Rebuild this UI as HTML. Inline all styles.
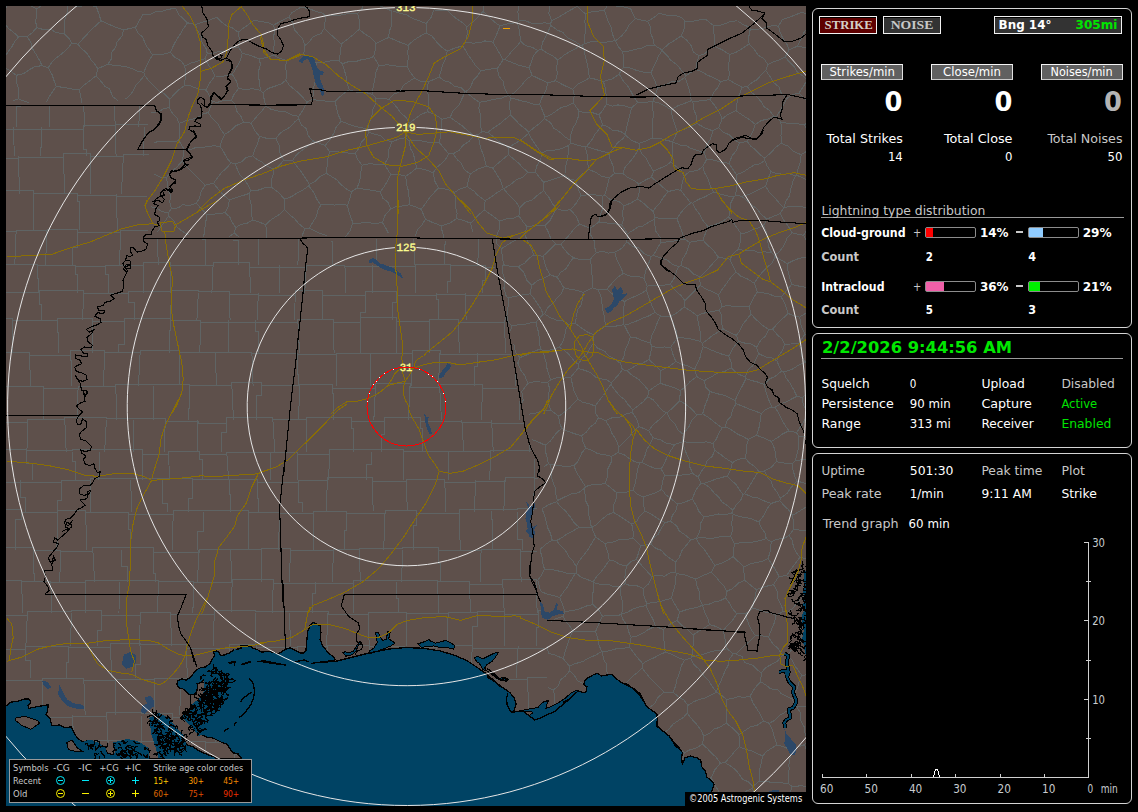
<!DOCTYPE html>
<html lang="en"><head><meta charset="utf-8"><title>Lightning Detector</title>
<style>
html,body{margin:0;padding:0;background:#000;}
body{width:1138px;height:812px;position:relative;overflow:hidden;font-family:"DejaVu Sans Condensed","DejaVu Sans","Liberation Sans",sans-serif;}
#map{position:absolute;left:6px;top:6px;width:800px;height:800px;background:#5e504b;overflow:hidden;}
#map svg{position:absolute;left:0;top:0;}
.panel{position:absolute;left:812px;width:318px;border:1px solid #d4d4d4;border-radius:6px;background:#000;}
.btn{position:absolute;box-sizing:border-box;border:1px solid #f2f2f2;box-shadow:inset 0 1px 0 #000;}
.bar{position:absolute;box-sizing:border-box;width:51px;height:11px;border:1px solid #8c8c8c;border-radius:2px;background:#000;}
.bar i{position:absolute;left:0;top:0;bottom:0;display:block;}
.hr{position:absolute;height:1px;background:#9a9a9a;}
#legend{position:absolute;left:9px;top:759px;width:243px;height:44px;box-sizing:border-box;border:1px solid #9a9a9a;background:#000;}
#copy{position:absolute;left:685px;top:792px;width:121px;height:14px;background:#000;}
#ov{position:absolute;left:0;top:0;}
.ss{font-family:"DejaVu Sans Condensed","DejaVu Sans","Liberation Sans",sans-serif;}
.sf{font-family:"Liberation Serif","DejaVu Serif",serif;}
</style></head><body>
<div id="map"><svg width="800" height="800" viewBox="6 6 800 800" shape-rendering="crispEdges">
<path d="M809.6,16.0 811.4,21.6 M811.4,21.6 817.7,25.8 821.2,30.0 826.9,33.2 M809.6,16.0 802.0,12.1 M588.2,739.7 593.7,733.6 598.6,728.9 601.5,723.6 607.7,719.4 M588.2,739.7 583.5,736.0 577.7,733.3 570.7,731.8 M607.7,719.4 605.1,715.1 601.8,708.1 599.1,703.0 595.7,698.2 M595.7,698.2 590.7,700.2 585.3,704.0 580.9,707.1 576.3,710.7 569.8,713.1 565.0,717.0 M570.7,731.8 568.5,725.5 565.0,717.0 M640.3,824.9 641.6,817.3 642.9,811.1 644.6,804.7 647.3,797.8 M609.1,821.1 611.4,815.0 610.6,807.2 612.3,798.3 613.9,791.8 M647.3,797.8 646.7,796.7 M613.9,791.8 620.9,792.1 626.1,793.4 634.8,795.5 639.5,794.5 646.7,796.7 M611.1,684.0 617.1,683.0 625.7,683.5 M611.1,684.0 605.7,687.6 600.2,693.6 595.9,696.8 M607.7,719.4 614.5,722.2 623.8,725.3 M595.9,696.8 595.7,698.2 M625.7,683.5 629.2,690.3 631.8,695.6 635.0,702.1 635.8,708.5 640.0,713.6 M623.8,725.3 628.7,721.0 634.4,717.4 640.0,713.6 M664.1,692.3 658.0,697.3 654.3,704.0 649.0,708.0 643.0,713.5 M664.1,692.3 660.8,688.6 655.1,683.2 649.9,677.9 646.5,673.5 642.1,668.2 M625.7,683.5 631.3,677.5 637.6,672.3 642.1,668.2 M640.0,713.6 643.0,713.5 M553.5,690.1 555.0,698.8 554.1,706.2 555.2,712.4 M553.5,690.1 548.0,687.5 M550.1,716.0 555.2,712.4 M595.9,696.8 591.8,692.5 587.2,689.4 582.6,683.4 577.6,680.8 573.7,674.4 569.6,670.9 M569.6,670.9 565.1,676.4 560.5,679.9 558.5,685.5 553.5,690.1 M565.0,717.0 555.2,712.4 M550.3,760.0 555.4,753.3 557.7,748.7 561.6,744.4 567.1,737.4 570.7,731.8 M772.6,329.1 778.4,322.6 783.5,317.8 788.2,313.4 M772.6,329.1 777.7,335.3 781.4,338.1 784.8,344.2 M784.8,344.2 790.9,344.0 798.5,343.7 M788.2,313.4 794.7,316.3 799.6,317.1 M799.6,317.1 801.2,325.9 804.9,334.1 M804.9,334.1 798.5,343.7 M816.8,254.4 820.4,259.1 823.1,265.9 M828.1,314.9 822.0,314.3 815.4,313.2 809.2,311.0 M809.2,311.0 809.5,304.6 810.7,297.9 811.3,293.8 812.8,286.6 M819.3,282.7 812.8,286.6 M823.1,265.9 822.3,275.5 819.3,282.7 M799.6,317.1 809.2,311.0 M818.7,336.5 812.8,334.1 804.9,334.1 M828.6,420.3 827.6,428.3 828.2,435.8 827.9,441.7 M725.2,426.9 730.2,429.1 737.0,433.8 742.2,436.2 748.4,439.5 M725.2,426.9 727.4,419.9 731.0,416.3 732.5,409.7 736.1,403.8 M736.1,403.8 743.0,406.3 748.4,408.8 755.9,411.3 761.2,413.7 M761.2,413.7 760.4,419.8 759.1,427.2 756.6,435.3 M756.6,435.3 748.4,439.5 M722.2,427.9 718.9,432.9 716.4,438.9 713.0,443.6 M722.2,427.9 725.2,426.9 M713.0,443.6 714.7,450.3 M732.3,462.6 725.6,458.2 719.6,453.7 714.7,450.3 M732.3,462.6 738.8,459.2 745.0,458.2 M745.0,458.2 747.0,450.6 746.6,445.3 748.4,439.5 M722.2,427.9 716.7,423.8 712.3,420.5 707.9,416.9 702.6,413.9 M702.6,413.9 705.1,405.2 707.6,399.1 709.9,391.5 M736.1,403.8 735.2,400.5 M735.2,400.5 728.8,397.2 722.9,394.9 716.5,393.6 709.9,391.5 M733.2,514.2 739.2,516.5 746.8,517.8 752.4,519.2 758.9,522.0 M733.2,514.2 731.7,522.9 732.4,530.2 730.6,536.6 M758.9,522.0 760.9,527.2 764.9,532.9 766.3,538.7 M766.3,538.7 760.5,540.6 753.6,541.9 748.3,542.6 741.0,542.7 734.3,543.7 M730.6,536.6 734.3,543.7 M703.9,517.1 709.8,515.9 718.5,514.0 725.6,514.9 732.5,512.7 M703.9,517.1 700.6,523.4 699.8,531.8 696.3,538.4 M732.5,512.7 733.2,514.2 M730.6,536.6 724.2,536.1 715.7,537.6 709.9,538.8 702.0,537.2 696.3,538.4 M727.3,476.1 722.2,477.3 715.8,479.1 709.0,481.7 703.3,483.7 M727.3,476.1 732.3,481.2 735.9,484.3 739.9,490.4 743.0,494.3 M703.3,483.7 709.1,486.9 714.4,493.3 718.7,496.9 721.8,501.9 727.4,505.5 732.8,510.3 M743.0,494.3 740.9,499.9 736.6,504.4 732.8,510.3 M732.3,462.6 730.5,470.0 727.3,476.1 M714.7,450.3 712.4,456.0 706.9,461.2 705.4,466.5 701.8,470.7 698.0,477.1 M698.0,477.1 701.0,483.3 M701.0,483.3 703.3,483.7 M745.0,458.2 750.0,463.4 753.3,465.5 758.7,471.0 M744.3,493.7 749.0,487.2 751.0,483.4 755.7,475.7 758.7,471.0 M744.3,493.7 743.0,494.3 M703.9,517.1 699.0,511.5 696.3,505.7 692.4,498.8 M732.5,512.7 732.8,510.3 M692.4,498.8 695.5,490.6 701.0,483.3 M744.3,493.7 752.2,497.0 757.4,497.9 763.7,500.7 771.3,503.4 M771.3,503.4 767.1,508.7 763.6,515.7 758.9,522.0 M557.4,500.6 565.0,496.7 571.4,494.0 578.6,492.8 584.3,488.5 M557.4,500.6 555.7,493.6 555.4,488.0 553.3,483.2 551.3,477.2 551.4,469.5 550.1,464.5 M573.8,465.8 564.9,466.4 559.3,465.7 550.1,464.5 M573.8,465.8 577.3,473.6 581.1,479.7 585.5,486.6 M585.5,486.6 584.3,488.5 M539.8,549.7 546.2,544.0 552.2,540.2 M541.7,508.7 544.1,513.8 546.1,521.4 547.5,527.6 550.5,533.4 552.2,540.2 M557.4,500.6 556.6,501.7 M550.1,464.5 548.4,463.5 M541.7,508.7 548.9,504.6 556.6,501.7 M548.4,463.5 543.8,467.1 M593.7,582.8 593.2,581.8 M593.7,582.8 599.8,584.2 607.3,584.1 612.8,586.2 620.9,586.9 M620.9,586.9 625.1,583.6 M625.1,583.6 625.0,576.0 626.4,566.1 M626.4,566.1 619.5,564.4 614.3,561.0 609.3,560.3 M609.3,560.3 605.1,566.3 601.3,571.6 597.5,575.2 593.2,581.8 M643.3,588.4 636.4,585.6 631.0,586.0 625.1,583.6 M643.3,588.4 644.1,597.3 647.1,603.8 M620.9,586.9 620.7,594.4 622.3,601.5 622.7,606.8 621.8,613.8 M647.1,603.8 646.1,605.8 M646.1,605.8 639.8,606.6 633.2,609.0 627.1,612.4 621.8,613.8 M593.7,582.8 593.4,590.4 592.2,597.1 593.0,604.5 M602.4,616.2 598.4,609.6 593.0,604.5 M602.4,616.2 608.6,615.2 614.5,616.0 621.0,614.7 M621.0,614.7 621.8,613.8 M646.1,605.8 649.7,613.5 652.7,618.7 655.5,626.2 M621.0,614.7 622.9,619.4 627.1,625.3 628.4,631.2 631.2,637.3 M655.5,626.2 648.4,629.5 644.0,632.5 638.0,635.7 631.2,637.3 M611.1,684.0 609.3,678.7 606.3,670.3 606.5,664.1 603.5,659.4 602.3,651.8 M602.3,651.8 607.8,651.1 616.7,648.7 622.7,648.6 629.2,646.9 M642.1,668.2 642.8,663.7 M642.8,663.7 638.1,658.4 633.9,653.1 629.2,646.9 M687.2,713.1 683.5,717.3 678.6,720.5 673.2,724.0 669.7,728.3 664.5,732.8 M687.2,713.1 688.0,705.3 M664.1,692.3 673.2,692.4 M664.5,732.8 658.0,729.2 652.9,723.9 648.5,718.6 643.0,713.5 M688.0,705.3 683.9,700.0 678.5,696.7 673.2,692.4 M655.5,626.2 663.0,629.6 M642.8,663.7 647.5,660.6 653.3,658.1 658.5,655.4 665.1,652.2 M629.2,646.9 631.2,637.3 M665.1,652.2 664.5,644.8 663.5,637.8 663.0,629.6 M673.2,692.4 675.8,685.3 677.1,678.8 679.5,673.3 681.2,665.8 684.6,660.1 M665.1,652.2 670.4,653.7 678.3,657.8 684.6,660.1 M647.1,603.8 652.7,602.4 659.7,601.8 664.9,600.1 671.5,598.3 M671.5,598.3 675.4,605.2 679.5,612.0 M679.5,612.0 677.2,620.5 M677.2,620.5 670.5,624.0 663.0,629.6 M813.8,560.2 813.7,565.6 816.1,574.1 816.2,579.6 M813.8,560.2 819.3,554.4 827.2,549.4 M799.9,557.5 794.9,564.0 790.3,570.0 786.7,575.7 M799.9,557.5 796.4,552.6 793.5,546.7 792.0,539.9 789.0,535.6 M789.0,535.6 784.0,538.3 775.9,539.5 771.2,542.0 M771.2,542.0 770.5,550.5 768.1,558.6 M768.1,558.6 772.8,565.5 775.2,569.2 779.0,576.3 M786.7,575.7 779.0,576.3 M813.8,560.2 808.2,558.9 799.9,557.5 M816.2,579.6 811.4,584.4 805.1,588.2 M805.1,588.2 798.8,583.6 792.6,579.5 786.7,575.7 M793.6,529.3 800.1,530.2 804.4,530.1 812.7,531.6 816.6,531.8 823.7,533.9 M793.6,529.3 789.0,535.6 M827.2,549.4 826.1,540.7 823.7,533.9 M805.0,595.0 805.1,588.2 M805.0,595.0 810.3,600.2 814.5,603.8 821.8,609.2 826.2,612.9 M826.2,612.9 829.0,613.1 M610.9,384.5 606.0,390.9 603.5,395.5 599.4,400.1 595.3,406.1 M610.9,384.5 611.1,382.9 M611.1,382.9 606.5,379.7 599.3,378.6 595.5,377.0 590.1,372.3 584.2,370.2 578.0,368.5 M578.0,399.3 583.0,402.5 588.5,403.4 595.3,406.1 M578.0,399.3 574.4,392.1 572.5,384.5 570.7,377.1 M570.7,377.1 578.0,368.5 M802.0,12.1 794.7,15.2 789.4,17.2 782.1,19.7 M681.6,17.4 674.9,15.5 667.2,15.3 659.1,13.4 M749.1,27.2 742.4,24.2 737.4,20.7 M188.3,234.9 181.6,230.8 177.0,227.0 173.7,220.5 168.5,216.0 M168.5,216.0 165.0,221.2 161.5,226.0 157.6,231.8 M320.8,205.0 317.8,210.3 316.3,216.9 312.4,222.8 309.3,228.0 M320.8,205.0 328.6,204.5 334.8,205.1 339.8,204.4 347.7,205.2 M309.3,228.0 313.9,230.5 320.3,233.5 327.4,235.8 M347.7,205.2 348.4,210.8 351.0,217.6 352.9,223.0 M352.9,223.0 349.8,231.3 344.9,237.6 M382.5,222.7 375.0,223.4 368.4,222.8 361.0,223.0 352.9,223.0 M382.5,222.7 386.1,228.7 388.3,233.1 M309.3,228.0 304.9,228.8 M304.9,228.8 302.2,235.5 M13.8,-5.8 9.4,-0.8 6.2,7.2 2.9,12.8 -0.9,19.2 M-0.9,19.2 4.7,22.9 8.2,28.2 13.4,32.3 18.5,36.8 M0.4,64.3 3.1,60.0 7.2,53.1 12.0,46.5 14.1,42.5 18.5,36.8 M771.9,818.0 762.5,813.8 M821.5,774.3 817.4,779.4 812.5,785.3 M812.5,785.3 815.9,790.0 819.0,797.9 821.0,803.5 823.1,808.0 M602.3,651.8 601.8,651.6 M569.6,670.9 569.4,666.1 M569.4,666.1 574.9,663.7 582.7,661.6 588.2,658.3 594.8,655.5 601.8,651.6 M602.4,616.2 598.8,623.9 595.5,631.8 M601.8,651.6 599.1,645.3 597.6,637.2 595.5,631.8 M550.9,622.0 555.5,618.8 563.0,616.5 M547.1,645.6 548.4,653.5 M563.0,616.5 566.1,621.5 570.7,627.5 572.8,631.7 M572.8,631.7 569.7,637.9 567.7,643.9 565.2,651.5 563.2,658.6 M548.4,653.5 554.6,654.8 563.2,658.6 M593.0,604.5 585.3,606.3 578.6,609.3 570.8,610.7 564.8,611.6 M564.8,611.6 563.0,616.5 M595.5,631.8 588.1,631.5 579.9,632.0 572.8,631.7 M569.4,666.1 563.2,658.6 M564.8,611.6 562.6,604.5 559.7,597.5 M576.2,573.1 581.1,577.2 587.1,579.5 593.2,581.8 M576.2,573.1 575.2,573.6 M575.2,573.6 572.2,578.3 567.7,586.6 564.5,590.6 559.7,597.5 M609.1,821.1 603.4,820.8 596.5,819.3 590.3,818.4 584.5,818.0 M584.5,818.0 583.2,811.5 582.9,805.4 582.9,796.9 582.5,791.2 M613.9,791.8 610.2,786.5 M610.2,786.5 602.5,787.0 597.4,790.0 588.4,791.2 582.5,791.2 M551.4,764.9 550.3,760.0 M551.4,764.9 556.4,770.1 561.2,774.1 565.6,777.0 M588.2,739.7 589.6,748.4 593.0,755.5 M565.6,777.0 566.5,777.1 M593.0,755.5 587.1,760.4 581.2,763.4 577.5,767.7 572.6,773.8 566.5,777.1 M625.0,734.7 629.6,740.0 636.3,744.4 642.7,750.3 647.0,755.1 M625.0,734.7 621.2,740.6 617.8,744.3 614.6,750.5 610.9,755.0 608.2,760.9 M608.2,760.9 613.0,768.5 M613.0,768.5 618.5,767.3 627.7,768.7 633.0,768.4 638.9,766.9 646.8,766.4 M646.8,766.4 647.0,755.1 M664.5,734.8 664.5,732.8 M664.5,734.8 660.8,739.8 656.2,743.7 652.6,750.6 647.0,755.1 M623.8,725.3 625.0,734.7 M593.0,755.5 601.2,757.7 608.2,760.9 M610.2,786.5 611.3,781.8 611.1,775.1 613.0,768.5 M566.5,777.1 571.0,782.8 577.6,785.8 582.5,791.2 M646.7,796.7 645.8,789.1 646.6,781.7 648.5,776.0 648.0,768.1 M648.0,768.1 646.8,766.4 M648.0,768.1 653.7,767.8 661.4,769.0 665.9,769.9 673.4,768.5 679.5,769.0 M664.5,734.8 668.8,738.2 674.5,743.2 679.1,748.1 684.3,752.7 M684.3,752.7 682.1,761.0 679.5,769.0 M818.7,336.5 821.8,343.0 824.6,350.2 M761.2,413.7 765.5,409.7 771.7,406.9 M735.2,400.5 737.7,394.3 740.1,389.8 743.3,384.1 745.8,378.7 M745.8,378.7 752.5,380.8 757.0,381.8 764.0,384.4 M771.7,406.9 768.9,400.2 765.8,391.1 764.0,384.4 M816.2,485.4 817.7,477.7 820.9,470.5 824.3,463.5 M827.9,441.7 826.2,443.2 M826.2,443.2 824.6,452.1 823.0,460.7 M824.3,463.5 823.0,460.7 M776.4,461.7 775.7,454.7 774.4,448.5 771.4,441.4 M776.4,461.7 784.7,463.2 792.2,463.7 M792.2,463.7 795.4,460.6 M795.4,460.6 796.8,454.8 798.1,449.6 798.3,441.8 798.8,436.1 M771.4,441.4 778.1,437.3 782.4,434.1 788.9,430.9 M788.9,430.9 796.5,432.6 M796.5,432.6 798.8,436.1 M758.7,471.0 764.4,471.0 M764.4,471.0 771.1,467.5 776.4,461.7 M756.6,435.3 764.4,438.3 771.4,441.4 M826.2,443.2 820.4,442.5 812.5,440.9 806.4,437.0 798.8,436.1 M823.0,460.7 817.2,461.4 809.3,459.7 802.7,459.7 795.4,460.6 M771.7,406.9 774.6,407.5 M774.6,407.5 778.3,412.3 782.3,420.5 785.6,426.1 788.9,430.9 M828.6,420.3 821.8,417.8 813.1,417.9 806.9,416.1 M806.9,416.1 804.1,421.2 800.3,427.2 796.5,432.6 M811.8,503.9 812.1,496.0 814.0,486.6 M811.8,503.9 806.1,507.0 798.7,511.7 792.6,515.4 M792.6,515.4 788.5,509.7 784.1,505.8 779.9,500.6 M796.8,481.1 803.7,482.8 807.1,484.4 814.0,486.6 M796.8,481.1 791.3,487.2 787.0,493.5 780.4,498.1 M779.9,500.6 780.4,498.1 M816.2,485.4 814.0,486.6 M793.6,529.3 793.4,521.7 792.6,515.4 M771.3,503.4 779.9,500.6 M766.3,538.7 771.2,542.0 M792.2,463.7 792.9,469.5 794.8,476.4 796.8,481.1 M764.4,471.0 767.7,477.5 771.2,481.2 773.0,487.0 777.3,492.7 780.4,498.1 M745.1,377.0 737.6,373.7 731.2,367.9 M745.1,377.0 747.8,370.1 752.9,365.5 755.5,360.1 758.6,353.6 M731.2,367.9 731.2,362.8 728.8,356.1 M728.8,356.1 733.0,348.0 738.5,341.2 M738.5,341.2 745.5,343.3 751.6,344.1 756.5,347.4 M756.5,347.4 758.6,353.6 M709.9,391.5 705.8,387.1 704.1,380.7 M704.1,380.7 712.1,376.5 717.1,373.2 724.6,371.5 731.2,367.9 M745.8,378.7 745.1,377.0 M776.7,360.7 781.5,371.1 M776.7,360.7 771.9,357.9 765.8,357.0 758.6,353.6 M764.0,384.4 769.4,378.9 774.5,376.8 781.5,371.1 M696.7,376.6 704.1,380.7 M696.7,376.6 694.6,369.5 M694.6,369.5 696.6,364.9 700.1,357.3 701.3,351.7 703.2,346.6 M703.2,346.6 708.8,348.9 715.6,351.8 722.6,354.4 728.8,356.1 M768.9,329.5 765.7,335.8 760.6,340.4 756.5,347.4 M768.9,329.5 772.6,329.1 M776.7,360.7 778.4,355.8 782.4,350.7 784.8,344.2 M661.7,489.3 665.8,494.7 673.3,500.5 677.6,504.2 M661.7,489.3 656.1,492.8 650.2,494.5 643.5,496.9 M645.0,511.0 643.1,504.0 643.5,496.9 M645.0,511.0 651.1,514.1 657.7,518.5 665.1,522.7 M677.6,504.2 675.8,510.6 672.3,515.6 670.5,521.2 M670.5,521.2 665.1,522.7 M692.4,498.8 685.2,502.1 677.6,504.2 M696.3,538.4 696.2,538.6 M696.2,538.6 690.6,539.7 M690.6,539.7 685.8,535.4 679.3,531.1 676.6,525.8 670.5,521.2 M733.0,556.7 727.2,560.6 722.0,562.9 714.8,565.5 M733.0,556.7 738.4,561.7 743.9,566.8 M744.6,580.2 744.0,572.7 743.9,566.8 M744.6,580.2 738.5,583.0 732.6,588.6 726.9,591.3 M726.9,591.3 724.0,586.1 719.3,581.1 715.6,576.6 711.4,572.2 M714.8,565.5 711.4,572.2 M734.3,543.7 733.7,551.4 733.0,556.7 M696.2,538.6 699.5,544.3 703.4,548.3 707.5,554.1 711.5,560.4 714.8,565.5 M768.1,558.6 763.2,561.0 755.4,562.7 751.1,563.6 743.9,566.8 M773.5,584.6 764.6,586.7 756.4,589.7 M773.5,584.6 779.0,576.3 M756.4,589.7 751.6,586.0 744.6,580.2 M636.4,559.3 638.8,552.1 640.8,545.6 M636.4,559.3 642.4,566.3 646.7,570.8 651.9,576.9 M651.9,576.9 657.1,575.0 664.7,576.2 670.2,572.8 675.9,573.0 M640.8,545.6 651.0,544.1 M651.0,544.1 655.8,548.4 661.3,550.3 665.4,555.1 669.2,557.7 675.4,562.2 M675.9,573.0 675.4,562.2 M633.0,537.9 640.8,545.6 M633.0,537.9 626.1,539.7 619.4,539.5 612.9,542.1 604.7,543.4 M626.4,566.1 631.1,561.5 636.4,559.3 M609.3,560.3 607.8,551.7 604.7,543.4 M643.3,588.4 648.8,583.6 651.9,576.9 M676.4,573.6 675.4,580.4 674.9,586.4 673.1,592.0 671.5,598.3 M676.4,573.6 675.9,573.0 M633.0,537.9 633.1,531.8 631.8,524.3 M631.8,524.3 637.2,521.0 639.5,516.4 645.0,511.0 M665.1,522.7 660.8,529.1 657.9,534.6 653.7,537.5 651.0,544.1 M690.6,539.7 687.3,544.2 681.8,550.6 679.4,557.3 675.4,562.2 M676.4,573.6 684.0,574.7 689.5,576.7 695.8,579.1 M695.8,579.1 703.5,575.2 711.4,572.2 M639.6,463.0 634.1,461.3 629.4,458.8 623.8,454.5 617.9,452.5 M639.6,463.0 637.4,470.4 636.5,476.2 635.4,483.3 632.9,490.1 M632.9,490.1 625.1,492.6 616.7,492.8 M611.4,456.4 617.9,452.5 M611.4,456.4 611.1,462.4 607.5,469.5 607.5,476.5 605.2,483.3 M605.2,483.3 610.1,487.2 616.7,492.8 M613.3,512.3 613.2,505.8 616.5,498.2 616.7,492.8 M613.3,512.3 618.6,515.3 626.0,520.3 631.8,524.3 M643.5,496.9 637.3,494.5 632.9,490.1 M573.8,465.8 578.2,461.1 581.9,452.8 585.7,448.1 M585.5,486.6 591.4,484.9 597.8,485.0 605.2,483.3 M585.7,448.1 592.5,450.7 597.3,453.5 605.2,454.9 611.4,456.4 M598.4,417.7 595.2,423.2 589.7,427.5 586.1,432.3 581.8,435.6 M598.4,417.7 605.6,420.6 M585.7,448.1 582.8,441.2 581.8,435.6 M617.9,452.5 618.9,447.3 M605.6,420.6 609.7,427.0 611.8,433.1 616.7,440.9 618.9,447.3 M556.7,540.5 562.0,537.6 567.2,533.7 572.6,531.3 579.1,527.1 M556.7,540.5 559.8,545.0 565.1,549.9 568.9,556.6 572.7,560.8 576.2,566.2 M576.2,566.2 578.9,561.1 584.7,554.0 588.4,548.9 592.4,542.3 595.6,536.9 M579.1,527.1 584.3,527.9 591.3,527.3 M595.6,536.9 591.7,527.5 M591.7,527.5 591.3,527.3 M556.6,501.7 560.9,507.1 565.4,510.8 570.8,517.6 574.5,523.2 579.1,527.1 M552.2,540.2 556.7,540.5 M539.8,549.7 542.3,557.5 542.6,562.5 544.5,569.2 M576.2,573.1 576.2,566.2 M544.5,569.2 550.2,569.1 556.4,570.5 563.9,572.3 567.9,573.9 575.2,573.6 M604.7,543.4 595.6,536.9 M584.3,488.5 585.3,495.8 585.8,501.1 588.7,506.8 588.5,514.4 590.3,520.9 591.3,527.3 M613.3,512.3 607.3,515.0 602.3,519.0 596.2,524.9 591.7,527.5 M684.6,660.1 690.6,658.2 M690.6,658.2 691.8,656.8 M677.2,620.5 681.6,625.2 687.9,629.6 693.0,635.0 M693.0,635.0 693.3,641.0 692.8,649.5 691.8,656.8 M690.6,658.2 693.7,664.3 698.8,668.9 701.5,672.3 705.5,677.7 708.8,681.0 712.3,686.7 716.2,691.8 M691.8,656.8 698.5,655.6 704.6,653.9 708.5,652.5 715.8,650.5 720.5,650.6 727.1,648.7 M727.1,648.7 733.1,653.8 M733.1,653.8 729.3,659.4 728.1,665.3 724.6,672.1 721.4,679.8 719.5,684.2 716.2,691.8 M688.0,705.3 693.5,701.9 699.1,699.4 704.4,698.3 709.4,695.9 716.3,692.2 M716.3,692.2 716.2,691.8 M805.0,595.0 800.0,599.9 797.6,602.4 792.6,608.4 787.6,612.3 M773.5,584.6 777.0,590.6 777.5,597.7 781.6,606.0 783.1,611.6 M787.6,612.3 783.1,611.6 M826.2,612.9 818.8,616.5 812.4,620.4 807.7,623.6 800.8,628.5 M787.6,612.3 790.7,616.8 797.0,622.9 800.8,628.5 M777.0,745.0 783.5,746.7 789.4,749.3 M777.0,745.0 774.7,737.9 772.1,729.3 769.2,723.3 M769.2,723.3 774.2,720.6 780.1,714.9 783.4,713.3 789.7,709.0 794.2,705.3 M789.4,749.3 797.2,747.2 804.6,744.6 M794.2,705.3 797.1,707.0 M797.1,707.0 800.0,712.3 800.4,719.6 804.4,727.3 805.1,733.9 808.1,739.9 M804.6,744.6 808.1,739.9 M821.5,774.3 819.0,768.2 813.6,762.5 810.7,756.8 807.1,751.7 804.6,744.6 M812.5,785.3 806.5,786.1 799.5,785.9 792.1,786.7 M792.1,786.7 789.0,783.9 M789.0,783.9 788.2,777.1 789.1,769.5 788.9,764.3 790.6,755.2 789.4,749.3 M800.8,628.5 801.4,634.5 800.6,642.6 M797.1,707.0 804.6,706.1 810.0,705.9 816.8,703.9 822.2,703.8 M501.9,266.6 503.1,274.6 505.2,280.2 503.9,288.2 506.2,296.1 M548.4,463.5 547.0,457.0 545.1,450.2 545.3,445.3 M581.8,435.6 576.0,434.2 567.6,431.3 561.7,428.1 M545.3,445.3 550.6,440.8 555.5,434.1 561.7,428.1 M578.0,399.3 574.1,402.7 569.2,408.3 564.2,412.3 558.8,416.3 M595.3,406.1 595.5,413.0 598.4,417.7 M558.8,416.3 559.4,422.7 561.7,428.1 M559.2,347.3 564.5,350.3 569.1,354.7 574.1,360.9 578.4,364.4 M559.2,347.3 551.5,349.9 542.8,350.4 M570.7,377.1 563.1,378.3 557.2,377.6 550.7,379.7 M578.4,364.4 578.0,368.5 M542.8,350.4 544.4,356.7 546.0,362.3 546.8,367.8 548.1,372.6 550.7,379.7 M513.8,343.9 515.5,352.1 519.9,357.6 M519.9,357.6 517.8,363.1 M364.6,1.5 362.4,8.2 357.7,13.3 M364.6,1.5 371.2,4.0 379.5,5.7 385.0,8.0 392.0,11.1 M357.7,13.3 359.7,22.0 359.0,29.4 M388.9,37.4 389.1,31.7 391.7,25.4 391.5,18.6 392.0,11.1 M388.9,37.4 382.1,40.5 376.0,43.5 M359.0,29.4 365.4,34.4 371.5,38.1 376.0,43.5 M681.6,17.4 684.8,21.2 M684.8,21.2 692.0,21.4 698.0,20.1 705.1,19.0 M737.4,20.7 730.4,21.5 724.5,23.9 720.0,25.5 714.0,25.8 M705.1,19.0 714.0,25.8 M782.1,19.7 778.5,26.1 M749.1,27.2 750.3,29.1 M778.5,26.1 772.4,25.6 764.6,27.8 757.2,29.5 750.3,29.1 M630.7,8.9 623.4,6.8 615.5,6.0 608.2,4.6 M611.1,382.9 617.3,376.3 622.4,369.7 M578.4,364.4 582.0,357.9 587.1,354.2 589.1,349.4 593.5,343.2 M593.5,343.2 597.7,348.3 604.7,351.2 608.5,355.8 614.0,358.6 620.4,363.5 M622.4,369.7 620.4,363.5 M382.5,222.7 385.3,214.7 390.7,208.9 M421.2,209.3 425.4,219.1 M421.2,209.3 415.0,206.6 409.4,204.8 M390.7,208.9 395.8,206.7 402.5,205.9 409.4,204.8 M415.6,235.7 417.5,229.9 422.5,224.3 425.4,219.1 M421.2,209.3 425.8,203.0 429.4,198.0 433.8,193.0 438.4,188.0 M409.4,204.8 409.2,198.3 408.5,191.3 406.2,182.9 405.9,176.2 M433.2,172.8 434.9,181.3 438.4,188.0 M433.2,172.8 425.9,169.8 416.6,168.0 M416.6,168.0 410.9,172.7 405.9,176.2 M439.7,143.0 440.3,134.9 441.3,127.6 442.0,119.3 M439.7,143.0 433.2,142.7 428.1,142.2 420.1,140.7 414.7,140.1 409.1,141.0 M409.3,123.1 415.1,118.9 420.4,114.7 427.6,111.7 M409.3,123.1 407.4,131.6 405.8,137.7 M442.0,119.3 435.3,114.6 427.6,111.7 M409.1,141.0 405.8,137.7 M450.2,117.3 455.5,121.2 462.1,125.7 468.9,131.9 473.9,135.4 M450.2,117.3 442.0,119.3 M448.8,154.0 453.1,153.8 M448.8,154.0 443.4,147.4 439.7,143.0 M453.1,153.8 459.2,150.2 462.9,145.4 469.2,141.3 473.9,135.4 M448.8,154.0 445.8,158.9 441.5,163.5 437.1,167.1 433.2,172.8 M416.6,168.0 415.3,162.3 413.4,153.7 410.3,148.1 409.1,141.0 M450.2,117.3 453.2,110.8 458.7,105.5 461.7,99.2 465.3,91.7 M465.3,91.7 461.2,87.8 454.5,86.2 449.6,82.3 444.4,80.8 439.0,77.0 M439.0,77.0 428.2,82.0 M428.2,82.0 427.4,90.6 428.8,97.5 428.7,103.6 427.6,111.7 M470.2,174.1 464.7,169.9 460.8,162.8 457.8,160.2 453.1,153.8 M470.2,174.1 477.6,169.2 486.3,166.3 M473.9,135.4 477.7,134.7 M477.7,134.7 479.0,140.1 480.8,148.6 483.3,154.7 484.9,160.8 486.3,166.3 M203.7,236.9 204.9,227.8 205.7,222.6 206.9,214.7 M235.8,227.6 232.0,221.9 229.6,216.7 225.0,212.9 M235.8,227.6 234.2,233.0 M234.2,233.0 228.6,237.3 M206.9,214.7 213.2,214.3 219.0,213.2 225.0,212.9 M168.5,216.0 168.7,212.3 M196.1,203.2 202.6,210.1 206.9,214.7 M196.1,203.2 189.3,205.5 182.6,204.7 178.2,207.9 171.4,208.6 M171.4,208.6 168.7,212.3 M168.7,212.3 162.0,211.9 157.6,208.6 151.4,206.7 M234.2,233.0 238.7,236.7 M304.9,228.8 298.8,223.6 294.2,218.4 289.9,214.9 284.5,209.4 M266.9,237.8 266.7,230.5 265.7,224.8 M284.5,209.4 280.4,213.9 275.6,216.6 269.9,220.8 265.7,224.8 M235.8,227.6 240.3,224.7 247.3,223.1 252.6,220.0 M252.6,220.0 259.1,222.0 265.7,224.8 M357.7,13.3 349.9,13.2 345.6,14.2 336.9,15.8 330.5,15.5 324.9,15.4 M323.2,13.4 324.9,15.4 M13.8,-5.8 20.0,-2.0 26.1,1.4 30.3,5.8 36.9,8.7 M18.5,36.8 27.2,36.4 M27.2,36.4 31.5,33.3 36.8,27.8 M36.9,8.7 36.8,14.7 35.6,21.2 36.8,27.8 M48.3,67.8 42.0,65.6 M48.3,67.8 52.1,74.7 54.2,81.0 56.2,86.4 M42.0,65.6 34.7,66.8 29.1,69.8 23.7,73.7 16.1,75.3 M56.2,86.4 52.0,92.6 48.5,97.9 46.3,102.1 M28.8,102.4 25.4,101.6 18.3,98.8 M16.1,75.3 16.3,82.1 18.8,89.8 18.3,98.8 M0.4,64.3 4.9,67.9 10.4,70.8 16.1,75.3 M27.2,36.4 31.0,43.1 31.9,47.9 36.0,54.2 39.9,61.0 42.0,65.6 M13.0,100.9 18.3,98.8 M108.0,64.0 111.1,59.4 111.9,52.0 115.7,47.3 117.1,41.9 122.2,35.7 123.6,30.0 M108.0,64.0 113.6,65.5 120.6,66.0 125.9,66.8 131.2,68.3 138.2,71.6 143.9,72.3 M152.5,55.0 149.7,59.6 146.3,66.3 143.9,72.3 M152.5,55.0 149.1,49.7 145.5,44.6 142.8,37.3 138.1,33.0 135.4,27.5 M135.4,27.5 129.6,28.5 123.6,30.0 M804.5,824.1 811.5,822.6 816.8,820.5 M786.9,811.9 788.6,805.4 789.6,798.9 790.0,793.2 792.1,786.7 M786.9,811.9 793.0,816.4 799.3,819.3 804.5,824.1 M823.1,808.0 820.3,813.5 816.8,820.5 M786.9,811.9 780.0,816.0 771.9,818.0 M559.7,597.5 554.3,595.7 548.2,594.5 540.7,591.4 M544.5,569.2 541.5,575.0 537.8,580.4 M537.8,580.4 540.7,591.4 M574.5,826.1 569.7,823.3 564.5,819.1 560.3,815.4 554.7,809.6 549.1,806.5 M584.5,818.0 578.8,822.3 574.5,826.1 M565.6,777.0 563.4,783.9 558.7,788.5 555.1,793.7 553.2,800.7 549.1,806.5 M802.0,397.5 796.9,396.4 M802.0,397.5 809.2,392.9 M796.9,396.4 794.0,390.3 789.8,382.9 786.2,378.2 783.6,371.8 M809.2,392.9 812.5,386.9 813.9,380.8 816.2,373.8 M783.6,371.8 791.6,369.7 799.4,364.6 805.6,362.5 M816.2,373.8 811.1,364.7 M811.1,364.7 805.6,362.5 M806.9,416.1 805.9,409.7 803.3,404.5 802.0,397.5 M774.6,407.5 780.5,403.9 786.9,401.8 792.5,398.5 796.9,396.4 M781.5,371.1 783.6,371.8 M798.5,343.7 801.3,349.6 801.9,356.6 805.6,362.5 M824.6,350.2 820.4,355.2 816.4,360.1 811.1,364.7 M702.5,605.3 702.6,605.2 M702.5,605.3 704.7,612.8 708.1,619.0 709.3,624.6 M702.6,605.2 708.9,604.3 713.8,602.0 720.0,600.8 725.7,597.9 M709.3,624.6 716.0,626.4 723.1,630.5 M723.1,630.5 728.4,624.5 732.3,620.6 736.8,613.8 M736.8,613.8 732.0,608.1 729.2,602.8 725.7,597.9 M679.5,612.0 687.6,609.3 695.4,607.8 702.5,605.3 M695.8,579.1 696.8,585.7 699.8,592.8 699.7,599.6 702.6,605.2 M693.0,635.0 698.2,631.5 703.9,628.3 709.3,624.6 M726.9,591.3 725.7,597.9 M727.1,648.7 725.6,643.3 724.8,637.7 723.1,630.5 M811.4,21.6 807.6,27.3 803.9,32.8 800.7,39.9 797.4,46.2 M826.9,33.2 825.3,39.6 824.4,47.0 824.6,53.6 M824.6,53.6 818.1,53.1 811.0,48.8 803.1,47.2 797.4,46.2 M778.5,26.1 780.0,31.7 782.7,38.1 787.4,45.0 789.0,49.7 M797.4,46.2 789.0,49.7 M824.6,53.6 827.4,58.7 M532.0,439.6 537.4,441.6 545.3,445.3 M697.0,415.1 691.8,420.3 689.0,426.6 683.1,434.3 M697.0,415.1 692.2,409.5 685.9,404.4 679.6,400.8 M683.1,434.3 677.8,429.8 674.8,423.7 670.2,419.4 666.9,412.9 M679.6,400.8 673.2,407.5 666.9,412.9 M713.0,443.6 706.2,441.8 700.7,442.5 695.6,443.0 688.2,442.6 682.8,440.8 M702.6,413.9 697.0,415.1 M682.8,440.8 683.1,434.3 M696.7,376.6 690.1,381.5 685.8,386.5 680.4,390.7 M680.4,390.7 679.6,400.8 M756.4,589.7 755.3,595.6 753.8,601.8 752.6,608.7 M783.1,611.6 776.0,615.3 M776.0,615.3 771.2,613.0 763.3,611.8 757.5,609.2 752.6,608.7 M736.8,613.8 745.4,613.8 M752.6,608.7 745.4,613.8 M733.1,653.8 735.8,654.0 M745.4,613.8 747.6,621.5 751.0,629.1 755.2,635.6 M735.8,654.0 739.4,650.7 745.0,645.1 751.2,640.1 755.2,635.6 M776.0,615.3 774.4,622.5 771.5,629.6 768.5,637.0 M755.2,635.6 762.9,636.0 768.5,637.0 M763.6,720.9 756.8,725.4 750.9,726.6 744.5,730.9 738.9,734.5 M763.6,720.9 760.0,713.9 756.0,707.4 753.1,703.2 750.2,696.0 M750.2,696.0 743.1,697.6 739.1,696.4 732.5,698.4 726.3,699.4 M726.3,699.4 726.7,708.2 726.1,714.8 726.2,723.1 M726.2,723.1 733.5,728.9 738.9,734.5 M687.2,713.1 690.9,718.0 696.2,723.8 700.8,729.8 703.8,736.1 M726.3,699.4 721.7,695.3 716.3,692.2 M726.2,723.1 719.4,727.6 714.4,728.7 710.1,733.1 703.8,736.1 M684.3,752.7 689.8,749.9 696.8,747.9 702.5,744.1 M703.8,736.1 702.5,744.1 M688.3,784.1 696.3,782.1 702.5,781.2 711.0,777.8 M688.3,784.1 686.6,789.5 683.2,794.9 682.5,801.3 M711.0,777.8 715.0,784.9 717.7,789.8 720.9,795.7 725.7,802.9 M682.5,801.3 684.0,807.4 686.7,811.8 688.8,817.3 692.5,823.8 M692.5,823.8 699.3,822.2 707.4,820.1 712.8,820.2 720.3,817.4 M720.3,817.4 722.2,809.0 725.7,802.9 M679.5,769.0 685.0,777.0 688.3,784.1 M720.4,763.2 716.1,757.2 711.1,752.8 708.1,749.3 702.5,744.1 M720.4,763.2 715.1,769.4 711.0,777.8 M647.3,797.8 655.0,799.5 661.4,799.9 668.4,799.8 675.4,801.7 682.5,801.3 M691.3,826.6 692.5,823.8 M762.5,813.8 759.4,807.0 756.2,801.6 755.9,795.0 752.2,788.3 M752.2,788.3 746.2,791.2 741.5,795.1 736.9,796.3 730.5,800.6 725.7,802.9 M512.0,325.9 508.1,321.8 M512.0,325.9 517.3,324.9 523.4,324.9 531.0,322.6 535.9,322.5 M508.1,321.8 507.0,315.8 507.2,309.8 508.6,304.3 508.2,297.7 M508.2,297.7 516.6,296.0 521.5,295.1 530.0,293.8 M530.0,293.8 533.7,298.1 536.8,302.7 540.5,308.1 543.1,314.1 M535.9,322.5 543.1,314.1 M510.1,331.3 512.0,325.9 M540.3,349.0 533.7,351.4 526.1,355.2 519.9,357.6 M540.3,349.0 539.6,342.5 539.2,337.0 538.0,330.4 535.9,322.5 M506.2,296.1 508.2,297.7 M503.6,264.8 511.8,266.7 518.2,266.7 M503.6,264.8 501.9,266.6 M531.8,285.3 526.8,280.2 523.8,272.4 518.2,266.7 M531.8,285.3 530.0,293.8 M559.2,347.3 562.8,341.5 564.6,336.2 565.9,329.3 568.6,324.3 M568.6,324.3 563.2,320.9 557.1,320.3 550.1,317.5 544.5,313.9 M544.5,313.9 543.1,314.1 M540.3,349.0 542.8,350.4 M465.3,91.7 465.8,91.7 M465.8,91.7 473.5,98.3 479.3,102.3 M477.7,134.7 481.7,131.9 M479.3,102.3 478.9,108.5 480.8,116.2 480.3,124.6 481.7,131.9 M508.6,147.6 508.4,154.7 M508.6,147.6 503.1,144.2 497.7,140.8 492.6,136.1 487.9,132.1 M486.3,166.3 492.7,167.9 M492.7,167.9 497.3,163.9 504.2,158.2 508.4,154.7 M487.9,132.1 481.7,131.9 M528.8,132.3 524.9,128.6 518.8,123.7 516.0,120.3 510.6,115.0 M528.8,132.3 528.7,133.2 M528.7,133.2 523.2,138.0 518.7,141.4 514.6,143.6 508.6,147.6 M487.9,132.1 493.9,127.8 500.0,123.6 505.6,118.9 510.6,115.0 M528.8,132.3 533.2,128.3 539.8,123.4 544.7,118.6 M539.6,104.0 542.3,110.2 545.0,117.1 M539.6,104.0 532.9,104.0 527.0,101.9 522.3,101.1 516.7,99.5 510.2,97.7 M544.7,118.6 545.0,117.1 M510.6,115.0 509.7,107.0 510.2,97.7 M509.8,-5.3 503.7,-1.5 497.7,-0.1 491.0,3.1 483.1,6.3 M714.0,25.8 713.9,32.6 714.6,39.9 715.0,46.4 M750.3,29.1 748.6,37.6 749.1,43.8 M749.1,43.8 743.9,47.5 736.4,52.1 729.7,54.6 M729.7,54.6 722.7,50.1 715.0,46.4 M630.7,8.9 635.4,18.7 M615.1,40.8 612.2,33.4 611.4,28.1 608.4,22.1 606.4,16.5 604.5,9.8 M615.1,40.8 615.4,40.9 M608.2,4.6 604.5,9.8 M615.4,40.9 621.7,35.9 626.6,29.7 629.4,24.5 635.4,18.7 M659.1,13.4 653.5,17.7 647.7,21.3 M647.7,21.3 642.3,20.4 635.4,18.7 M509.8,-5.3 513.5,1.2 518.8,5.2 M500.0,25.9 494.6,22.1 489.2,17.4 483.1,11.4 M500.0,25.9 509.8,23.2 517.5,22.8 M518.8,5.2 517.9,12.0 519.2,20.9 M483.1,6.3 483.1,11.4 M517.5,22.8 519.2,20.9 M575.0,323.3 576.5,317.5 577.4,309.9 580.8,305.5 582.4,299.1 583.2,292.5 M575.0,323.3 581.6,328.0 587.1,331.8 593.5,334.9 M593.5,334.9 599.3,330.1 605.6,326.2 M605.6,326.2 604.5,319.1 604.0,314.8 602.2,307.5 601.9,301.1 600.7,295.7 598.2,290.0 M583.2,292.5 592.7,287.8 M592.7,287.8 598.2,290.0 M568.6,324.3 575.0,323.3 M544.5,313.9 547.7,307.5 553.0,303.5 557.3,297.5 560.8,294.1 563.9,287.8 M563.9,287.8 571.0,289.4 577.7,290.5 583.2,292.5 M593.5,343.2 593.5,334.9 M623.4,324.7 624.4,325.3 M623.4,324.7 613.9,326.5 605.6,326.2 M620.4,363.5 623.7,357.1 625.3,349.3 628.6,342.5 630.4,336.9 M624.4,325.3 626.8,330.2 630.4,336.9 M768.9,329.5 762.9,325.6 756.9,320.3 751.0,314.2 M738.5,341.2 736.4,335.4 M736.4,335.4 739.5,331.4 742.6,324.6 746.8,319.4 751.0,314.2 M703.2,346.6 702.5,343.4 M702.5,343.4 708.8,338.6 712.2,335.7 718.4,331.9 723.0,328.8 M736.4,335.4 729.4,332.2 723.0,328.8 M702.5,343.4 700.5,341.4 M700.5,341.4 700.5,336.2 699.8,329.0 698.4,323.2 697.1,315.6 M723.0,328.8 721.3,322.7 721.9,315.7 719.4,310.3 M697.1,315.6 703.5,313.2 713.3,311.3 719.4,310.3 M751.0,314.2 749.3,306.7 M749.3,306.7 742.0,306.7 734.5,306.8 729.2,305.6 721.9,306.3 M721.9,306.3 719.4,310.3 M788.2,313.4 785.1,303.9 781.2,296.9 M812.8,286.6 804.8,287.1 799.4,286.2 791.7,284.4 M781.2,296.9 785.7,291.7 791.7,284.4 M749.3,306.7 753.1,298.6 757.4,291.9 M781.2,296.9 775.6,296.8 768.9,293.9 764.3,293.1 757.4,291.9 M390.7,208.9 387.8,202.0 383.0,198.4 380.2,191.7 M405.9,176.2 399.5,174.7 390.7,174.4 M390.7,174.4 388.2,180.0 384.0,187.0 380.2,191.7 M347.7,205.2 349.9,198.2 351.5,191.8 M351.5,191.8 356.9,188.0 M380.2,191.7 372.5,190.4 364.1,189.2 356.9,188.0 M407.0,66.3 409.9,71.6 414.6,78.1 M407.0,66.3 398.8,66.7 392.5,65.2 386.3,64.9 378.8,65.4 M414.6,78.1 409.5,81.1 403.3,85.4 400.2,91.6 393.3,94.4 388.9,99.2 M378.8,65.4 376.0,71.7 374.7,79.8 373.0,87.8 372.3,94.3 M388.9,99.2 381.4,98.3 376.0,98.2 M372.3,94.3 376.0,98.2 M388.9,37.4 396.3,40.7 402.3,43.1 408.2,45.4 M373.7,56.5 375.0,51.1 376.0,43.5 M373.7,56.5 378.8,65.4 M408.2,45.4 407.9,53.6 408.3,58.5 407.0,66.3 M428.2,82.0 420.4,81.3 414.6,78.1 M409.3,123.1 406.1,117.4 400.3,112.7 397.9,108.6 394.2,104.4 388.9,99.2 M755.3,124.4 752.9,131.1 750.9,135.1 747.2,141.4 M755.3,124.4 749.4,119.6 742.4,115.2 735.9,110.6 M747.2,141.4 739.4,142.9 M735.9,110.6 727.9,114.5 722.2,118.9 M722.2,118.9 718.6,127.9 M739.4,142.9 733.5,138.9 729.0,134.7 723.3,132.1 718.6,127.9 M653.2,211.4 648.2,207.6 642.3,202.1 637.6,199.2 M653.2,211.4 655.7,207.5 660.3,202.6 663.1,197.7 668.1,191.6 M668.1,191.6 662.7,187.1 656.5,181.5 651.5,177.1 M637.6,199.2 639.4,190.9 638.7,184.1 M638.7,184.1 644.5,180.5 651.5,177.1 M614.3,173.6 622.9,173.3 M614.3,173.6 609.2,177.8 M609.2,177.8 607.4,186.1 604.7,195.0 M624.2,205.7 618.7,201.3 610.4,199.7 604.7,195.0 M624.2,205.7 629.8,203.5 637.6,199.2 M622.9,173.3 627.2,177.1 634.7,180.8 638.7,184.1 M563.9,287.8 560.0,281.5 557.3,277.3 M589.9,259.6 591.5,265.4 591.7,273.6 592.9,280.2 592.7,287.8 M589.9,259.6 580.4,259.8 573.5,257.7 M573.5,257.7 569.5,263.0 566.6,268.1 560.4,272.7 557.3,277.3 M531.8,285.3 537.3,280.7 543.9,278.2 550.3,274.9 M557.3,277.3 550.3,274.9 M425.4,219.1 432.2,222.3 441.3,225.8 M441.3,225.8 442.1,231.1 443.9,237.6 M503.6,264.8 502.4,257.8 501.4,248.7 M501.4,248.7 496.1,242.8 M225.0,212.9 228.1,207.2 229.4,200.0 M252.6,220.0 251.1,212.2 251.6,205.8 250.1,200.3 249.1,193.5 M229.4,200.0 236.1,197.7 243.3,195.4 249.1,193.5 M171.4,208.6 169.7,201.6 170.7,195.8 168.5,190.9 167.2,183.8 166.8,177.0 M166.8,177.0 159.7,177.0 153.8,173.8 M284.5,209.4 284.4,199.1 M251.0,190.7 249.1,193.5 M251.0,190.7 257.2,190.5 264.9,187.8 271.2,187.0 M271.2,187.0 278.8,192.6 284.4,199.1 M320.8,205.0 316.7,199.1 314.0,192.9 308.9,185.8 M284.4,199.1 291.5,196.7 297.1,192.9 303.5,189.6 308.9,185.8 M326.1,173.2 331.8,176.7 336.7,179.7 340.4,184.1 345.9,188.6 351.5,191.8 M326.1,173.2 319.6,176.9 314.7,181.8 309.5,184.4 M308.9,185.8 309.5,184.4 M359.0,29.4 353.3,34.6 347.4,39.3 341.4,44.0 M324.9,15.4 325.2,20.6 324.3,28.2 M341.4,44.0 335.6,38.8 330.6,34.4 324.3,28.2 M271.2,187.0 271.1,179.9 272.9,175.4 273.9,169.0 M273.9,169.0 279.2,165.5 283.6,160.4 M309.5,184.4 305.1,177.7 300.9,171.2 296.8,166.4 292.6,160.3 M292.6,160.3 283.6,160.4 M97.9,68.7 108.0,64.0 M97.9,68.7 96.0,75.8 M96.0,75.8 100.9,81.2 105.0,86.4 109.9,89.3 112.3,96.2 117.8,100.5 M143.9,72.3 144.4,75.3 M144.4,75.3 140.3,80.5 136.5,84.4 132.9,91.4 129.7,95.4 125.4,99.2 M79.2,89.5 80.6,95.9 81.8,102.8 M79.2,89.5 84.1,85.1 91.3,79.7 96.0,75.8 M144.4,75.3 149.3,81.3 154.4,86.2 158.6,90.9 164.5,93.9 169.9,99.3 M151.0,112.9 158.8,111.6 164.1,108.5 169.4,107.7 M169.4,107.7 169.9,99.3 M251.0,190.7 247.5,184.4 244.5,179.3 240.1,174.9 237.1,168.8 235.0,163.8 M273.9,169.0 267.3,166.5 262.2,162.3 257.1,159.7 252.8,155.8 M252.8,155.8 245.8,157.5 241.7,161.8 235.0,163.8 M97.9,68.7 93.9,62.7 90.9,59.7 87.0,53.3 81.3,48.3 77.8,44.2 M123.6,30.0 116.9,27.7 112.2,25.8 106.8,23.3 101.1,20.8 M101.1,20.8 95.6,25.8 91.4,29.7 87.0,34.4 82.4,39.3 77.8,44.2 M36.8,27.8 44.1,29.7 51.0,29.4 56.3,32.7 64.3,33.6 M48.3,67.8 52.0,61.8 57.2,57.2 62.8,52.9 67.6,48.5 71.9,43.2 M64.3,33.6 68.9,38.4 71.9,43.2 M79.2,89.5 72.8,89.2 64.8,87.6 56.2,86.4 M71.9,43.2 77.8,44.2 M647.7,396.9 653.4,400.0 657.9,405.3 661.4,409.8 666.3,412.9 M647.7,396.9 642.9,401.9 637.0,406.7 632.8,409.7 M666.3,412.9 660.9,418.0 656.9,421.7 652.6,425.3 648.7,430.7 M632.8,409.7 632.3,412.5 M632.3,412.5 636.7,418.8 638.9,426.5 M638.9,426.5 648.7,430.7 M680.4,390.7 674.1,387.5 667.6,385.7 660.0,383.2 M666.9,412.9 666.3,412.9 M660.0,383.2 653.6,387.5 648.9,390.8 M648.9,390.8 647.7,396.9 M610.9,384.5 614.2,389.2 619.5,395.7 624.6,399.5 627.7,404.1 632.8,409.7 M622.4,369.7 627.1,370.4 M627.1,370.4 631.5,374.8 638.9,379.6 644.0,384.9 648.9,390.8 M605.6,420.6 613.0,417.3 620.0,417.1 626.4,413.6 632.3,412.5 M618.9,447.3 624.2,441.6 628.8,437.5 633.1,431.7 638.9,426.5 M639.6,463.0 642.0,462.3 M642.0,462.3 645.1,455.2 646.6,450.1 649.8,444.3 652.9,437.8 M652.9,437.8 648.7,430.7 M681.6,442.3 674.6,444.4 M681.6,442.3 684.2,447.5 687.3,456.1 689.5,460.0 690.0,467.4 692.9,473.6 M674.6,444.4 671.2,450.0 666.8,457.4 665.2,461.8 661.2,469.1 M692.9,473.6 684.8,474.7 680.0,475.3 672.2,475.7 664.8,475.1 M664.8,475.1 661.2,469.1 M682.8,440.8 681.6,442.3 M652.9,437.8 660.9,440.0 666.5,443.4 674.6,444.4 M698.0,477.1 692.9,473.6 M642.0,462.3 648.2,465.8 654.3,468.0 661.2,469.1 M661.7,489.3 662.3,482.0 664.8,475.1 M760.7,681.8 761.3,672.9 M760.7,681.8 765.1,684.5 770.7,688.8 777.5,689.7 781.0,693.3 786.0,695.9 792.5,699.3 M761.3,672.9 765.6,667.6 771.7,664.3 777.3,661.1 782.5,655.4 M792.5,699.3 794.1,694.6 797.6,688.2 799.2,680.7 801.8,675.4 M801.8,675.4 798.3,670.4 794.4,665.2 792.3,660.6 787.6,655.3 M787.6,655.3 782.5,655.4 M750.2,696.0 755.1,687.7 760.7,681.8 M735.8,654.0 742.1,656.6 744.9,662.8 752.4,665.0 756.7,669.3 761.3,672.9 M763.6,720.9 769.2,723.3 M794.2,705.3 792.5,699.3 M768.5,637.0 772.8,643.9 778.0,648.4 782.5,655.4 M824.6,675.9 817.1,675.0 808.7,674.5 801.8,675.4 M800.6,642.6 795.2,648.0 790.9,650.5 787.6,655.3 M739.5,746.8 734.0,752.3 729.7,757.5 725.0,762.5 M739.5,746.8 745.7,749.4 751.0,750.7 755.7,752.8 762.5,755.9 M725.0,762.5 730.8,766.2 735.4,769.8 738.5,773.3 742.4,779.1 748.2,781.8 752.9,786.2 M762.5,755.9 761.6,762.1 759.9,768.1 759.9,773.5 759.5,781.1 M759.5,781.1 752.9,786.2 M720.4,763.2 725.0,762.5 M738.9,734.5 739.5,741.7 739.5,746.8 M777.0,745.0 771.8,748.0 767.1,751.1 762.5,755.9 M752.2,788.3 752.9,786.2 M789.0,783.9 781.8,782.9 773.2,782.7 767.3,781.6 759.5,781.1 M550.6,410.1 544.2,410.3 535.7,413.2 529.2,414.2 M550.6,410.1 548.7,404.2 548.0,396.1 549.7,388.9 547.8,382.2 M521.1,405.8 523.2,400.0 521.8,391.3 M547.8,382.2 540.2,382.0 535.3,381.6 527.9,383.2 M527.9,383.2 521.8,391.3 M558.8,416.3 550.6,410.1 M550.7,379.7 547.8,382.2 M517.8,363.1 520.9,370.4 524.7,375.5 527.9,383.2 M497.1,68.8 503.1,59.8 M497.1,68.8 499.0,76.3 503.2,81.4 504.5,88.1 508.3,95.6 M504.5,59.5 510.6,61.9 518.0,64.9 523.9,66.5 529.2,67.9 M504.5,59.5 503.1,59.8 M509.4,96.3 508.3,95.6 M509.4,96.3 514.6,92.4 518.1,89.0 522.8,83.9 526.4,79.2 532.1,75.4 M532.1,75.4 529.2,67.9 M465.8,91.7 470.3,87.8 473.2,80.6 477.6,75.7 480.7,70.9 M479.3,102.3 485.3,101.3 493.4,99.4 500.8,98.3 508.3,95.6 M480.7,70.9 488.7,69.1 497.1,68.8 M520.5,41.2 525.2,45.4 532.7,47.6 537.8,50.5 M520.5,41.2 517.6,45.6 512.3,50.4 508.6,55.3 504.5,59.5 M537.8,50.5 533.8,55.1 531.2,62.1 529.2,67.9 M500.0,25.9 497.4,32.8 492.8,42.2 M492.8,42.2 496.0,47.2 499.6,53.6 503.1,59.8 M520.5,41.2 519.9,34.9 519.0,29.2 517.5,22.8 M510.2,97.7 509.4,96.3 M539.6,104.0 541.8,97.9 546.0,89.9 548.0,82.9 M548.0,82.9 539.6,79.0 532.1,75.4 M557.9,60.1 556.5,68.2 557.4,73.5 555.5,80.7 M557.9,60.1 552.7,55.6 548.0,53.7 541.2,49.2 M541.2,49.2 537.8,50.5 M548.0,82.9 555.5,80.7 M447.1,51.2 440.9,46.5 437.6,43.2 432.1,36.2 426.1,32.8 M447.1,51.2 454.3,48.3 462.6,45.8 M466.9,26.9 461.2,21.6 457.0,19.1 452.2,15.2 446.9,10.0 M466.9,26.9 467.2,34.0 465.6,41.9 M462.6,45.8 465.6,41.9 M426.1,23.5 426.1,32.8 M426.1,23.5 430.9,17.9 433.8,9.9 M433.8,9.9 441.1,10.9 446.9,10.0 M408.2,45.4 413.0,40.8 419.9,36.3 426.1,32.8 M439.0,77.0 440.8,71.4 443.3,63.2 445.6,58.5 447.1,51.2 M480.7,70.9 475.9,66.1 472.8,61.4 468.8,56.0 466.1,51.3 462.6,45.8 M483.1,11.4 477.8,17.4 473.4,21.4 466.9,26.9 M492.8,42.2 484.8,40.9 480.4,42.6 473.0,43.2 465.6,41.9 M392.4,10.9 400.3,13.4 406.4,14.7 413.1,18.8 420.3,21.2 426.1,23.5 M392.4,10.9 392.0,11.1 M545.0,117.1 550.4,114.9 556.8,110.6 561.3,107.4 567.1,106.0 573.3,102.9 M555.5,80.7 561.6,84.0 566.6,86.5 572.8,89.2 M572.8,89.2 574.2,94.9 573.3,102.9 M684.8,21.2 684.0,29.4 681.1,36.0 M715.0,46.4 709.3,48.6 705.1,53.6 699.0,55.8 M699.0,55.8 693.5,52.1 691.1,45.6 686.8,40.2 681.1,36.0 M709.9,99.5 713.7,92.6 717.8,87.4 720.7,81.6 M709.9,99.5 702.3,100.7 692.9,101.7 M720.7,81.6 713.7,77.8 707.8,75.3 701.4,71.5 695.7,69.4 M691.3,100.7 692.9,101.7 M691.3,100.7 690.3,94.1 687.6,84.1 684.9,77.6 M695.7,69.4 686.0,75.5 M684.9,77.6 686.0,75.5 M742.1,87.3 735.1,83.6 728.6,79.7 M742.1,87.3 739.9,93.3 738.1,97.9 736.9,103.6 735.9,110.6 M722.2,118.9 718.7,111.2 714.8,105.6 709.9,99.5 M728.6,79.7 720.7,81.6 M696.8,123.4 704.7,127.9 712.8,130.8 M696.8,123.4 696.6,115.9 693.5,109.3 692.9,101.7 M718.6,127.9 712.8,130.8 M728.6,79.7 729.4,72.2 728.2,67.7 729.2,60.9 729.7,54.6 M699.0,55.8 696.7,63.6 695.7,69.4 M696.8,123.4 691.5,126.4 683.1,129.5 677.3,131.8 M677.3,131.8 675.0,124.8 672.3,116.8 671.3,110.0 M671.3,110.0 677.7,105.8 683.4,103.9 691.3,100.7 M657.7,87.9 655.8,94.1 652.9,101.3 M657.7,87.9 664.8,84.8 671.8,81.8 679.3,81.1 684.9,77.6 M671.3,110.0 665.4,106.2 658.7,103.0 652.9,101.3 M623.1,67.5 631.3,68.1 637.2,70.7 644.9,72.4 651.0,73.0 M623.1,67.5 623.9,60.4 622.8,52.0 M622.8,52.0 629.1,51.1 634.9,49.5 642.6,47.8 647.1,45.3 654.1,45.0 M651.0,73.0 653.0,68.2 655.8,62.7 658.4,56.3 662.0,50.5 M654.1,45.0 661.9,49.9 M661.9,49.9 662.0,50.5 M615.4,40.9 618.3,46.5 622.8,52.0 M647.7,21.3 650.1,26.3 650.5,32.8 653.5,40.2 654.1,45.0 M657.7,87.9 654.5,80.0 651.0,73.0 M686.0,75.5 682.2,71.3 677.1,64.9 670.4,60.0 667.9,56.5 662.0,50.5 M681.1,36.0 675.6,39.7 668.5,44.1 661.9,49.9 M551.7,20.7 557.6,17.8 564.7,13.5 570.8,9.9 577.3,6.3 M551.7,20.7 550.4,24.2 M550.8,25.4 550.4,24.2 M550.8,25.4 557.4,30.2 562.6,32.2 567.9,37.9 574.4,41.1 580.6,45.3 M584.1,43.7 584.5,36.9 585.7,29.8 584.9,21.7 585.5,14.1 M584.1,43.7 582.2,45.3 M585.5,14.1 577.3,6.3 M582.2,45.3 580.6,45.3 M544.7,-8.0 546.8,0.1 549.1,6.3 549.0,13.6 551.7,20.7 M518.8,5.2 525.2,2.3 531.1,-0.6 538.0,-5.5 544.7,-8.0 M519.2,20.9 526.4,21.0 531.3,23.3 537.4,23.6 544.9,22.8 550.4,24.2 M541.2,49.2 542.6,42.3 545.2,37.6 548.7,30.3 550.8,25.4 M557.9,60.1 563.7,55.4 569.9,51.6 574.8,49.1 580.6,45.3 M615.1,40.8 609.2,41.4 603.4,42.8 595.6,41.5 590.8,41.9 584.1,43.7 M604.5,9.8 597.7,11.4 592.1,11.4 585.5,14.1 M589.5,77.9 584.2,80.8 577.8,84.3 572.8,89.2 M589.5,77.9 588.6,72.2 587.5,65.1 585.9,58.8 584.2,50.7 582.2,45.3 M624.6,301.6 630.6,298.1 634.3,296.7 640.6,293.7 646.3,290.4 M624.6,301.6 619.0,298.6 613.2,294.7 606.8,289.2 M606.8,289.2 611.8,283.5 616.5,278.3 623.2,273.4 M623.2,273.4 630.7,276.3 637.5,276.3 644.0,278.2 M644.0,278.2 647.2,286.1 M646.3,290.4 647.2,286.1 M623.4,324.7 623.2,316.2 623.7,308.1 624.6,301.6 M624.4,325.3 629.4,323.8 637.0,320.8 642.7,318.1 648.5,316.1 654.9,312.4 M654.9,312.4 651.9,305.5 648.7,296.9 646.3,290.4 M598.2,290.0 606.8,289.2 M630.4,336.9 635.7,337.7 644.7,341.4 650.0,342.9 M654.9,312.4 660.4,316.0 M650.0,342.9 651.9,334.9 654.9,329.2 657.1,323.2 660.4,316.0 M700.5,341.4 693.4,339.6 686.2,338.1 677.6,337.7 M684.2,307.1 690.8,310.9 697.1,315.6 M684.2,307.1 676.4,313.0 670.4,316.7 M677.6,337.7 676.4,331.5 673.3,322.9 670.4,316.7 M684.2,307.1 685.0,300.8 M647.2,286.1 654.8,285.3 662.3,285.6 670.3,284.1 M670.4,316.7 660.4,316.0 M670.3,284.1 674.7,290.0 680.8,295.3 685.0,300.8 M816.8,254.4 814.9,253.7 M791.7,284.4 789.4,276.7 787.9,271.0 787.1,263.8 M814.9,253.7 809.0,256.9 800.1,258.1 793.7,260.4 787.1,263.8 M757.4,291.9 754.4,283.3 M754.4,283.3 757.3,278.4 762.5,271.8 768.1,266.3 771.8,263.4 775.1,256.8 M787.1,263.8 782.0,260.4 775.1,256.8 M827.4,220.9 819.6,219.6 813.3,219.5 M814.9,253.7 810.7,246.7 806.9,241.8 803.5,235.4 M813.3,219.5 809.3,223.9 807.2,229.4 803.5,235.4 M775.1,256.8 774.7,255.6 M774.7,255.6 780.0,251.1 784.1,245.1 787.3,237.7 792.1,232.9 M803.5,235.4 792.1,232.9 M739.4,142.9 736.2,150.7 732.2,155.6 729.0,163.3 M712.8,130.8 710.5,139.2 706.3,145.3 704.5,153.2 M704.5,153.2 706.5,159.6 M729.0,163.3 720.8,162.3 713.0,159.9 706.5,159.6 M384.5,164.4 377.0,164.5 370.5,163.6 362.1,165.2 M384.5,164.4 388.0,157.9 388.9,149.5 391.9,141.8 M391.9,141.8 385.3,140.2 381.3,136.1 373.7,133.8 369.0,132.3 M369.0,132.3 366.7,136.4 360.9,142.9 359.4,147.7 355.3,153.0 M355.3,153.0 357.5,159.0 362.1,165.2 M390.7,174.4 384.5,164.4 M356.9,188.0 359.8,181.5 360.7,172.7 362.1,165.2 M405.8,137.7 400.0,138.7 391.9,141.8 M367.7,128.9 369.0,132.3 M367.7,128.9 369.0,123.2 371.8,116.4 372.9,109.3 375.1,105.0 376.0,98.2 M326.1,173.2 327.3,165.1 327.7,159.5 329.5,151.5 M329.5,151.5 336.1,151.5 342.9,152.7 348.0,153.0 355.3,153.0 M590.1,228.3 591.0,235.6 594.1,240.6 594.7,247.5 596.3,252.5 M590.1,228.3 598.9,222.1 M598.9,222.1 607.4,223.1 614.4,223.8 621.6,225.0 M596.3,252.5 602.1,251.3 608.5,253.1 614.9,252.2 M614.9,252.2 622.1,248.1 626.9,241.7 M621.6,225.0 627.5,233.8 M626.9,241.7 627.5,233.8 M624.2,205.7 622.2,212.9 623.6,219.8 621.6,225.0 M604.7,195.0 603.0,196.1 M603.0,196.1 602.1,202.5 602.3,209.7 600.0,216.2 598.9,222.1 M589.9,259.6 596.3,252.5 M623.2,273.4 620.6,267.0 616.6,259.5 614.9,252.2 M651.2,256.5 644.1,253.7 638.9,248.0 632.7,246.6 626.9,241.7 M651.2,256.5 649.0,262.6 645.9,270.6 644.0,278.2 M670.9,161.9 666.2,165.6 659.4,168.5 653.5,171.3 M670.9,161.9 672.3,156.3 672.2,148.2 672.7,141.9 M653.5,171.3 649.5,164.6 646.0,158.3 641.9,153.7 639.2,147.5 M672.7,141.9 672.7,141.8 M672.7,141.8 665.5,140.0 658.8,138.3 652.0,138.1 M652.0,138.1 645.0,141.4 639.3,143.4 M639.3,143.4 639.2,147.5 M684.3,175.9 682.3,182.5 680.8,190.1 M684.3,175.9 680.9,170.0 675.4,166.0 670.9,161.9 M680.8,190.1 675.6,189.8 668.1,191.6 M651.5,177.1 653.5,171.3 M684.3,175.9 689.7,171.6 697.4,170.6 702.8,166.6 M704.5,153.2 699.3,151.2 690.7,148.2 685.6,145.3 680.3,145.1 672.7,141.9 M702.8,166.6 706.5,159.6 M622.9,173.3 625.1,167.2 629.9,161.8 633.2,157.9 636.3,153.0 639.2,147.5 M677.3,131.8 672.7,141.8 M652.9,101.3 652.8,101.4 M652.8,101.4 652.6,107.6 653.3,114.2 652.8,120.0 652.8,125.6 652.0,131.8 652.0,138.1 M573.5,257.7 568.7,254.1 564.9,250.1 560.9,244.6 M590.1,228.3 579.5,223.9 M579.5,223.9 573.9,229.2 569.9,234.2 566.2,238.4 560.9,244.6 M503.2,188.7 503.6,188.7 M503.2,188.7 500.7,180.7 497.4,175.5 492.7,167.9 M508.4,154.7 514.2,159.5 519.1,163.5 522.7,167.8 528.0,172.2 M528.0,172.2 522.8,177.1 516.4,179.8 509.6,185.2 503.6,188.7 M456.6,218.7 464.2,220.7 470.4,223.1 M456.6,218.7 457.1,213.2 455.2,206.0 455.4,198.9 454.4,192.4 M470.4,223.1 474.4,219.8 478.8,214.5 484.5,210.1 M467.2,186.6 460.1,188.9 454.4,192.4 M467.2,186.6 473.8,191.0 478.1,195.5 485.1,200.7 M485.1,200.7 484.5,210.1 M441.3,225.8 449.7,223.1 456.6,218.7 M472.8,231.9 470.4,223.1 M438.4,188.0 447.2,189.4 454.4,192.4 M496.1,242.8 496.8,235.5 499.8,227.9 499.8,221.2 M499.8,221.2 496.0,218.3 490.8,214.6 484.5,210.1 M470.2,174.1 468.1,181.5 467.2,186.6 M503.2,188.7 496.5,193.1 491.0,197.2 485.1,200.7 M499.8,221.2 507.2,218.7 513.4,218.1 518.9,216.0 M518.9,216.0 519.6,207.9 M503.6,188.7 507.6,193.4 512.1,198.4 516.7,203.0 519.6,207.9 M373.7,56.5 368.3,58.7 361.2,59.8 355.4,61.7 348.7,61.6 342.2,63.8 M341.4,44.0 340.3,53.0 339.0,60.8 M342.2,63.8 339.0,60.8 M372.3,94.3 365.6,92.5 356.7,92.4 349.3,89.7 M342.2,63.8 344.4,70.2 346.3,77.4 347.0,82.9 349.3,89.7 M142.5,14.9 139.7,20.2 135.4,27.5 M142.5,14.9 149.8,14.8 155.9,11.6 163.5,11.0 168.4,9.3 175.7,8.3 M152.5,55.0 157.3,54.5 163.5,54.2 170.4,52.4 M175.7,8.3 178.5,14.3 182.3,17.9 187.5,22.8 M187.5,22.8 183.0,29.3 180.2,34.1 176.3,40.1 173.5,45.4 170.4,52.4 M184.5,85.6 178.6,89.9 174.5,93.8 169.9,99.3 M184.5,85.6 185.0,80.1 185.4,72.1 184.8,66.0 M170.4,52.4 174.2,56.9 181.2,61.0 184.8,66.0 M300.5,7.4 290.6,13.6 M323.2,13.4 314.8,11.0 308.7,8.4 300.5,7.4 M324.3,28.2 320.8,33.8 313.5,36.4 308.9,42.3 304.8,45.7 M304.8,45.7 302.7,38.7 299.1,34.9 294.3,29.6 293.5,23.7 289.0,16.9 M289.0,16.9 290.6,13.6 M289.0,16.9 281.6,20.7 273.6,25.1 M273.6,25.1 266.7,22.1 261.1,21.9 254.0,19.9 M184.5,85.6 190.4,85.9 199.2,89.2 206.2,90.1 M169.4,107.7 172.4,113.2 176.8,117.6 179.1,123.5 M206.2,90.1 209.0,94.8 212.5,101.8 M212.5,101.8 208.3,112.6 M208.3,112.6 203.3,113.7 197.4,117.9 189.7,119.8 185.9,120.7 179.1,123.5 M153.7,142.4 159.3,141.6 167.1,141.8 172.3,141.4 178.9,140.8 M178.9,140.8 179.4,132.1 179.1,123.5 M212.5,101.8 217.5,102.3 224.6,100.2 231.3,100.2 M208.3,112.6 211.4,117.6 217.5,123.3 220.7,129.6 224.6,134.5 M224.6,134.5 231.0,130.3 236.1,125.6 243.6,122.5 M243.6,122.5 240.9,116.2 236.3,110.8 235.7,105.2 231.3,100.2 M96.5,7.0 89.9,5.3 80.9,6.1 74.2,6.0 67.7,4.7 M58.8,-5.9 62.9,-0.3 67.7,4.7 M101.1,20.8 98.6,13.2 96.5,7.0 M64.3,33.6 64.5,25.1 64.9,19.3 67.2,12.7 67.7,4.7 M36.9,8.7 41.6,5.7 47.8,0.3 53.7,-2.4 58.8,-5.9 M827.4,58.7 824.2,64.0 818.2,72.5 815.0,78.2 M815.0,78.2 819.9,83.4 824.6,87.8 829.4,90.8 M755.3,124.4 761.5,120.4 768.1,119.1 773.9,116.2 M742.1,87.3 747.3,86.4 M747.3,86.4 751.6,92.5 757.0,97.0 760.8,101.2 764.1,106.8 769.3,110.1 773.9,116.2 M747.2,141.4 750.7,146.2 755.2,149.5 760.4,154.9 765.0,158.2 M765.0,158.2 771.3,152.1 776.2,147.0 781.2,143.3 M773.9,116.2 776.6,116.5 M776.6,116.5 780.9,122.3 M781.2,143.3 781.0,135.2 781.3,128.7 780.9,122.3 M652.8,101.4 644.3,102.5 637.6,102.5 M623.1,67.5 619.1,74.1 M637.6,102.5 633.5,96.3 630.2,90.1 627.1,85.0 623.3,81.0 619.1,74.1 M589.5,77.9 595.9,79.3 603.4,81.5 M619.1,74.1 612.4,78.8 603.4,81.5 M648.9,359.6 654.5,364.6 660.8,370.8 M648.9,359.6 650.4,354.1 652.0,346.3 M652.0,346.3 658.4,347.7 664.2,347.0 670.7,347.1 M660.8,370.8 669.5,366.2 675.9,361.6 M675.9,361.6 672.7,353.7 670.7,347.1 M627.1,370.4 631.5,368.2 637.7,364.4 642.7,363.1 648.9,359.6 M660.0,383.2 661.0,376.8 660.8,370.8 M650.0,342.9 652.0,346.3 M677.6,337.7 670.7,347.1 M694.6,369.5 688.5,366.1 680.9,364.0 675.9,361.6 M721.9,306.3 718.5,295.0 M685.0,300.8 689.9,295.5 695.1,290.5 700.2,285.3 M718.5,295.0 711.3,291.1 706.5,289.4 700.2,285.3 M754.4,283.3 747.2,278.8 740.8,276.3 736.0,271.8 M718.5,295.0 722.2,289.3 726.7,283.3 730.9,277.1 736.0,271.8 M813.3,219.5 809.9,212.5 805.8,207.6 M805.8,207.6 808.5,202.4 811.9,198.7 815.6,193.6 819.6,187.5 M816.6,146.1 809.1,149.7 801.2,154.7 M801.2,154.7 800.2,162.5 798.1,168.2 796.8,175.3 M819.0,186.2 814.2,182.7 808.6,181.1 802.3,177.7 796.8,175.3 M819.0,186.2 819.6,187.5 M603.0,196.1 595.8,195.0 589.0,194.6 580.9,195.7 M579.5,223.9 576.0,215.9 570.4,209.9 M570.4,209.9 575.8,203.8 580.9,195.7 M609.2,177.8 601.6,176.2 595.7,172.2 588.6,169.6 M588.6,169.6 581.7,174.7 576.1,180.4 M580.9,195.7 578.3,188.8 576.1,180.4 M555.6,243.9 550.8,238.6 548.4,232.2 544.9,225.5 M555.6,243.9 548.5,251.2 543.0,256.2 M533.6,255.0 543.0,256.2 M533.6,255.0 531.6,249.0 528.2,242.4 524.6,234.2 M544.9,225.5 536.0,225.5 527.0,226.8 M524.6,234.2 527.0,226.8 M560.9,244.6 555.6,243.9 M570.4,209.9 562.2,210.3 556.5,208.7 M556.5,208.7 552.7,215.2 549.9,220.7 544.9,225.5 M550.3,274.9 546.7,269.1 544.9,263.5 543.0,256.2 M518.2,266.7 524.5,263.3 529.0,258.3 533.6,255.0 M501.4,248.7 507.7,244.8 513.1,241.5 519.1,238.7 524.6,234.2 M518.9,216.0 523.0,221.7 527.0,226.8 M519.6,207.9 525.2,202.4 532.1,200.1 537.0,195.7 543.7,190.6 M556.5,208.7 552.0,203.1 549.2,197.9 543.7,190.6 M329.5,151.5 325.2,145.6 M367.7,128.9 360.0,127.5 354.4,126.1 346.6,123.4 341.2,121.1 M341.2,121.1 336.1,127.3 333.6,133.7 330.1,139.3 325.2,145.6 M349.3,89.7 344.1,93.4 340.0,96.6 335.2,101.3 M341.2,121.1 338.2,114.7 336.5,108.0 335.2,101.3 M292.6,160.3 296.5,154.7 302.0,150.3 308.7,145.5 312.9,140.8 M325.2,145.6 320.1,143.5 312.9,140.8 M303.8,53.7 309.2,59.6 316.8,62.9 M303.8,53.7 299.2,56.0 292.7,58.4 286.7,60.4 M316.8,62.9 314.8,68.3 316.1,75.3 314.9,82.4 313.9,86.7 314.0,93.0 312.0,99.6 M286.7,60.4 285.5,66.8 286.7,74.1 285.9,80.1 M285.9,80.1 289.4,85.3 293.5,88.8 298.3,92.6 302.2,96.6 306.9,102.3 M306.9,102.3 312.0,99.6 M304.8,45.7 303.8,53.7 M339.0,60.8 332.5,60.5 323.9,62.3 316.8,62.9 M273.6,25.1 274.9,31.4 273.2,37.5 275.0,44.0 273.3,47.9 273.8,55.1 M273.8,55.1 279.1,58.1 286.7,60.4 M335.2,101.3 328.2,101.4 320.7,100.4 312.0,99.6 M259.2,58.9 265.7,57.7 273.8,55.1 M259.2,58.9 260.5,64.6 258.7,70.5 258.8,78.3 259.7,83.2 260.3,90.3 M260.3,90.3 262.9,92.7 M262.9,92.7 268.1,88.5 273.4,86.7 281.1,84.1 285.9,80.1 M254.0,19.9 249.6,23.8 242.7,28.6 238.2,32.3 M238.2,32.3 233.0,28.2 226.1,25.5 221.1,21.7 216.6,17.2 M187.5,22.8 195.7,24.5 M216.6,17.2 209.6,20.2 201.7,22.4 195.7,24.5 M230.8,162.7 227.1,158.4 223.3,151.2 220.2,146.4 M230.8,162.7 227.3,167.4 221.6,172.4 217.4,178.0 213.6,183.3 M220.2,146.4 213.7,145.8 207.7,146.4 203.0,147.5 195.7,147.6 189.4,149.8 184.0,149.1 M205.0,185.2 213.6,183.3 M205.0,185.2 201.3,181.4 195.7,175.9 191.8,172.0 186.5,166.6 182.2,161.2 M182.2,161.2 183.4,155.6 184.0,149.1 M229.4,200.0 223.5,195.0 217.6,188.4 213.6,183.3 M235.0,163.8 230.8,162.7 M178.9,140.8 184.0,149.1 M224.6,134.5 221.4,141.4 220.2,146.4 M196.1,203.2 199.6,198.1 201.0,191.9 205.0,185.2 M166.8,177.0 172.0,171.3 176.6,167.3 182.2,161.2 M259.6,136.4 254.5,130.4 251.3,123.1 M259.6,136.4 268.0,138.7 275.9,139.0 M251.3,123.1 255.8,117.6 261.7,111.1 265.6,106.3 M265.6,106.3 271.4,109.5 279.4,111.3 285.2,111.4 292.6,115.2 298.6,116.4 M275.9,139.0 279.4,133.8 283.9,130.5 290.0,127.2 294.9,121.7 298.7,118.9 M298.6,116.4 298.7,118.9 M252.8,155.8 254.8,149.3 257.5,144.1 259.6,136.4 M243.6,122.5 251.3,123.1 M283.6,160.4 280.1,153.9 279.3,145.4 275.9,139.0 M260.3,90.3 252.5,88.7 245.5,89.5 238.5,88.5 M262.9,92.7 264.3,99.9 265.6,106.3 M238.5,88.5 233.6,95.2 231.3,100.2 M306.9,102.3 302.8,110.4 298.6,116.4 M312.9,140.8 308.2,135.8 306.5,128.8 301.4,125.0 298.7,118.9 M826.6,110.8 814.8,111.7 M814.8,111.7 809.8,119.3 804.4,125.1 M816.7,145.1 813.4,137.3 808.3,132.5 804.4,125.1 M816.6,146.1 816.7,145.1 M801.2,154.7 793.7,151.6 788.0,146.1 781.2,143.3 M780.9,122.3 790.0,123.5 797.1,123.5 804.4,125.1 M798.9,93.0 803.8,85.8 806.9,80.1 M798.9,93.0 792.4,94.8 786.7,98.6 M786.7,98.6 781.4,93.6 779.1,87.0 773.5,82.5 770.5,77.3 765.8,70.5 M806.9,80.1 802.2,75.5 797.2,71.9 793.8,66.2 789.8,62.4 785.2,57.2 M785.2,57.2 779.1,59.9 772.8,62.0 768.0,64.4 M768.0,64.4 765.8,70.5 M815.0,78.2 806.9,80.1 M814.8,111.7 810.3,106.3 807.7,101.2 803.2,97.0 798.9,93.0 M776.6,116.5 780.0,110.9 783.5,104.9 786.7,98.6 M747.3,86.4 752.7,82.0 757.2,79.6 761.1,75.0 765.8,70.5 M789.0,49.7 785.2,57.2 M749.1,43.8 753.7,48.4 758.2,55.3 763.6,58.4 768.0,64.4 M637.6,102.5 631.4,108.0 M603.4,81.5 605.4,88.2 606.4,97.7 606.3,104.3 M631.4,108.0 625.1,106.1 617.9,104.9 612.6,106.2 606.3,104.3 M771.6,252.8 768.7,246.8 767.2,239.2 766.6,232.4 763.6,225.3 M771.6,252.8 764.8,251.8 757.6,252.4 752.7,250.0 744.7,250.6 738.5,249.0 M763.6,225.3 758.5,227.7 752.4,229.8 746.8,232.7 741.0,233.5 M741.0,233.5 740.8,240.5 738.5,249.0 M774.7,255.6 771.6,252.8 M736.0,271.8 732.2,264.7 729.9,259.2 M738.5,249.0 733.4,253.5 729.9,259.2 M765.0,158.2 764.9,160.7 M729.0,163.3 732.8,169.1 736.3,174.5 M764.9,160.7 758.6,164.2 754.0,165.0 747.3,169.3 741.8,172.9 736.3,174.5 M792.1,232.9 787.9,225.7 783.3,219.7 780.2,213.7 M763.6,225.3 767.0,219.2 M780.2,213.7 772.8,216.5 767.0,219.2 M535.5,172.4 538.8,176.6 543.6,182.3 M535.5,172.4 536.5,166.3 540.8,159.3 541.5,153.3 M543.6,182.3 550.1,180.3 557.1,177.9 565.0,175.4 M565.0,175.4 565.1,168.5 567.3,160.1 568.3,153.3 568.3,145.6 M568.3,145.6 562.1,148.5 554.9,150.1 547.7,150.2 541.5,153.3 M528.0,172.2 535.5,172.4 M543.7,190.6 543.6,182.3 M528.7,133.2 531.9,139.5 536.7,146.4 541.5,153.3 M576.1,180.4 570.2,179.1 565.0,175.4 M242.2,53.3 238.6,47.2 M242.2,53.3 240.1,61.0 236.0,68.3 232.4,74.4 M238.6,47.2 231.0,47.6 226.6,51.1 219.5,51.2 213.0,53.4 207.3,53.7 M232.4,74.4 224.0,76.1 214.8,76.0 M214.8,76.0 212.7,71.0 208.3,64.8 204.9,58.7 M204.9,58.7 207.3,53.7 M259.2,58.9 250.4,55.4 242.2,53.3 M238.2,32.3 239.6,40.4 238.6,47.2 M238.5,88.5 236.5,81.4 232.4,74.4 M195.7,24.5 197.2,30.3 201.6,37.2 201.7,41.8 206.1,48.7 207.3,53.7 M206.2,90.1 209.3,83.6 214.8,76.0 M184.8,66.0 191.0,63.0 197.1,61.4 204.9,58.7 M573.3,102.9 579.0,111.0 M606.3,104.3 603.2,109.8 599.0,114.8 M579.0,111.0 584.6,112.8 591.9,112.5 599.0,114.8 M544.7,118.6 550.6,122.8 553.8,128.1 559.3,131.7 565.3,137.1 570.1,140.2 M579.0,111.0 578.3,116.7 575.8,123.5 572.9,128.0 570.8,135.0 570.1,140.2 M588.6,169.6 587.6,162.1 587.2,154.8 585.2,147.0 M568.3,145.6 570.9,143.1 M585.2,147.0 577.5,145.1 570.9,143.1 M570.9,143.1 570.1,140.2 M700.2,285.3 699.7,277.0 M729.9,259.2 718.4,257.2 M699.7,277.0 704.1,273.2 709.5,267.2 714.0,262.1 718.4,257.2 M734.0,196.5 726.1,195.8 720.7,194.1 713.5,192.1 M734.0,196.5 731.0,202.5 729.9,210.0 728.8,217.0 M728.8,217.0 722.3,221.5 715.7,224.4 708.1,226.6 M713.5,192.1 705.7,196.5 698.2,199.5 692.4,203.2 M692.4,203.2 695.4,208.5 699.3,213.9 703.3,221.0 708.1,226.6 M702.8,166.6 704.3,172.1 708.3,179.7 710.4,186.4 713.5,192.1 M736.3,174.5 736.4,180.7 736.5,187.9 735.6,195.4 M735.6,195.4 734.0,196.5 M741.0,233.5 736.2,226.7 732.7,221.6 728.8,217.0 M735.6,195.4 741.7,196.3 M767.0,219.2 760.9,214.1 757.1,209.1 752.2,205.1 747.4,201.0 741.7,196.3 M718.4,257.2 713.4,250.5 707.3,244.7 702.9,240.1 M702.9,240.1 705.2,234.1 708.1,226.6 M680.8,190.1 685.1,195.9 690.7,202.8 M690.7,202.8 692.4,203.2 M784.0,207.4 785.8,201.5 789.4,195.9 791.0,188.0 793.0,181.4 795.3,176.0 M784.0,207.4 783.6,207.6 M783.6,207.6 779.1,202.9 774.4,197.4 769.5,192.4 765.5,186.2 M795.3,176.0 790.1,173.8 782.8,174.2 776.3,173.5 770.9,171.5 M770.9,171.5 768.6,177.6 765.5,186.2 M805.8,207.6 799.6,206.3 792.5,206.3 784.0,207.4 M796.8,175.3 795.3,176.0 M780.2,213.7 783.6,207.6 M741.7,196.3 748.7,194.7 753.5,192.4 760.2,188.9 765.5,186.2 M764.9,160.7 767.0,165.7 770.9,171.5 M602.6,124.7 598.6,129.8 594.6,134.8 591.7,140.1 586.4,146.5 M602.6,124.7 607.5,126.6 613.0,130.7 620.0,131.1 625.3,134.5 M625.8,135.4 622.1,139.3 616.6,143.6 614.3,147.9 608.7,153.0 M625.8,135.4 625.3,134.5 M608.7,153.0 601.2,151.0 592.6,148.7 586.4,146.5 M599.0,114.8 602.6,124.7 M585.2,147.0 586.4,146.5 M631.4,108.0 629.5,115.8 628.3,120.8 626.3,129.1 625.3,134.5 M614.3,173.6 613.1,165.9 609.9,158.6 608.7,153.0 M639.3,143.4 631.8,140.7 625.8,135.4 M653.2,211.4 654.9,217.3 M690.7,202.8 685.6,207.3 680.8,212.7 676.9,218.7 M676.9,218.7 669.2,218.4 661.4,218.9 654.9,217.3 M627.5,233.8 633.8,229.8 638.3,226.9 642.6,226.1 648.9,222.2 654.0,219.5 M654.9,217.3 654.0,219.5 M689.7,242.3 688.3,247.5 685.7,254.3 682.6,258.8 681.1,265.6 M689.7,242.3 684.3,239.1 M684.3,239.1 675.5,240.8 668.3,241.7 660.7,242.8 M678.6,266.5 681.1,265.6 M678.6,266.5 673.0,264.8 667.0,259.8 660.1,257.7 653.4,255.5 M653.4,255.5 656.8,249.3 660.7,242.8 M699.7,277.0 693.2,273.8 688.1,268.7 681.1,265.6 M702.9,240.1 695.4,241.2 689.7,242.3 M676.9,218.7 679.9,226.2 681.7,231.2 684.3,239.1 M654.0,219.5 654.7,224.3 656.0,231.5 660.2,237.3 660.7,242.8 M670.3,284.1 673.8,279.1 676.5,271.5 678.6,266.5 M651.2,256.5 653.4,255.5 M21.1,106.6 16.8,106.6 16.8,126.7 M49.7,105.2 49.3,126.7 M83.6,105.2 84.9,126.7 M114.2,105.2 115.3,126.7 M140.0,105.2 138.7,126.7 M13.5,126.7 14.3,156.0 M41.9,126.7 41.9,147.1 40.6,147.1 40.6,156.0 M83.0,126.7 83.0,149.9 86.1,149.9 86.1,156.0 M115.1,126.7 116.1,156.0 M144.6,126.7 143.2,156.0 M-2.4,129.0 13.5,129.0 13.5,129.2 41.9,129.2 41.9,129.4 83.0,129.4 83.0,125.6 115.1,125.6 115.1,124.8 144.6,124.8 144.6,124.7 147.7,124.7 M18.9,156.0 19.1,193.6 M63.4,156.0 64.7,193.6 M90.5,156.0 90.2,193.6 M123.4,156.0 121.4,193.6 M-4.6,158.8 18.9,158.8 18.9,157.0 63.4,157.0 63.4,153.2 90.5,153.2 90.5,156.0 123.4,156.0 123.4,154.5 148.8,154.5 M33.6,193.6 33.2,229.8 M77.7,193.6 77.7,201.2 79.0,201.2 79.0,229.8 M116.0,193.6 117.5,229.8 M-3.1,190.9 33.6,190.9 33.6,193.8 77.7,193.8 77.7,195.9 116.0,195.9 116.0,196.5 147.3,196.5 M16.2,229.8 14.8,264.8 M47.0,229.8 45.5,264.8 M77.4,229.8 77.4,247.5 72.6,247.5 72.6,264.8 M120.6,229.8 119.6,264.8 M157.1,239.3 158.4,264.8 M202.1,239.3 205.2,239.3 205.2,264.8 M232.5,240.4 238.4,240.4 238.4,264.8 M258.5,239.3 258.1,264.8 M298.8,239.3 297.9,264.8 M330.6,241.4 332.4,241.4 332.4,264.8 M376.1,239.3 376.4,264.8 M413.5,239.3 414.9,264.8 M445.3,240.5 445.3,244.0 444.3,244.0 444.3,264.8 M478.6,239.3 477.8,264.8 M-3.3,231.1 16.2,231.1 16.2,230.6 47.0,230.6 47.0,229.0 77.4,229.0 77.4,232.7 120.6,232.7 120.6,230.3 147.6,230.3 M37.8,264.8 37.8,278.1 38.0,278.1 38.0,293.0 M75.3,264.8 75.3,274.3 77.0,274.3 77.0,293.0 M105.1,264.8 105.1,274.1 108.8,274.1 108.8,293.0 M143.5,264.8 143.2,293.0 M170.9,264.8 170.5,293.0 M213.1,264.8 211.9,293.0 M249.5,264.8 250.7,293.0 M279.7,264.8 279.1,293.0 M306.4,264.8 304.7,293.0 M344.9,264.8 346.0,293.0 M372.3,264.8 372.1,293.0 M415.6,264.8 415.8,293.0 M450.2,264.8 450.2,281.7 447.3,281.7 447.3,293.0 M485.7,264.8 485.7,280.6 482.7,280.6 482.7,293.0 M-0.0,264.0 37.8,264.0 37.8,265.1 75.3,265.1 75.3,266.3 105.1,266.3 105.1,265.3 143.5,265.3 143.5,262.2 170.9,262.2 170.9,265.6 213.1,265.6 213.1,262.5 249.5,262.5 249.5,267.8 279.7,267.8 279.7,267.7 306.4,267.7 306.4,265.9 344.9,265.9 344.9,266.1 372.3,266.1 372.3,266.8 415.6,266.8 415.6,264.6 450.2,264.6 450.2,265.3 485.7,265.3 485.7,267.2 495.2,267.2 M39.4,293.0 39.4,304.0 41.6,304.0 41.6,320.2 M83.2,293.0 82.9,320.2 M128.3,293.0 128.3,302.8 134.2,302.8 134.2,320.2 M171.2,293.0 170.8,320.2 M198.3,293.0 196.9,320.2 M229.1,293.0 230.1,320.2 M258.3,293.0 257.3,320.2 M295.5,293.0 294.1,320.2 M322.9,293.0 322.9,320.2 M365.6,293.0 365.6,312.1 360.9,312.1 360.9,320.2 M396.9,293.0 396.9,302.4 392.0,302.4 392.0,320.2 M436.1,293.0 436.1,299.5 438.2,299.5 438.2,320.2 M465.0,293.0 466.2,320.2 M505.0,314.2 505.1,320.2 M-1.5,292.8 39.4,292.8 39.4,290.8 83.2,290.8 83.2,293.1 128.3,293.1 128.3,291.5 171.2,291.5 171.2,290.0 198.3,290.0 198.3,291.9 229.1,291.9 229.1,294.2 258.3,294.2 258.3,295.0 295.5,295.0 295.5,290.3 322.9,290.3 322.9,295.7 365.6,295.7 365.6,291.6 396.9,291.6 396.9,295.3 436.1,295.3 436.1,294.6 465.0,294.6 465.0,295.4 501.6,295.4 M12.5,320.2 12.3,353.1 M57.4,320.2 57.4,332.6 58.7,332.6 58.7,353.1 M92.0,320.2 92.0,334.3 92.4,334.3 92.4,353.1 M124.5,320.2 124.5,344.3 118.9,344.3 118.9,353.1 M170.2,320.2 170.2,330.8 169.1,330.8 169.1,353.1 M200.7,320.2 199.8,353.1 M228.3,320.2 228.2,353.1 M255.6,320.2 255.6,331.9 258.5,331.9 258.5,353.1 M297.8,320.2 299.6,353.1 M333.2,320.2 334.1,353.1 M360.1,320.2 360.1,339.7 360.1,339.7 360.1,353.1 M396.3,320.2 396.3,353.1 M429.2,320.2 429.6,353.1 M458.3,320.2 459.4,353.1 M504.0,320.2 505.9,353.1 M-2.9,318.7 12.5,318.7 12.5,320.4 57.4,320.4 57.4,318.8 92.0,318.8 92.0,321.7 124.5,321.7 124.5,318.8 170.2,318.8 170.2,320.0 200.7,320.0 200.7,322.3 228.3,322.3 228.3,322.8 255.6,322.8 255.6,322.6 297.8,322.6 297.8,319.5 333.2,319.5 333.2,322.3 360.1,322.3 360.1,317.7 396.3,317.7 396.3,321.5 429.2,321.5 429.2,319.2 458.3,319.2 458.3,322.1 504.0,322.1 504.0,322.8 M29.3,353.1 30.7,385.9 M70.9,353.1 70.9,360.2 71.8,360.2 71.8,385.9 M104.8,353.1 103.3,385.9 M140.1,353.1 138.5,385.9 M179.9,353.1 179.0,385.9 M215.4,353.1 216.4,385.9 M251.9,353.1 253.1,385.9 M297.6,353.1 297.6,374.1 298.2,374.1 298.2,385.9 M336.6,353.1 336.1,385.9 M370.5,353.1 370.7,385.9 M412.7,353.1 411.1,385.9 M440.0,353.1 438.4,385.9 M477.9,353.1 477.9,366.8 474.7,366.8 474.7,385.9 M515.3,372.8 515.9,385.9 M-4.8,352.8 29.3,352.8 29.3,355.0 70.9,355.0 70.9,350.2 104.8,350.2 104.8,352.9 140.1,352.9 140.1,350.8 179.9,350.8 179.9,352.5 215.4,352.5 215.4,352.3 251.9,352.3 251.9,353.6 297.6,353.6 297.6,354.6 336.6,354.6 336.6,353.1 370.5,353.1 370.5,353.3 412.7,353.3 412.7,350.3 440.0,350.3 440.0,354.1 477.9,354.1 477.9,354.3 511.3,354.3 M2.9,385.9 3.9,420.4 M43.9,385.9 43.1,420.4 M78.1,385.9 77.4,420.4 M115.7,385.9 117.0,420.4 M153.1,385.9 153.8,420.4 M189.7,385.9 189.7,408.5 188.3,408.5 188.3,420.4 M231.9,385.9 233.5,420.4 M261.8,385.9 261.8,395.6 256.7,395.6 256.7,420.4 M299.6,385.9 298.6,420.4 M332.2,385.9 332.2,393.1 333.3,393.1 333.3,420.4 M375.6,385.9 373.8,420.4 M410.0,385.9 408.4,420.4 M439.6,385.9 441.5,420.4 M482.3,385.9 481.7,420.4 M519.9,401.5 519.3,420.4 M-3.7,383.9 2.9,383.9 2.9,386.4 43.9,386.4 43.9,388.2 78.1,388.2 78.1,386.7 115.7,386.7 115.7,384.4 153.1,384.4 153.1,384.9 189.7,384.9 189.7,385.9 231.9,385.9 231.9,382.9 261.8,382.9 261.8,385.0 299.6,385.0 299.6,384.8 332.2,384.8 332.2,388.0 375.6,388.0 375.6,383.2 410.0,383.2 410.0,387.1 439.6,387.1 439.6,384.3 482.3,384.3 482.3,388.6 517.3,388.6 M27.9,420.4 26.9,452.3 M64.8,420.4 66.2,452.3 M106.4,420.4 104.6,452.3 M133.7,420.4 133.3,452.3 M165.2,420.4 164.5,452.3 M198.0,420.4 197.9,452.3 M226.9,420.4 226.9,432.1 221.9,432.1 221.9,452.3 M272.9,420.4 274.8,452.3 M306.8,420.4 306.1,452.3 M351.4,420.4 351.4,428.8 353.5,428.8 353.5,452.3 M384.4,420.4 384.4,434.8 381.7,434.8 381.7,452.3 M420.1,420.4 420.1,428.4 422.3,428.4 422.3,452.3 M461.9,420.4 463.7,452.3 M491.6,420.4 493.3,452.3 M529.5,443.0 529.5,452.3 M-2.8,422.6 27.9,422.6 27.9,419.4 64.8,419.4 64.8,417.5 106.4,417.5 106.4,418.7 133.7,418.7 133.7,418.2 165.2,418.2 165.2,421.7 198.0,421.7 198.0,423.1 226.9,423.1 226.9,417.9 272.9,417.9 272.9,419.5 306.8,419.5 306.8,417.9 351.4,417.9 351.4,421.0 384.4,421.0 384.4,417.7 420.1,417.7 420.1,421.6 461.9,421.6 461.9,422.0 491.6,422.0 491.6,423.2 523.8,423.2 M26.5,452.3 26.5,463.7 32.0,463.7 32.0,480.3 M72.3,452.3 72.3,461.2 75.8,461.2 75.8,480.3 M100.0,452.3 98.6,480.3 M142.3,452.3 143.0,480.3 M168.5,452.3 169.6,480.3 M199.1,452.3 199.1,459.7 202.4,459.7 202.4,480.3 M226.8,452.3 228.6,480.3 M270.6,452.3 270.6,463.2 270.5,463.2 270.5,480.3 M297.9,452.3 297.7,480.3 M329.9,452.3 328.4,480.3 M371.3,452.3 371.3,464.1 366.6,464.1 366.6,480.3 M403.1,452.3 403.9,480.3 M448.6,452.3 448.4,480.3 M490.8,452.3 489.6,480.3 M534.0,458.5 534.5,480.3 M-4.1,449.6 26.5,449.6 26.5,450.4 72.3,450.4 72.3,449.7 100.0,449.7 100.0,449.5 142.3,449.5 142.3,454.6 168.5,454.6 168.5,451.3 199.1,451.3 199.1,454.6 226.8,454.6 226.8,452.5 270.6,452.5 270.6,452.7 297.9,452.7 297.9,454.9 329.9,454.9 329.9,449.7 371.3,449.7 371.3,449.4 403.1,449.4 403.1,451.2 448.6,451.2 448.6,451.8 490.8,451.8 490.8,450.5 530.8,450.5 M20.5,480.3 20.5,497.0 25.7,497.0 25.7,511.5 M61.0,480.3 61.0,500.9 57.8,500.9 57.8,511.5 M90.6,480.3 90.6,511.5 M130.6,480.3 131.8,511.5 M162.3,480.3 162.3,503.5 167.3,503.5 167.3,511.5 M192.0,480.3 192.0,498.7 188.8,498.7 188.8,511.5 M229.0,480.3 229.0,494.8 230.8,494.8 230.8,511.5 M257.6,480.3 257.6,498.2 258.1,498.2 258.1,511.5 M298.9,480.3 298.9,502.6 302.9,502.6 302.9,511.5 M327.4,480.3 326.1,511.5 M372.0,480.3 373.3,511.5 M406.3,480.3 407.3,511.5 M444.7,480.3 446.0,511.5 M475.8,480.3 474.2,511.5 M505.0,480.3 503.8,511.5 M534.4,480.3 533.5,511.5 M-2.0,482.6 20.5,482.6 20.5,482.7 61.0,482.7 61.0,480.4 90.6,480.4 90.6,478.4 130.6,478.4 130.6,478.9 162.3,478.9 162.3,478.1 192.0,478.1 192.0,479.9 229.0,479.9 229.0,479.9 257.6,479.9 257.6,482.7 298.9,482.7 298.9,480.6 327.4,480.6 327.4,477.5 372.0,477.5 372.0,481.5 406.3,481.5 406.3,479.0 444.7,479.0 444.7,482.1 475.8,482.1 475.8,481.3 505.0,481.3 505.0,477.8 534.4,477.8 534.4,478.7 537.7,478.7 M21.3,511.5 21.3,519.5 15.3,519.5 15.3,550.4 M57.7,511.5 56.9,550.4 M85.7,511.5 86.6,550.4 M128.9,511.5 128.9,529.1 130.4,529.1 130.4,550.4 M173.3,511.5 172.1,550.4 M203.1,511.5 203.1,531.2 197.9,531.2 197.9,550.4 M248.7,511.5 248.7,523.6 248.5,523.6 248.5,550.4 M279.5,511.5 278.6,550.4 M313.3,511.5 313.3,519.2 313.4,519.2 313.4,550.4 M346.2,511.5 346.2,530.0 344.9,530.0 344.9,550.4 M385.1,511.5 383.7,550.4 M416.1,511.5 416.1,525.4 413.8,525.4 413.8,550.4 M459.2,511.5 460.3,550.4 M491.8,511.5 492.8,550.4 M517.9,511.5 517.9,539.3 522.4,539.3 522.4,550.4 M-4.4,509.7 21.3,509.7 21.3,512.7 57.7,512.7 57.7,510.0 85.7,510.0 85.7,512.1 128.9,512.1 128.9,514.3 173.3,514.3 173.3,510.1 203.1,510.1 203.1,510.2 248.7,510.2 248.7,512.2 279.5,512.2 279.5,513.3 313.3,513.3 313.3,511.3 346.2,511.3 346.2,513.1 385.1,513.1 385.1,510.9 416.1,510.9 416.1,513.4 459.2,513.4 459.2,509.3 491.8,509.3 491.8,509.0 517.9,509.0 517.9,508.6 536.7,508.6 M33.7,550.4 33.7,573.1 34.0,573.1 34.0,582.3 M60.7,550.4 59.7,582.3 M92.9,550.4 94.6,582.3 M121.6,550.4 121.6,566.3 127.4,566.3 127.4,582.3 M153.1,550.4 153.1,573.7 155.1,573.7 155.1,582.3 M199.0,550.4 197.4,582.3 M230.6,550.4 231.8,582.3 M261.4,550.4 261.5,582.3 M290.3,550.4 289.6,582.3 M333.6,550.4 332.1,582.3 M359.8,550.4 360.1,582.3 M402.4,550.4 401.7,582.3 M438.8,550.4 438.8,563.6 440.9,563.6 440.9,582.3 M481.1,550.4 480.1,582.3 M520.5,550.4 521.1,582.3 M-3.5,547.9 33.7,547.9 33.7,550.5 60.7,550.5 60.7,551.1 92.9,551.1 92.9,547.9 121.6,547.9 121.6,547.9 153.1,547.9 153.1,552.2 199.0,552.2 199.0,549.0 230.6,549.0 230.6,549.5 261.4,549.5 261.4,548.3 290.3,548.3 290.3,550.4 333.6,550.4 333.6,549.9 359.8,549.9 359.8,548.6 402.4,548.6 402.4,547.4 438.8,547.4 438.8,550.7 481.1,550.7 481.1,549.9 520.5,549.9 520.5,551.6 536.8,551.6 M21.9,582.3 22.2,613.0 M50.9,582.3 51.3,613.0 M85.0,582.3 85.0,613.0 M119.2,582.3 119.0,613.0 M158.2,582.3 157.8,613.0 M193.7,582.3 193.7,607.0 192.0,607.0 192.0,613.0 M232.2,582.3 231.0,613.0 M273.3,582.3 272.2,613.0 M315.5,582.3 315.5,593.6 312.5,593.6 312.5,613.0 M353.7,582.3 353.6,613.0 M396.6,582.3 396.6,598.8 398.7,598.8 398.7,613.0 M437.5,582.3 438.8,613.0 M469.0,582.3 470.9,613.0 M502.7,582.3 504.3,613.0 M536.0,582.3 537.2,613.0 M-2.9,580.9 21.9,580.9 21.9,581.5 50.9,581.5 50.9,582.6 85.0,582.6 85.0,580.1 119.2,580.1 119.2,580.7 158.2,580.7 158.2,581.4 193.7,581.4 193.7,582.0 232.2,582.0 232.2,579.4 273.3,579.4 273.3,583.5 315.5,583.5 315.5,583.2 353.7,583.2 353.7,580.4 396.6,580.4 396.6,580.3 437.5,580.3 437.5,581.8 469.0,581.8 469.0,584.7 502.7,584.7 502.7,579.8 536.0,579.8 536.0,583.8 M27.4,613.0 25.9,646.1 M71.8,613.0 70.1,646.1 M101.7,613.0 101.7,630.0 97.4,630.0 97.4,646.1 M140.5,613.0 139.1,646.1 M170.7,613.0 171.4,646.1 M214.2,613.0 213.4,646.1 M255.7,613.0 255.0,646.1 M289.4,613.0 290.6,646.1 M328.0,613.0 326.5,646.1 M368.6,613.0 369.1,646.1 M406.1,613.0 406.6,646.1 M448.2,613.0 446.9,646.1 M477.3,613.0 477.3,626.2 472.5,626.2 472.5,646.1 M504.5,613.0 505.0,646.1 M538.1,613.0 538.1,627.9 536.4,627.9 536.4,646.1 M-4.8,615.0 27.4,615.0 27.4,611.3 71.8,611.3 71.8,610.7 101.7,610.7 101.7,615.6 140.5,615.6 140.5,612.4 170.7,612.4 170.7,614.8 214.2,614.8 214.2,610.1 255.7,610.1 255.7,611.4 289.4,611.4 289.4,611.3 328.0,611.3 328.0,614.7 368.6,614.7 368.6,612.9 406.1,612.9 406.1,613.3 448.2,613.3 448.2,612.0 477.3,612.0 477.3,611.5 504.5,611.5 504.5,614.6 538.1,614.6 538.1,610.1 541.4,610.1 M25.3,646.1 25.3,660.8 30.0,660.8 30.0,678.2 M68.9,646.1 68.9,662.2 66.2,662.2 66.2,678.2 M110.2,646.1 112.1,678.2 M140.4,646.1 140.4,664.9 135.7,664.9 135.7,678.2 M186.4,646.1 187.3,678.2 M229.5,646.1 229.5,654.1 230.0,654.1 230.0,678.2 M256.2,646.1 255.3,678.2 M297.8,646.1 298.2,678.2 M327.3,646.1 327.3,659.4 321.6,659.4 321.6,678.2 M369.3,646.1 371.0,678.2 M404.6,646.1 404.6,667.6 400.3,667.6 400.3,678.2 M436.2,646.1 437.3,678.2 M472.3,646.1 470.7,678.2 M518.1,646.1 516.3,678.2 M-3.8,649.1 25.3,649.1 25.3,646.9 68.9,646.9 68.9,647.8 110.2,647.8 110.2,643.4 140.4,643.4 140.4,644.0 186.4,644.0 186.4,648.9 229.5,648.9 229.5,644.3 256.2,644.3 256.2,647.4 297.8,647.4 297.8,646.8 327.3,646.8 327.3,645.8 369.3,645.8 369.3,646.1 404.6,646.1 404.6,647.8 436.2,647.8 436.2,645.2 472.3,645.2 472.3,648.4 518.1,648.4 518.1,648.3 544.1,648.3 M42.4,678.2 42.4,707.3 44.4,707.3 44.4,715.5 M83.8,678.2 85.2,715.5 M115.6,678.2 115.2,715.5 M154.8,678.2 154.8,707.8 154.9,707.8 154.9,715.5 M181.5,678.2 179.5,715.5 M212.3,678.2 214.1,715.5 M238.4,678.2 237.8,715.5 M265.2,678.2 264.0,715.5 M298.1,678.2 298.1,686.6 296.7,686.6 296.7,715.5 M324.7,678.2 324.7,707.4 326.1,707.4 326.1,715.5 M360.3,678.2 360.1,715.5 M390.9,678.2 391.5,715.5 M431.3,678.2 431.3,691.5 428.0,691.5 428.0,715.5 M459.9,678.2 459.9,688.7 462.2,688.7 462.2,715.5 M489.2,678.2 487.4,715.5 M527.4,678.2 529.1,715.5 M-0.5,680.5 42.4,680.5 42.4,678.7 83.8,678.7 83.8,680.4 115.6,680.4 115.6,679.3 154.8,679.3 154.8,678.0 181.5,678.0 181.5,678.3 212.3,678.3 212.3,677.7 238.4,677.7 238.4,676.4 265.2,676.4 265.2,679.0 298.1,679.0 298.1,676.2 324.7,676.2 324.7,675.9 360.3,675.9 360.3,677.5 390.9,677.5 390.9,677.6 431.3,677.6 431.3,678.6 459.9,678.6 459.9,680.7 489.2,680.7 489.2,679.6 527.4,679.6 527.4,677.6 546.6,677.6 M15.9,715.5 16.1,743.3 M44.5,715.5 42.6,743.3 M72.9,715.5 73.2,743.3 M106.8,715.5 108.1,743.3 M141.8,715.5 141.8,724.8 141.5,724.8 141.5,743.3 M172.3,715.5 174.2,743.3 M215.6,715.5 216.0,743.3 M256.0,715.5 254.8,743.3 M283.8,715.5 283.8,722.6 280.3,722.6 280.3,743.3 M327.5,715.5 327.5,725.2 324.1,725.2 324.1,743.3 M362.7,715.5 363.8,743.3 M408.4,715.5 406.9,743.3 M447.8,715.5 446.1,743.3 M480.4,715.5 480.4,725.1 484.5,725.1 484.5,743.3 M509.2,715.5 507.8,743.3 M546.9,730.9 546.5,743.3 M-2.1,714.1 15.9,714.1 15.9,717.0 44.5,717.0 44.5,717.1 72.9,717.1 72.9,716.5 106.8,716.5 106.8,712.8 141.8,712.8 141.8,713.5 172.3,713.5 172.3,717.2 215.6,717.2 215.6,718.3 256.0,718.3 256.0,717.8 283.8,717.8 283.8,715.2 327.5,715.2 327.5,715.4 362.7,715.4 362.7,716.1 408.4,716.1 408.4,716.1 447.8,716.1 447.8,713.1 480.4,713.1 480.4,714.5 509.2,714.5 509.2,717.8 544.3,717.8 M16.0,743.3 16.0,768.7 16.2,768.7 16.2,776.0 M55.3,743.3 56.2,776.0 M98.4,743.3 96.4,776.0 M124.8,743.3 125.5,776.0 M169.7,743.3 170.0,776.0 M205.3,743.3 206.5,776.0 M236.0,743.3 236.0,754.7 234.3,754.7 234.3,776.0 M274.9,743.3 274.9,756.2 277.6,756.2 277.6,776.0 M316.5,743.3 316.7,776.0 M349.6,743.3 350.0,776.0 M388.4,743.3 388.4,758.8 385.6,758.8 385.6,776.0 M422.1,743.3 422.6,776.0 M466.2,743.3 467.7,776.0 M494.2,743.3 494.2,758.9 497.9,758.9 497.9,776.0 M526.9,743.3 527.0,776.0 M-2.4,746.3 16.0,746.3 16.0,740.5 55.3,740.5 55.3,741.1 98.4,741.1 98.4,740.4 124.8,740.4 124.8,741.6 169.7,741.6 169.7,741.9 205.3,741.9 205.3,742.0 236.0,742.0 236.0,741.4 274.9,741.4 274.9,741.7 316.5,741.7 316.5,745.5 349.6,745.5 349.6,742.0 388.4,742.0 388.4,745.0 422.1,745.0 422.1,742.7 466.2,742.7 466.2,742.7 494.2,742.7 494.2,741.3 526.9,741.3 526.9,745.7 545.7,745.7 M28.3,776.0 28.3,790.2 32.6,790.2 32.6,806.9 M66.3,776.0 68.2,806.9 M106.6,776.0 106.6,784.9 102.2,784.9 102.2,806.9 M148.3,776.0 147.3,806.9 M175.2,776.0 173.3,806.9 M220.7,776.0 220.7,799.3 215.1,799.3 215.1,806.9 M259.6,776.0 259.6,793.5 258.2,793.5 258.2,806.9 M296.5,776.0 296.5,783.6 299.4,783.6 299.4,806.9 M330.6,776.0 331.6,806.9 M358.6,776.0 358.1,806.9 M404.1,776.0 404.1,793.7 404.0,793.7 404.0,806.9 M434.0,776.0 435.1,806.9 M473.8,776.0 475.5,806.9 M516.9,776.0 518.6,806.9 M545.3,776.0 545.3,794.4 541.3,794.4 541.3,806.9 M-4.0,777.5 28.3,777.5 28.3,776.9 66.3,776.9 66.3,774.4 106.6,774.4 106.6,778.9 148.3,778.9 148.3,773.3 175.2,773.3 175.2,777.1 220.7,777.1 220.7,777.5 259.6,777.5 259.6,775.0 296.5,775.0 296.5,778.2 330.6,778.2 330.6,775.6 358.6,775.6 358.6,776.9 404.1,776.9 404.1,777.2 434.0,777.2 434.0,776.2 473.8,776.2 473.8,778.4 516.9,778.4 516.9,773.7 545.3,773.7 545.3,773.7 M22.2,806.9 22.3,813.1 M52.3,806.9 52.6,813.1 M82.9,806.9 82.7,813.1 M114.6,806.9 114.9,813.1 M151.7,806.9 151.4,813.1 M184.7,806.9 184.6,813.1 M210.9,806.9 211.0,813.1 M238.5,806.9 238.4,813.1 M270.6,806.9 270.6,813.3 M299.2,806.9 299.3,813.1 M338.7,806.9 338.7,813.2 M368.7,806.9 369.0,813.1 M413.2,806.9 413.5,813.1 M447.0,806.9 447.0,813.5 450.7,813.5 M485.2,806.9 485.2,813.1 M516.6,806.9 516.8,813.1 M-3.9,809.7 22.2,809.7 22.2,806.5 52.3,806.5 52.3,808.6 82.9,808.6 82.9,808.0 114.6,808.0 114.6,807.7 151.7,807.7 151.7,809.1 184.7,809.1 184.7,807.8 210.9,807.8 210.9,805.3 238.5,805.3 238.5,804.2 270.6,804.2 270.6,808.9 299.2,808.9 299.2,809.8 338.7,809.8 338.7,809.6 368.7,809.6 368.7,808.6 413.2,808.6 413.2,804.4 447.0,804.4 447.0,805.1 485.2,805.1 485.2,806.4 516.6,806.4 516.6,807.2 544.2,807.2" fill="none" stroke="#5f6464" stroke-width="1" shape-rendering="crispEdges"/>
<path d="M6.2,706.0 10.5,702.2 17.6,701.3 24.6,699.0 29.0,699.0 30.8,702.2 28.1,705.7 29.0,708.3 35.1,707.1 44.8,705.3 48.3,704.8 47.5,711.0 46.0,714.5 50.1,718.9 51.8,725.9 59.8,725.0 65.0,727.7 71.2,726.8 73.8,732.1 77.3,738.2 82.6,741.7 87.9,740.8 94.9,742.6 98.4,747.0 105.4,748.8 107.2,753.1 114.2,754.9 119.5,747.9 126.5,741.7 133.6,742.6 140.6,746.1 147.6,751.4 149.4,757.5 149.4,759.0 160.8,759.0 160.8,757.4 158.7,751.2 156.8,745.6 157.7,741.4 160.8,737.9 158.0,733.0 153.0,729.4 149.5,724.5 151.6,721.0 155.1,718.9 153.7,713.3 152.3,711.2 155.1,716.1 160.8,721.7 166.4,726.6 173.4,730.8 179.1,735.8 183.3,740.7 187.5,744.9 193.1,747.0 198.7,750.5 204.4,753.3 210.0,755.4 215.6,757.4 215.6,759.0 240.9,759.0 240.9,757.4 238.1,754.0 232.5,752.6 229.7,748.4 226.9,744.2 221.2,742.1 217.0,740.0 212.8,737.9 207.2,737.2 203.0,735.1 200.1,731.5 198.0,728.7 194.5,726.6 191.0,723.1 187.5,718.9 184.0,717.5 181.9,716.1 186.1,711.9 190.3,708.3 193.1,703.4 196.6,699.9 200.1,697.1 203.0,693.6 204.4,689.4 203.7,685.1 204.4,680.2 205.8,676.7 202.2,681.6 198.7,683.7 197.3,688.0 196.6,692.2 193.1,695.0 188.9,694.7 186.1,691.5 182.6,688.7 179.1,688.0 176.9,684.4 177.6,680.9 181.9,678.8 186.1,680.2 190.3,677.4 193.1,673.9 196.6,669.7 200.8,667.6 205.8,666.9 210.0,663.4 212.8,658.4 214.9,654.9 213.5,652.1 215.6,650.7 218.4,651.4 220.5,655.6 224.7,654.9 229.7,652.8 233.9,650.0 235.7,649.4 241.0,648.5 241.0,645.9 250.6,645.9 251.5,647.7 256.8,649.4 262.1,652.1 267.3,651.2 272.6,652.1 277.9,653.8 281.4,652.1 284.9,649.4 290.2,647.7 295.4,650.3 299.8,652.9 303.4,652.9 306.0,650.3 306.9,639.8 307.8,631.0 310.4,624.8 313.0,622.2 316.5,623.9 320.1,625.7 320.9,632.7 320.1,639.8 322.7,645.9 326.2,650.3 330.6,654.7 334.1,657.3 335.0,660.0 330.6,660.8 323.6,661.7 316.5,662.6 311.3,663.5 317.6,662.4 335.1,661.5 352.7,657.1 370.3,652.7 387.9,649.2 405.4,647.5 423.0,648.3 440.6,651.0 454.7,655.4 467.0,660.6 477.5,667.7 486.3,673.8 493.3,680.0 500.0,686.1 487.0,676.9 495.8,682.2 501.1,686.6 506.4,690.1 509.9,692.7 514.3,698.0 516.0,704.1 514.3,710.3 511.6,712.1 516.9,711.7 523.1,711.2 527.5,714.7 532.7,718.2 534.5,720.0 539.8,718.2 546.8,714.7 553.8,712.1 559.1,707.7 564.4,703.3 569.6,698.9 574.9,693.6 578.4,691.0 582.8,692.7 586.3,691.8 586.9,686.6 583.7,684.8 585.4,679.5 589.8,676.9 594.2,674.3 597.8,673.4 601.3,676.0 606.5,675.1 611.8,674.3 615.3,677.8 620.6,682.2 627.6,685.7 634.7,689.2 639.9,693.6 643.4,700.6 647.0,706.8 653.1,711.2 656.6,713.8 657.5,719.1 656.6,724.4 659.3,727.9 664.5,732.3 668.9,735.8 672.4,741.1 675.1,745.4 680.0,749.8 620.0,682.3 627.0,684.1 633.2,688.5 638.5,693.7 642.8,699.9 646.4,706.0 651.6,710.4 656.9,713.9 657.8,720.1 656.9,726.2 662.2,730.6 669.2,735.9 673.6,742.1 678.9,747.3 682.4,752.6 681.5,757.9 682.4,764.0 685.0,757.9 690.3,756.1 697.3,757.9 700.8,760.5 701.7,766.7 705.2,771.1 707.0,777.2 711.4,780.7 714.0,784.2 712.3,789.5 711.4,793.0 713.1,807.1 713.0,806.0 6.0,806.0 6.0,706.0Z" fill="#004364" stroke="none"/>
<path d="M806.0,569.7 803.7,575.0 804.6,583.7 802.9,592.5 805.1,597.7 802.9,604.7 804.1,610.0 801.6,617.0 802.3,624.0 803.7,631.0 802.3,638.0 803.7,645.0 804.8,652.0 806.0,655.5Z" fill="#004364" stroke="none"/>
<path d="M343.1,652.7 345.7,656.2 352.7,654.5 356.2,651.0 358.0,645.7 361.5,643.1 359.8,641.3 356.6,645.7 353.6,651.0 349.2,652.7 344.8,651.8Z M369.4,651.0 373.8,648.3 377.3,642.2 375.6,632.5 378.2,632.5 380.8,637.8 382.6,640.4 386.1,639.5 387.9,631.6 390.0,632.5 388.8,638.7 394.9,643.1 391.4,645.7 382.6,649.2 375.6,651.8 370.3,653.6Z M417.8,643.9 423.0,642.2 429.2,639.5 430.9,641.3 435.3,643.1 445.9,640.4 451.1,643.1 454.7,645.7 453.8,649.2 447.6,647.5 440.6,647.5 433.6,646.0 426.5,646.6 421.3,647.5Z M474.0,658.0 477.5,656.2 482.8,658.9 488.0,656.2 494.0,653.2 498.5,652.3 495.8,656.7 492.3,661.1 487.0,664.6 484.5,668.1 488.0,672.0 497.0,678.0 504.0,681.0 506.0,679.0 502.0,677.0 499.0,680.0 493.0,675.0 487.0,671.0 482.8,669.4 479.3,663.3 477.5,662.4Z M515.1,711.7 523.1,710.3 531.0,708.5 538.0,707.7 540.6,704.1 544.1,701.5 548.5,700.6 546.8,704.1 545.9,708.5 550.3,706.8 557.3,703.3 564.4,698.9 571.4,692.7 577.5,690.1 578.4,691.0 574.9,693.6 569.6,698.9 564.4,703.3 559.1,707.7 553.8,712.1 546.8,714.7 539.8,718.2 534.5,720.0 532.7,718.2 527.5,714.7 523.1,711.2Z" fill="#004364" stroke="#000" stroke-width="1"/>
<path d="M6.2,706.0 10.5,702.2 17.6,701.3 24.6,699.0 29.0,699.0 30.8,702.2 28.1,705.7 29.0,708.3 35.1,707.1 44.8,705.3 48.3,704.8 47.5,711.0 46.0,714.5 50.1,718.9 51.8,725.9 59.8,725.0 65.0,727.7 71.2,726.8 73.8,732.1 77.3,738.2 82.6,741.7 87.9,740.8 94.9,742.6 98.4,747.0 105.4,748.8 107.2,753.1 114.2,754.9 119.5,747.9 126.5,741.7 133.6,742.6 140.6,746.1 147.6,751.4 149.4,757.5 149.4,759.0 160.8,759.0 160.8,757.4 158.7,751.2 156.8,745.6 157.7,741.4 160.8,737.9 158.0,733.0 153.0,729.4 149.5,724.5 151.6,721.0 155.1,718.9 153.7,713.3 152.3,711.2 155.1,716.1 160.8,721.7 166.4,726.6 173.4,730.8 179.1,735.8 183.3,740.7 187.5,744.9 193.1,747.0 198.7,750.5 204.4,753.3 210.0,755.4 215.6,757.4 215.6,759.0 240.9,759.0 240.9,757.4 238.1,754.0 232.5,752.6 229.7,748.4 226.9,744.2 221.2,742.1 217.0,740.0 212.8,737.9 207.2,737.2 203.0,735.1 200.1,731.5 198.0,728.7 194.5,726.6 191.0,723.1 187.5,718.9 184.0,717.5 181.9,716.1 186.1,711.9 190.3,708.3 193.1,703.4 196.6,699.9 200.1,697.1 203.0,693.6 204.4,689.4 203.7,685.1 204.4,680.2 205.8,676.7 202.2,681.6 198.7,683.7 197.3,688.0 196.6,692.2 193.1,695.0 188.9,694.7 186.1,691.5 182.6,688.7 179.1,688.0 176.9,684.4 177.6,680.9 181.9,678.8 186.1,680.2 190.3,677.4 193.1,673.9 196.6,669.7 200.8,667.6 205.8,666.9 210.0,663.4 212.8,658.4 214.9,654.9 213.5,652.1 215.6,650.7 218.4,651.4 220.5,655.6 224.7,654.9 229.7,652.8 233.9,650.0 M235.7,649.4 241.0,648.5 241.0,645.9 250.6,645.9 251.5,647.7 256.8,649.4 262.1,652.1 267.3,651.2 272.6,652.1 277.9,653.8 281.4,652.1 284.9,649.4 290.2,647.7 295.4,650.3 299.8,652.9 303.4,652.9 306.0,650.3 306.9,639.8 307.8,631.0 310.4,624.8 313.0,622.2 316.5,623.9 320.1,625.7 320.9,632.7 320.1,639.8 322.7,645.9 326.2,650.3 330.6,654.7 334.1,657.3 335.0,660.0 330.6,660.8 323.6,661.7 316.5,662.6 311.3,663.5 M317.6,662.4 335.1,661.5 352.7,657.1 370.3,652.7 387.9,649.2 405.4,647.5 423.0,648.3 440.6,651.0 454.7,655.4 467.0,660.6 477.5,667.7 486.3,673.8 493.3,680.0 500.0,686.1 M487.0,676.9 495.8,682.2 501.1,686.6 506.4,690.1 509.9,692.7 514.3,698.0 516.0,704.1 514.3,710.3 511.6,712.1 516.9,711.7 523.1,711.2 527.5,714.7 532.7,718.2 534.5,720.0 539.8,718.2 546.8,714.7 553.8,712.1 559.1,707.7 564.4,703.3 569.6,698.9 574.9,693.6 578.4,691.0 582.8,692.7 586.3,691.8 586.9,686.6 583.7,684.8 585.4,679.5 589.8,676.9 594.2,674.3 597.8,673.4 601.3,676.0 606.5,675.1 611.8,674.3 615.3,677.8 620.6,682.2 627.6,685.7 634.7,689.2 639.9,693.6 643.4,700.6 647.0,706.8 653.1,711.2 656.6,713.8 657.5,719.1 656.6,724.4 659.3,727.9 664.5,732.3 668.9,735.8 672.4,741.1 675.1,745.4 680.0,749.8 M620.0,682.3 627.0,684.1 633.2,688.5 638.5,693.7 642.8,699.9 646.4,706.0 651.6,710.4 656.9,713.9 657.8,720.1 656.9,726.2 662.2,730.6 669.2,735.9 673.6,742.1 678.9,747.3 682.4,752.6 681.5,757.9 682.4,764.0 685.0,757.9 690.3,756.1 697.3,757.9 700.8,760.5 701.7,766.7 705.2,771.1 707.0,777.2 711.4,780.7 714.0,784.2 712.3,789.5 711.4,793.0 713.1,807.1" fill="none" stroke="#000" stroke-width="1.3" stroke-linejoin="round"/>
<path d="M15.8,718.0 24.6,716.2 37.8,720.6 39.5,723.3 30.8,729.4 21.1,725.0 15.8,720.6Z M66.8,742.6 72.1,740.0 77.3,747.9 82.6,751.4 77.3,751.7 68.5,749.6Z M197.0,683.7 204.1,681.9 207.6,689.0 204.9,696.9 200.5,701.3 195.3,706.5 190.0,710.1 190.0,695.1 196.2,694.2 197.9,687.2Z M523.1,711.2 531.0,711.2 532.7,712.9 529.2,715.6Z" fill="#5e504b" stroke="#000" stroke-width="1"/>
<path d="M249.3,678.1 252.9,683.0 254.7,690.8 253.6,697.8 250.8,704.8 246.5,710.5 242.3,715.4 238.8,717.5 M236.7,721.7 233.9,725.2 M228.3,728.0 224.0,731.5 M240.9,702.0 242.3,698.5 245.8,696.4 249.3,693.6 251.5,692.2 M229.0,663.4 235.3,662.0 233.9,665.5 M240.9,664.8 246.5,663.4 250.8,662.0 M257.1,661.2 264.8,662.0 271.8,663.4 280.0,664.1 M257.7,661.7 263.8,660.8 272.6,662.6 281.4,664.4 285.8,665.2 M295.4,661.7 304.2,660.0 308.6,661.7 M227.8,662.6 235.7,661.7 M241.8,664.4 249.8,661.7 M508.1,693.6 506.4,698.0 507.2,705.0 510.8,712.1 M562.6,702.4 569.6,698.9 M487.0,668.1 497.6,677.8 506.4,681.3 508.1,679.5 504.6,677.8 501.1,680.4 494.1,673.4" fill="none" stroke="#000" stroke-width="1.4"/>
<path d="M204.4,675.3 212.8,678.1 221.2,672.5 228.3,673.9 228.3,686.6 224.0,696.4 218.4,706.2 210.0,711.9 204.4,717.5 201.5,725.9 203.0,734.4 198.7,735.8 193.1,728.7 187.5,723.1 181.9,717.5 187.5,711.9 193.1,703.4 200.1,697.8 204.4,690.8 204.4,683.7Z M149.5,723.1 155.1,718.9 162.2,725.9 170.6,730.1 179.1,735.8 183.3,741.4 179.1,745.6 173.4,748.4 166.4,751.2 160.8,755.4 158.0,748.4 156.6,741.4 160.8,737.2 158.0,731.5 150.9,728.7Z M120.0,742.8 128.4,740.0 134.1,742.8 141.1,747.0 148.1,751.2 148.1,757.4 120.0,757.4Z M112.5,742.6 119.5,740.8 126.5,739.1 133.6,740.0 140.6,742.6 148.5,747.9 149.4,757.5 112.5,757.5 115.1,751.4Z M84.4,740.8 91.4,740.0 98.4,742.6 105.4,747.9 107.2,754.9 98.4,757.5 87.9,754.9 82.6,747.9Z M149.4,718.0 158.2,712.7 168.7,718.0 175.7,726.8 182.8,733.8 186.3,744.4 182.8,754.9 172.2,757.5 158.2,757.5 154.7,744.4 151.1,733.8Z M204.1,671.4 214.6,669.6 227.8,674.9 227.8,689.0 223.4,703.0 216.4,713.6 205.8,718.8 200.5,713.6 205.8,703.0 209.3,692.5 205.8,681.9Z" fill="#004364" stroke="none"/>
<path d="M206.7,695.6 207.5,694.0 206.6,693.2 204.2,692.2 M208.6,697.6 209.9,697.6 211.9,697.2 M208.4,707.9 208.0,705.7 206.8,703.9 M191.4,715.5 189.0,717.1 188.2,718.3 189.4,720.6 190.9,720.3 M204.8,694.2 204.8,696.1 203.8,696.9 M196.4,716.5 195.6,717.3 195.5,719.7 197.9,720.3 199.9,719.5 201.7,719.8 M198.0,732.0 197.1,733.2 197.2,735.6 M200.3,730.5 198.3,730.9 196.9,728.6 197.9,727.4 M204.4,709.8 206.2,710.8 207.2,712.0 M216.2,701.4 216.9,699.8 217.6,698.1 215.9,695.7 215.0,694.8 214.4,693.8 M208.2,706.4 208.0,705.0 206.9,703.1 M204.2,692.2 203.9,694.2 202.6,695.7 203.3,698.5 204.7,700.4 M195.7,713.2 198.0,714.8 199.4,715.1 201.3,715.7 203.0,717.2 M200.5,723.3 201.2,724.1 202.4,723.1 202.6,720.7 204.5,720.6 205.1,723.5 M185.8,714.3 186.9,713.5 188.5,714.0 189.4,716.7 M200.2,697.9 200.5,696.7 198.2,695.0 198.2,693.7 M212.4,694.7 211.5,697.1 210.4,697.7 209.2,697.3 M227.6,684.8 227.6,683.2 226.0,681.8 M198.3,701.5 198.3,698.7 197.1,698.2 194.6,697.1 194.0,695.0 194.7,693.9 M188.4,711.7 190.4,712.1 192.8,713.0 M217.7,704.6 215.5,704.2 213.5,703.7 M214.0,701.1 212.5,700.8 209.9,699.9 210.2,697.1 211.6,696.8 213.3,696.1 M213.0,699.6 211.3,701.8 212.3,704.0 212.2,705.3 209.3,706.0 M200.3,703.3 201.1,701.6 201.9,700.1 201.1,698.7 M207.6,700.4 209.1,700.6 209.0,701.9 207.6,702.1 207.0,701.1 M194.5,729.8 193.0,732.0 190.3,733.2 188.8,734.6 M205.7,703.8 207.7,705.2 208.7,705.7 208.2,707.9 207.1,708.3 M221.6,676.7 219.3,674.7 216.8,673.5 216.1,672.7 215.9,669.8 217.4,669.6 M211.0,706.1 211.4,707.4 212.1,708.1 213.2,708.2 214.7,709.6 216.6,709.1 M225.2,679.2 226.9,678.0 229.3,679.7 230.8,679.6 231.7,678.6 234.0,679.4 M199.5,704.5 200.5,705.0 201.8,704.1 200.9,702.7 M222.8,686.3 224.2,687.6 225.2,688.6 225.9,689.3 227.1,689.4 M192.7,709.5 190.8,708.0 191.4,706.3 190.7,703.4 M188.8,718.3 189.7,716.0 190.4,714.3 M214.4,704.5 216.3,705.5 215.9,707.8 M214.0,687.0 216.4,688.8 218.2,689.2 218.6,688.3 M206.5,688.0 204.4,689.2 202.6,690.3 201.4,690.3 200.3,689.3 199.1,690.1 M215.7,685.5 215.6,683.7 215.2,681.4 216.6,679.7 217.7,679.2 217.8,677.7 M216.3,691.8 214.5,691.0 214.9,689.9 M214.8,690.6 214.3,688.5 213.5,687.7 M199.8,730.5 201.1,730.3 204.0,730.0 M214.5,687.1 215.2,686.0 217.3,687.1 219.8,687.5 221.5,687.3 221.9,685.7 M200.3,732.0 199.1,732.9 198.2,734.4 M198.6,699.6 199.2,700.5 199.2,702.8 M217.2,697.8 218.3,697.7 219.8,698.9 220.0,701.2 M224.9,680.6 223.9,681.7 221.6,682.0 220.2,682.5 218.2,683.6 M187.4,713.2 189.0,714.3 191.5,714.6 193.5,714.3 194.3,713.2 195.5,712.0 M199.0,723.7 198.1,725.3 197.6,727.3 M226.8,680.5 226.0,683.1 226.2,685.4 226.6,687.0 M203.6,700.9 202.0,699.6 201.1,696.9 202.0,694.8 M217.3,701.4 217.0,702.6 216.4,703.6 M210.9,705.9 211.1,707.5 209.8,707.9 M194.0,722.5 193.9,724.1 195.4,726.3 197.4,726.7 198.4,727.1 M201.0,713.6 203.2,714.4 204.7,714.5 207.0,716.2 M213.5,685.0 211.8,682.7 209.3,681.9 M217.1,691.2 219.9,691.3 222.8,691.3 223.1,689.1 224.2,689.1 224.2,686.9 M201.1,717.4 199.0,719.2 196.0,719.1 195.8,717.5 193.2,716.3 192.8,715.3 M212.7,696.5 212.0,697.5 212.8,698.3 215.2,699.8 217.0,701.5 M199.5,721.1 201.5,722.5 203.4,721.8 204.8,721.0 206.7,721.4 207.9,722.4 M210.9,698.1 212.5,700.4 215.0,700.9 215.2,702.6 217.3,704.5 218.0,705.9 M215.1,692.5 213.4,693.9 210.7,693.1 M186.8,717.8 184.7,715.9 184.9,714.7 185.0,713.7 186.6,713.6 187.7,714.3 M192.8,727.0 191.1,727.4 190.6,729.1 M212.0,703.0 212.7,700.3 214.2,700.6 214.7,699.6 M201.2,711.7 201.8,710.3 201.4,708.8 M224.0,684.4 223.2,686.3 224.3,688.6 224.2,691.6 226.0,692.2 M224.3,675.0 226.3,675.9 226.5,677.3 M190.1,710.6 188.2,709.7 187.2,708.6 M197.0,715.4 198.1,715.2 200.0,714.8 202.3,713.6 203.6,713.6 M206.6,713.8 205.7,715.1 205.6,718.0 206.8,719.8 208.4,720.7 M215.6,685.4 218.2,684.8 220.6,683.5 221.7,682.7 M199.1,704.4 200.4,704.2 200.4,702.4 202.3,700.7 203.9,701.1 M220.7,675.2 219.6,672.6 217.6,670.6 216.7,668.1 214.1,667.9 M200.4,705.3 201.2,708.1 200.3,709.1 M205.2,683.8 207.1,683.6 209.6,684.4 210.2,687.0 210.7,687.9 212.2,688.9 M219.1,704.4 218.9,703.3 220.4,701.1 M205.6,675.9 203.4,674.7 202.7,675.6 200.8,677.0 201.2,678.2 200.0,679.2 M192.1,725.2 189.5,726.3 188.4,728.6 189.7,730.2 188.8,731.3 M194.1,704.5 195.0,706.1 195.1,707.6 M218.6,689.2 219.5,687.8 221.6,688.1 M211.1,697.4 210.9,695.7 209.3,695.2 208.6,696.4 206.2,698.1 M195.6,705.1 193.4,706.2 193.0,707.8 191.9,709.2 191.7,710.3 M204.5,711.2 205.0,709.6 203.5,708.7 M192.3,709.4 189.6,709.1 189.0,709.9 186.6,709.9 M188.6,714.6 187.5,714.5 186.1,712.1 185.7,710.0 186.0,708.0 M204.7,682.9 206.5,683.1 207.4,682.4 M210.1,704.6 209.4,703.7 208.6,700.8 209.5,699.0 M206.8,696.2 207.2,698.5 210.0,699.6 212.1,698.7 212.0,695.9 214.8,695.2 M220.9,685.3 222.7,685.4 224.4,685.9 224.7,688.8 222.0,689.1 M206.7,702.4 206.3,700.5 207.3,698.6 M224.1,681.6 225.2,682.3 224.1,684.4 M206.6,714.5 206.0,713.2 205.0,713.4 203.5,711.2 203.2,708.5 203.6,707.0 M217.0,685.5 217.6,687.1 216.6,687.6 213.9,686.8 213.1,684.7 212.3,683.3 M208.5,690.7 207.3,692.9 208.7,693.9 210.6,692.4 M205.8,709.1 204.7,710.1 205.4,712.8 204.2,714.5 M201.4,713.4 201.4,716.2 201.4,717.9 200.0,718.4 198.2,719.3 M211.8,694.5 210.0,694.4 208.4,694.0 206.0,693.6 M197.4,713.2 195.1,712.0 195.1,709.7 196.9,707.4 M226.2,688.9 226.7,686.6 225.8,685.7 M194.9,728.5 192.7,729.9 190.7,729.7 M211.2,701.8 212.3,700.9 214.5,701.9 216.3,703.4 215.7,705.6 213.8,707.7 M211.6,709.4 211.0,711.2 211.7,713.4 213.5,713.4 M211.1,688.3 212.2,690.8 213.1,692.9 211.1,694.8 210.9,695.8 208.1,696.5 M192.0,717.8 193.1,717.5 195.2,717.5 196.8,718.8 M206.1,698.5 206.5,699.8 207.3,702.5 206.3,704.5 M211.4,688.5 212.7,689.8 214.7,691.2 M192.3,719.4 193.3,722.1 193.9,723.3 193.1,724.0 M218.9,684.7 219.3,683.5 221.3,681.8 223.1,682.2 M192.6,717.0 192.9,715.1 195.3,714.1 196.8,712.3 197.0,710.4 197.6,709.3 M223.5,682.2 225.8,683.4 225.3,685.9 227.4,687.5 227.9,688.4 230.5,687.0 M212.3,688.3 212.0,689.7 211.9,692.2 213.3,693.4 M206.7,711.1 207.1,708.3 209.4,707.0 M191.0,716.3 190.1,715.5 188.5,716.3 186.8,715.3 185.4,714.0 186.5,711.8 M214.2,704.0 214.3,705.8 213.2,706.0 211.0,705.5 210.4,707.6 208.1,709.4 M205.6,703.2 205.6,701.3 204.5,700.9 M212.4,694.1 211.6,692.6 210.5,692.3 209.0,693.0 M204.8,693.6 205.1,695.9 203.9,697.1 203.6,698.6 202.6,700.7 M218.2,675.0 218.2,673.9 217.6,673.1 214.8,673.4 212.5,672.8 211.5,670.2 M210.2,711.5 207.9,711.8 205.5,712.4 M199.0,724.5 200.3,724.3 200.2,723.3 200.5,721.1 202.4,720.8 M217.8,699.1 217.3,698.2 215.6,696.8 217.1,694.3 217.9,692.6 216.2,691.1 M213.6,680.2 214.1,679.1 214.7,677.6 M208.3,701.0 207.1,698.8 207.3,697.5 M217.1,691.0 214.3,690.4 211.8,691.9 210.8,691.8 210.4,694.0 209.4,694.5 M196.3,718.6 196.6,720.3 194.3,721.0 193.0,721.5 192.4,720.5 193.5,719.7 M219.1,702.7 221.6,702.7 223.2,703.1 224.3,700.4 226.7,699.1 227.8,697.2 M209.8,692.0 208.2,693.8 205.8,695.2 204.4,694.5 M201.5,709.6 201.1,708.4 203.6,706.7 M217.9,704.1 217.4,702.8 218.5,700.2 217.5,698.2 217.7,696.3 216.6,695.3 M192.7,709.2 194.3,707.7 194.1,706.4 191.9,705.4 189.8,705.5 M200.5,705.2 199.2,706.7 197.6,706.2 M194.9,710.9 193.4,713.2 192.3,715.0 192.8,717.5 M201.6,732.4 201.0,731.5 199.6,731.6 199.4,732.7 M224.1,676.6 225.0,674.3 223.7,673.3 222.6,673.6 221.7,671.7 219.1,671.4 M215.3,683.4 214.9,681.3 212.1,681.7 210.8,683.4 208.3,683.7 M191.1,719.8 190.9,718.6 189.8,717.5 188.0,718.3 187.8,719.7 189.8,721.0 M182.4,717.9 185.1,718.2 185.9,716.1 M199.2,719.9 200.9,719.8 201.0,718.7 M216.0,683.9 214.9,684.5 213.8,685.6 215.2,687.2 M195.6,723.4 197.0,725.8 199.9,725.3 M212.9,685.9 212.3,688.3 210.5,688.0 209.3,688.9 209.1,690.7 M188.6,713.0 186.8,713.6 184.4,712.0 182.7,712.1 182.6,713.9 M217.2,683.6 217.8,684.9 220.2,684.2 222.2,682.9 M197.4,725.8 196.4,724.3 196.7,723.0 197.8,722.0 200.2,720.3 199.1,718.2 M198.4,731.5 198.8,729.1 201.3,728.0 M196.8,717.5 196.6,718.7 195.1,719.9 M216.1,689.0 217.5,687.1 215.9,684.9 215.9,683.8 214.1,683.0 212.7,682.4 M221.8,681.8 219.7,683.3 218.4,682.1 216.1,680.7 214.6,679.7 215.7,677.4 M197.4,700.1 199.1,702.1 200.9,701.1 202.6,703.4 204.4,703.6 M211.2,695.6 209.9,696.1 208.5,695.8 M201.4,697.6 203.8,698.7 203.6,701.4 205.8,701.8 207.8,700.4 208.3,698.4 M193.5,705.4 192.8,706.8 191.7,707.6 M205.7,689.5 203.8,690.3 201.9,688.2 201.2,686.8 M214.1,686.5 212.7,688.1 211.0,689.0 210.3,690.3 211.1,692.1 M199.6,709.6 201.2,707.1 201.2,705.4 199.3,703.4 198.2,703.5 M210.0,694.5 210.8,693.0 212.8,692.5 213.3,694.8 211.7,695.6 210.4,695.4 M191.3,711.1 189.3,712.6 187.3,712.2 M224.3,680.5 225.3,678.7 224.0,677.4 M227.9,682.0 230.1,682.5 232.0,682.3 234.3,681.6 235.4,680.2 M207.6,696.8 207.5,698.4 207.0,701.0 207.1,702.7 209.1,704.4 212.0,704.9 M210.1,687.8 207.2,687.4 206.9,688.9 205.3,689.0 203.7,689.0 201.9,688.2 M201.8,701.9 202.8,702.0 203.3,700.6 203.3,698.6 204.6,696.0 M201.4,697.9 203.1,696.0 202.1,694.6 201.1,694.0 199.8,694.0 M212.3,691.2 210.6,692.3 209.3,691.6 209.5,689.8 207.5,689.2 206.3,691.0 M182.0,717.5 180.8,717.5 180.8,718.5 182.9,719.9 184.9,721.8 M209.8,681.7 209.6,682.8 207.6,682.7 M203.6,699.7 205.3,698.4 204.9,697.0 M225.8,676.5 227.2,676.0 229.2,674.4 228.6,673.5 227.2,673.3 225.8,675.0 M185.0,715.3 183.8,714.0 183.7,713.0 184.7,712.5 M197.4,727.6 195.7,726.8 196.2,724.8 M199.8,702.0 201.7,703.5 202.9,703.7 203.7,704.6 206.4,704.8 207.3,703.2 M215.4,696.3 216.6,694.8 215.8,692.2 216.6,689.4 M206.7,698.1 206.3,696.9 205.7,694.9 203.6,693.5 M199.7,714.1 198.7,716.3 196.4,717.5 196.2,718.9 195.0,719.0 M217.1,684.7 216.0,684.1 215.4,682.6 M200.6,730.0 201.9,730.0 204.3,728.9 207.0,729.3 M163.0,752.0 165.3,750.4 167.7,750.7 168.0,749.6 166.9,748.7 M159.8,732.8 162.0,734.6 163.0,735.7 164.3,737.2 162.9,739.1 M179.1,740.3 179.3,739.2 178.5,736.8 176.4,734.9 M163.6,746.1 164.5,745.3 165.9,746.5 164.7,748.6 M170.7,735.4 172.7,735.7 172.8,736.9 172.1,737.7 M173.2,748.3 171.0,748.3 169.5,748.1 169.0,749.8 M160.0,723.9 158.7,723.2 157.0,722.3 157.6,720.7 156.7,718.1 154.6,717.8 M160.8,748.7 159.9,747.7 161.9,745.9 162.6,744.7 M164.5,739.7 166.4,740.4 165.7,742.3 M166.0,747.5 163.8,747.0 161.5,745.3 160.8,744.0 159.6,743.6 M177.5,746.0 176.1,747.0 176.0,748.3 173.4,748.7 M169.9,741.8 171.7,741.4 172.0,742.6 173.9,742.3 M163.9,729.2 164.6,728.4 162.4,726.5 160.1,727.3 159.3,728.0 157.0,727.4 M168.7,736.0 166.6,736.0 165.4,735.4 163.2,735.1 162.3,737.6 160.8,738.4 M171.7,739.5 169.8,740.8 169.2,742.3 168.1,742.3 166.8,744.2 M171.8,732.5 170.3,732.4 168.8,732.6 167.2,735.1 168.2,737.4 170.7,738.2 M172.1,744.8 174.0,745.9 175.5,744.7 176.6,744.2 177.5,743.5 179.2,741.3 M168.1,745.0 169.4,742.4 170.3,740.7 M172.7,738.8 175.2,738.8 176.2,736.4 175.0,735.7 M159.6,744.8 156.9,745.0 154.1,744.6 M175.3,743.8 174.6,741.9 174.1,740.2 M166.0,748.7 164.1,750.5 165.3,753.1 165.1,754.6 166.6,755.9 M177.8,740.1 178.7,740.9 180.0,740.7 M166.0,736.6 166.9,734.5 168.5,733.1 M172.9,735.3 174.0,737.0 175.2,737.5 M177.2,745.5 176.9,747.2 179.0,747.5 180.0,747.1 182.6,745.6 182.1,744.4 M158.4,739.7 158.6,738.6 159.5,736.3 162.0,736.3 M170.9,742.1 169.4,742.0 168.8,740.9 166.0,741.9 164.9,743.2 M179.0,745.1 176.5,746.4 174.7,745.6 175.0,742.9 176.3,743.1 M172.2,733.7 170.5,732.3 168.3,733.3 167.6,735.3 165.3,737.2 M152.0,725.8 152.8,724.3 153.8,721.6 155.9,720.2 M160.3,725.3 162.5,725.7 163.3,725.1 M153.9,720.7 154.3,721.6 156.4,722.5 157.1,721.1 155.6,720.3 M165.9,741.2 164.3,740.4 163.1,742.2 162.9,744.2 M180.7,739.5 183.0,738.7 184.0,739.6 M167.4,749.6 166.5,751.5 165.1,753.1 163.1,753.9 161.5,755.8 M158.2,744.9 159.4,743.1 161.4,742.4 162.8,741.0 162.9,739.5 M181.1,741.7 181.9,742.8 180.7,744.1 181.2,745.3 M155.0,720.0 155.0,717.2 152.7,715.5 153.3,713.9 M180.4,743.5 179.0,744.8 176.6,743.1 175.9,741.9 M158.0,728.5 157.0,729.8 156.3,731.2 154.3,731.0 M154.1,729.9 156.6,731.2 158.5,729.9 M169.7,735.5 169.8,733.0 167.3,732.6 165.4,732.6 M172.6,748.3 174.2,748.0 175.9,747.6 M174.9,735.9 173.7,738.5 171.3,739.7 170.8,738.8 168.2,738.2 167.5,737.4 M160.2,751.0 158.9,752.6 160.0,753.5 161.6,755.1 163.4,757.5 164.7,759.9 M164.8,729.2 162.4,727.9 161.7,726.3 160.2,725.2 161.1,723.7 161.4,721.9 M170.1,732.7 169.6,733.7 168.8,734.4 167.0,734.5 M168.4,743.9 166.5,745.0 164.6,746.2 163.3,747.3 161.8,748.2 M158.5,743.0 160.1,741.7 160.1,739.5 M127.4,755.8 125.5,756.0 124.8,757.1 122.9,756.3 121.0,755.4 M124.8,754.3 123.7,755.6 121.9,754.9 M131.5,752.2 130.7,754.7 130.0,756.5 131.4,757.5 129.9,759.4 M132.6,748.3 131.4,748.0 129.2,747.4 127.6,746.1 M127.3,750.3 125.8,750.1 124.3,751.2 122.6,752.2 123.0,753.5 M142.0,756.0 140.5,754.1 138.8,753.6 136.9,751.8 135.2,751.3 132.7,749.8 M125.4,756.9 124.0,757.0 123.4,756.0 122.4,754.6 120.0,752.9 M138.1,753.8 136.9,755.9 136.1,758.8 136.8,759.6 137.9,760.2 138.2,761.2 M126.5,743.5 124.2,742.4 123.9,741.2 122.8,740.8 122.7,739.6 M122.5,753.1 122.3,751.7 120.6,749.6 M135.5,753.0 137.6,754.5 137.3,755.8 137.9,757.7 M120.2,757.2 121.8,757.9 122.8,759.2 125.1,760.7 125.7,762.2 M127.0,746.6 126.3,747.7 127.2,749.8 125.3,751.1 124.0,751.0 M132.8,752.3 131.9,752.9 130.2,750.8 129.0,751.6 128.0,752.6 M125.9,756.9 126.8,755.3 127.9,755.5 130.2,755.3 130.4,752.6 128.3,752.0 M125.1,756.1 122.9,755.2 121.9,753.9 119.3,753.9 M124.1,756.0 124.6,757.3 125.7,757.2 M126.3,754.5 126.7,753.3 124.6,752.2 123.1,754.4 123.2,755.9 123.0,757.5 M133.2,741.9 134.5,741.4 135.7,743.4 138.6,743.9 139.8,743.4 M123.2,751.2 122.1,749.0 120.6,747.2 118.1,748.1 M117.0,756.1 118.3,755.0 120.3,755.3 M130.4,755.0 128.5,755.7 126.3,754.4 M145.9,749.8 144.2,749.4 144.4,747.1 M114.3,745.2 113.2,746.5 114.6,748.8 113.5,751.0 M129.3,752.9 130.3,754.5 132.1,753.6 131.6,751.3 M117.3,749.8 114.9,750.2 113.1,751.6 113.5,752.6 113.2,755.2 M123.7,743.9 125.4,742.9 126.5,742.3 127.6,741.6 M132.2,748.4 132.2,750.5 129.3,750.5 127.8,749.0 M121.3,740.8 123.4,742.4 125.0,744.1 M120.9,752.9 119.4,753.9 118.2,754.2 117.0,754.1 115.7,753.4 M121.5,753.4 121.0,752.4 120.0,751.7 M120.4,753.3 122.6,754.8 125.1,756.1 126.4,753.5 126.8,751.8 M115.7,743.6 114.1,743.0 113.2,744.0 113.4,745.7 M148.5,757.5 146.6,756.8 145.5,757.0 144.3,756.8 144.1,755.8 142.9,754.4 M136.5,757.0 135.3,754.8 132.7,755.1 131.9,752.4 133.2,750.0 135.4,749.9 M128.5,754.3 130.4,753.1 132.7,753.0 133.0,750.5 135.2,749.3 M134.2,749.4 135.3,747.1 137.6,746.7 M147.2,754.3 147.0,756.7 145.0,757.8 M145.8,747.0 145.5,747.9 147.6,749.5 149.7,750.3 151.3,750.7 M120.4,745.6 120.3,744.4 118.5,742.8 M128.8,751.3 127.6,749.4 125.3,747.7 M126.9,745.2 129.6,745.4 132.2,746.5 134.2,746.7 M147.8,748.4 149.2,751.0 149.9,751.7 149.6,752.8 M88.7,749.9 88.6,746.9 90.3,745.1 91.5,744.7 92.8,745.4 M92.8,749.0 91.3,748.3 89.9,746.5 88.1,745.5 86.8,743.0 M94.9,746.4 96.2,748.8 98.0,748.5 M90.3,749.0 91.7,748.1 91.3,745.3 92.5,744.7 94.6,744.4 94.5,742.6 M101.0,751.2 101.9,753.1 103.9,755.3 104.6,757.8 M99.2,746.7 100.7,747.2 102.3,745.8 104.8,746.7 106.0,746.5 M95.3,755.4 95.2,758.2 94.3,761.0 92.7,761.6 M99.7,744.8 99.5,743.1 99.2,741.9 97.6,741.0 94.8,740.6 93.6,741.4 M105.0,747.9 106.6,747.7 107.4,745.3 107.9,743.2 M99.1,753.2 97.7,754.4 95.2,753.6 94.0,755.1 95.7,756.4 M99.8,745.3 98.3,745.5 98.1,747.6 96.3,749.1 94.8,751.2 M85.3,745.4 85.7,743.6 88.2,743.8 M91.0,746.9 93.4,746.7 94.3,744.4 94.6,741.6 93.9,740.4 M99.4,756.2 99.4,758.5 99.0,760.3 M170.6,725.0 169.4,723.0 170.0,721.0 172.8,721.0 M176.8,749.5 174.5,750.1 172.4,749.2 171.3,749.6 168.7,749.5 M159.5,722.3 160.7,724.0 160.0,725.0 M157.4,733.2 156.8,732.3 155.3,730.9 155.5,729.8 156.6,729.4 157.4,727.3 M161.9,727.6 159.8,726.0 156.8,726.3 154.4,725.9 M157.6,720.5 157.8,719.4 159.1,717.3 160.4,716.1 162.0,714.6 M157.7,751.6 157.9,753.3 156.8,753.4 155.6,753.7 153.3,754.5 M175.5,733.1 176.4,734.1 176.2,735.3 175.1,735.4 M178.1,748.1 176.0,746.8 176.1,745.2 177.0,744.6 179.2,745.1 M164.8,750.2 163.7,748.2 163.3,746.6 162.4,745.7 162.5,743.4 M175.7,747.4 175.3,750.1 175.2,751.3 175.8,752.7 M180.8,736.4 182.0,737.3 183.7,735.1 186.6,734.5 187.0,736.3 186.2,737.9 M179.3,750.4 181.6,749.5 182.6,749.2 M156.9,738.4 158.0,736.5 158.9,734.2 159.9,734.3 161.1,733.1 M181.8,755.1 179.9,754.1 178.8,751.6 176.5,751.4 175.6,748.5 176.3,746.7 M181.9,739.9 182.4,740.9 185.3,741.5 186.8,740.5 189.3,741.2 191.2,742.8 M158.3,754.4 156.1,755.3 155.3,754.0 M185.3,744.5 185.3,746.2 185.3,749.1 186.3,751.7 M170.1,740.2 172.0,738.8 173.8,738.3 M174.1,737.8 172.3,739.7 171.5,740.6 170.2,741.2 M165.2,717.7 166.3,718.2 168.8,717.0 169.3,718.1 170.8,718.7 M160.3,734.9 160.1,733.9 158.8,733.9 157.0,732.7 155.5,731.5 M164.4,740.1 166.1,738.0 167.2,737.8 M174.5,750.8 174.2,753.7 174.4,756.1 M158.7,726.2 158.4,727.5 160.5,729.4 161.2,731.3 161.0,733.8 M169.2,728.0 169.3,726.3 171.3,724.8 173.5,726.2 174.4,727.0 M172.5,729.2 171.2,730.7 169.2,731.5 168.3,729.9 170.0,728.2 170.9,729.0 M157.2,725.6 159.1,725.8 160.3,723.2 M171.9,740.3 171.5,741.7 172.0,742.6 171.8,744.0 173.6,746.4 M173.1,739.2 173.2,737.6 172.1,737.4 M154.6,717.8 154.1,715.9 155.4,715.2 156.9,713.3 155.9,710.5 M181.8,751.3 181.1,750.6 181.5,749.2 184.1,748.8 185.5,749.4 M149.7,721.2 152.0,721.9 153.4,721.5 153.1,719.6 M158.8,716.7 158.1,717.5 156.9,717.2 M162.9,736.2 162.3,737.4 159.6,738.2 160.1,740.4 M182.1,746.9 183.8,746.0 184.7,746.7 185.6,749.3 M158.1,714.0 158.2,716.1 158.4,717.9 M167.3,754.1 168.2,753.2 167.3,751.8 165.5,749.5 164.9,748.5 162.5,748.1 M170.2,751.7 170.4,748.8 170.7,747.4 168.5,745.7 167.4,745.9 165.8,748.3 M166.4,745.5 167.2,746.4 169.7,746.9 170.6,744.7 171.0,743.2 171.7,741.1 M179.3,753.2 178.6,751.9 177.4,750.0 M179.0,755.1 180.0,753.0 180.9,752.5 182.9,751.1 184.8,749.2 M159.9,756.4 162.0,756.0 162.7,757.7 162.5,758.7 161.0,758.6 M167.0,735.7 168.4,736.0 168.4,737.4 168.7,739.0 167.6,740.1 165.7,738.4 M150.6,720.7 148.2,721.5 147.1,724.0 M171.8,734.0 170.8,735.1 172.2,737.7 173.5,737.6 175.6,737.7 176.0,738.7 M158.0,720.2 157.9,718.7 158.0,717.3 156.0,715.9 157.1,713.8 155.8,712.5 M154.5,716.0 152.2,715.5 151.0,715.2 149.1,716.5 146.6,717.2 M156.5,716.1 156.3,713.8 155.1,712.8 153.2,712.3 152.4,711.4 152.5,709.2 M166.8,742.8 167.0,741.2 169.4,739.5 M182.2,733.6 181.2,733.1 181.9,731.1 181.9,729.9 M177.0,729.3 177.6,726.9 176.5,726.0 175.0,726.4 175.2,727.7 176.1,729.3 M184.2,738.6 184.0,741.2 182.5,743.0 180.7,743.0 179.9,745.1 180.5,747.1 M156.9,723.9 154.2,723.4 153.2,722.6 151.8,724.0 M174.0,747.1 175.5,748.1 176.2,748.9 M178.9,750.2 179.6,749.0 179.0,746.6 180.0,746.4 M161.8,736.1 159.2,737.0 157.3,739.2 157.4,740.8 158.5,740.9 158.4,742.1 M167.9,719.0 167.6,716.4 167.1,714.9 M152.0,733.9 154.1,732.6 156.5,733.6 157.5,733.1 M173.9,738.0 173.0,739.2 171.1,738.8 170.0,737.1 M168.6,727.6 169.3,728.9 171.4,729.8 172.6,731.7 M160.9,742.4 162.7,742.9 165.1,742.2 167.4,742.9 M222.5,689.1 221.8,691.3 222.8,691.8 223.9,692.6 222.8,695.1 M213.1,679.4 213.6,681.3 214.4,682.0 215.1,684.2 215.7,685.2 M222.4,694.9 221.6,693.3 221.9,691.2 224.1,690.1 224.6,689.1 225.7,688.8 M225.7,676.2 224.1,674.4 222.3,675.8 220.2,674.7 M209.8,695.2 209.8,697.7 212.6,698.0 M218.8,695.7 216.8,695.3 216.4,694.1 213.9,693.6 212.2,693.6 M227.0,675.4 227.1,678.3 226.6,679.8 226.1,682.2 225.1,682.9 225.2,685.8 M203.5,709.7 205.1,710.8 205.0,713.2 202.8,713.2 M209.1,705.5 210.1,705.0 209.4,703.7 207.3,702.3 M207.5,671.6 208.8,670.6 211.2,672.2 213.4,672.1 214.9,671.5 M219.0,706.8 221.0,705.9 220.2,703.2 219.0,702.9 M208.9,694.5 207.6,694.5 206.0,694.3 205.3,692.7 207.0,690.6 208.2,691.0 M219.0,701.7 218.7,703.7 218.6,706.2 216.4,707.2 215.7,708.1 217.1,710.5 M210.6,699.9 209.6,701.5 208.8,704.0 M226.5,684.9 224.9,684.5 224.3,682.1 222.5,679.9 221.3,677.1 222.2,676.4 M212.7,670.2 213.3,668.6 213.1,665.7 213.7,664.6 M216.6,690.9 218.0,690.7 219.3,689.1 220.5,689.1 221.9,690.8 223.4,689.9 M213.9,706.6 215.5,707.3 215.8,710.1 216.8,710.5 M214.3,714.0 216.1,711.7 217.1,710.9 219.6,710.2 M212.1,699.3 213.1,700.3 213.5,701.3 212.3,703.6 211.0,703.3 M221.9,696.1 223.0,696.9 222.3,699.8 221.4,700.5 M213.1,698.9 212.1,699.3 211.1,697.7 210.0,698.1 208.1,696.7 206.5,697.7 M209.7,707.4 211.8,709.1 213.7,709.4 215.8,708.6 M212.7,676.6 211.5,675.9 209.9,675.0 M226.3,692.8 226.8,694.2 228.0,695.4 229.0,694.8 M220.5,686.1 220.9,684.2 222.9,683.6 222.3,681.1 221.8,679.1 222.7,677.0 M219.2,700.5 220.2,698.5 221.7,697.7 223.0,699.3 224.1,700.1 226.4,698.4 M209.3,693.2 208.3,693.2 205.8,692.7 203.1,693.7 203.1,695.2 M217.2,697.4 217.6,695.7 217.1,693.0 M215.2,683.2 216.5,685.2 217.7,684.5 216.8,682.1 215.3,682.0 215.0,683.5 M220.5,705.1 223.1,704.0 222.7,701.1 222.3,699.8 M211.1,674.2 213.7,672.8 213.2,671.8 212.2,671.8 M219.8,700.6 221.0,699.9 222.6,697.5 222.1,696.3 M223.9,685.6 223.5,688.6 221.1,688.2 220.2,689.2 220.9,690.8 220.6,691.8 M215.0,703.1 217.6,704.1 218.3,702.4 216.2,701.4 215.0,699.8 213.9,700.0 M222.0,695.0 221.0,697.1 219.7,699.7 217.2,701.0 215.8,700.0 215.4,698.6 M210.9,702.2 208.3,701.1 207.1,699.9 205.7,699.4 206.0,696.8 208.3,695.4 M209.2,706.9 211.5,708.3 212.9,709.1 212.5,710.2 210.0,710.0 M204.6,707.1 203.2,705.8 203.9,704.8 205.0,704.7 205.9,703.8 M224.3,691.4 222.4,691.2 221.4,691.6 220.2,690.5 219.0,691.4 M221.8,679.8 220.4,677.9 220.1,676.3 220.5,674.8 222.3,673.2 223.1,673.9 M208.6,699.3 209.2,696.6 210.7,696.4 212.6,696.1 M224.4,673.6 222.1,673.3 220.9,671.4 221.6,670.0 M205.0,714.2 207.3,715.8 210.0,715.0 213.0,715.2 M221.6,700.7 220.2,701.9 219.0,703.1 220.1,704.5 220.4,706.4 220.5,707.8 M225.0,692.7 224.8,690.8 226.4,690.5 227.3,689.7 227.9,688.6 M208.2,685.9 207.2,686.0 206.6,687.1 207.0,689.3 M219.2,687.5 221.9,687.0 223.5,687.6 224.7,688.6 M226.9,681.6 228.2,681.1 227.8,679.1 M218.6,706.7 217.2,709.2 215.1,708.0 M805.5,591.1 803.9,590.3 803.1,588.5 M791.2,616.2 791.9,613.4 790.5,611.0 789.7,609.5 M805.4,600.0 805.4,597.6 804.7,595.0 M804.1,610.5 802.5,608.0 804.3,606.8 M799.8,576.5 798.2,574.2 796.9,574.0 796.1,575.0 M798.6,638.1 799.3,639.8 799.5,640.8 M792.3,640.3 790.5,641.4 789.1,642.8 M805.9,565.7 806.5,567.8 807.6,568.1 808.4,566.6 M795.6,590.7 794.7,591.6 794.3,593.2 791.9,593.3 790.6,593.7 790.8,594.9 M803.3,623.4 804.3,623.7 805.1,621.8 M801.5,579.4 799.6,579.5 798.5,579.0 798.7,578.0 M792.0,599.3 792.3,600.9 793.2,602.1 M799.9,592.8 801.1,594.2 802.3,593.9 805.2,593.5 805.6,594.6 806.3,596.5 M796.9,638.8 797.8,639.5 799.9,640.5 800.6,639.3 802.7,640.4 803.2,642.9 M805.1,586.8 807.0,588.7 808.8,588.1 809.1,586.9 809.7,585.1 M792.2,648.3 792.4,647.1 791.8,644.8 790.7,645.1 788.7,647.0 M805.9,591.6 807.3,593.5 805.8,595.0 806.2,597.0 806.5,598.6 807.8,600.2 M798.6,582.4 798.2,584.2 797.4,585.3 796.2,586.3 M801.9,628.7 800.2,626.4 799.3,624.9 797.6,624.3 796.1,622.1 794.7,620.1 M794.4,590.5 793.0,590.7 791.6,592.8 789.6,593.9 787.2,594.1 M805.3,611.5 806.0,610.2 805.9,609.0 807.9,607.4 809.2,606.3 M800.8,647.2 800.7,645.9 798.7,645.0 797.9,643.4 795.6,644.2 795.2,645.1 M795.6,575.7 794.3,574.9 791.8,573.2 M795.1,578.9 793.6,578.0 792.8,578.7 791.4,578.6 789.3,578.0 M800.8,642.7 800.3,644.8 800.7,645.8 802.5,647.2 803.6,648.9 805.0,648.6 M793.6,601.1 795.1,603.7 797.7,604.3 799.5,603.0 M802.3,639.0 802.3,640.0 801.3,641.7 800.3,642.6 798.5,643.3 797.9,642.2 M805.2,655.2 808.0,654.9 810.0,653.1 811.2,653.0 811.7,654.3 813.3,653.6 M796.2,649.5 795.1,648.7 793.5,647.6 790.8,647.0 788.7,648.8 M794.4,593.3 793.3,593.2 793.1,591.5 790.9,590.9 789.3,590.4 M793.9,642.3 796.2,643.9 797.2,643.6 797.5,645.0 797.8,646.7 798.9,647.5 M800.7,576.8 800.0,575.5 802.1,574.3 M800.2,608.8 799.0,608.9 798.4,610.1 796.4,610.3 M800.6,635.1 798.7,634.5 797.4,632.4 795.9,632.7 795.0,633.8 M805.5,636.8 808.0,637.2 809.1,636.7 810.6,638.0 M797.9,576.8 799.2,574.9 801.0,573.5 M797.2,575.2 795.6,573.1 795.0,572.3 M804.0,603.3 805.6,601.1 804.7,598.5 803.9,597.8 802.7,597.6 801.9,599.6 M793.3,587.8 795.6,589.7 797.9,590.9 M793.1,650.2 792.5,649.1 794.1,647.8 796.7,646.8 796.9,644.5 M796.4,636.6 795.7,635.3 793.1,634.2 791.9,633.7 M802.2,605.4 804.2,607.0 804.5,609.7 805.3,610.9 807.4,612.1 808.4,613.6 M797.4,575.8 798.2,577.0 796.5,578.5 796.4,580.7 794.9,581.0 794.0,581.9 M793.1,618.1 793.4,617.2 794.9,616.8 796.3,618.3 797.3,620.4 M793.3,644.0 795.0,643.4 797.9,644.1 798.7,643.2 799.7,641.5 798.9,640.3 M803.6,598.3 803.4,601.0 805.2,602.2 807.3,601.2 M796.7,570.5 799.4,569.7 800.6,569.9 803.3,569.8 M805.8,621.7 804.9,620.1 804.3,619.2 804.1,616.8 M790.8,614.0 788.6,613.9 788.3,612.5 M803.0,586.3 804.7,587.2 807.3,587.5 M801.0,572.0 803.5,572.4 805.5,572.4 M794.3,591.2 794.3,593.0 793.4,595.4 791.2,596.4 789.2,596.7 788.0,595.7 M802.9,648.2 804.6,646.9 806.2,645.5 806.3,643.4 M803.6,568.7 802.8,568.0 801.8,566.0 803.0,564.4 802.1,563.1 802.5,560.6 M799.8,624.3 801.2,625.8 802.3,625.8 802.4,624.7 800.9,624.3 799.9,622.1 M793.4,636.0 795.6,635.6 797.9,637.3 799.5,636.2 M796.8,603.7 798.1,604.1 800.5,604.7 802.5,604.3 M798.0,641.3 795.2,641.9 794.8,643.6 793.8,645.0 792.8,645.8 793.1,647.4 M803.1,572.8 803.4,571.0 805.0,570.9 M798.6,629.4 800.6,629.5 801.7,631.9 M794.5,637.8 795.8,637.1 795.4,636.0 M795.5,585.2 795.1,588.2 794.4,590.4 M798.3,581.7 799.7,581.0 800.7,580.8 802.3,580.2 804.5,579.8 M797.2,570.1 796.3,570.9 794.8,572.3 793.0,572.3 790.4,573.2 M804.1,656.3 805.4,658.7 804.8,659.8 804.1,660.8 803.0,660.8 M804.7,599.4 807.1,600.6 809.0,599.4 M797.5,601.4 798.5,599.8 798.9,597.5 800.8,596.1 802.0,594.4 802.9,593.3 M805.1,653.9 804.0,653.6 803.2,652.7 802.5,651.5 800.4,650.1 800.9,648.3 M794.0,618.9 795.2,620.8 796.5,620.8 798.0,621.0 M792.0,642.6 792.2,644.1 792.7,645.0 793.8,646.4 795.9,644.7 M805.3,583.0 804.7,584.8 804.6,587.1 M803.2,634.6 801.2,632.8 799.3,633.6 798.5,635.2 799.8,637.3 800.5,639.7 M799.3,618.7 800.9,618.2 801.7,619.8 803.3,619.5 805.9,620.8 M799.6,624.8 801.3,623.7 803.9,622.8 805.2,623.1 806.6,621.1 808.9,620.1 M800.0,579.1 799.5,580.1 796.9,580.1 796.7,582.0 797.7,582.3 797.7,584.8 M797.1,569.3 795.5,570.8 795.6,572.4 795.8,574.2 M799.6,609.6 800.4,611.1 801.5,610.6 800.9,608.8 802.5,607.0 804.6,608.7 M798.5,616.9 800.2,617.7 799.4,619.6 798.9,620.6 800.5,622.2 801.9,623.5 M801.2,606.2 798.5,605.6 797.4,604.5 798.7,602.2 800.1,602.6 M798.4,597.5 798.9,599.5 797.0,600.4 M804.5,615.5 807.1,614.7 809.2,615.1 M793.5,647.9 793.3,648.9 794.5,651.4 797.0,650.7 796.5,648.4 M802.4,583.9 800.0,583.8 800.0,581.3 800.4,580.1 M802.5,639.8 803.9,641.0 806.4,641.5 807.8,639.9 810.7,640.0 810.8,638.4 M796.9,651.1 798.5,652.5 797.9,653.4 M793.9,576.0 794.5,576.9 793.0,579.1 791.8,581.3 790.7,583.7 M790.2,646.4 791.2,646.5 791.9,649.0 794.5,649.0 795.9,650.7 M803.0,655.8 801.4,655.3 799.9,653.6 800.7,651.6 M797.8,574.0 797.4,571.7 797.9,570.5 800.4,569.9 M793.1,635.3 792.0,635.7 790.9,636.6 791.1,639.5 M795.2,573.1 794.1,571.7 793.3,570.9 M802.2,629.7 803.1,628.9 803.9,627.5 803.4,625.1 801.9,624.4 M793.1,644.1 790.9,643.6 790.3,644.7 791.8,645.9 793.6,646.7 795.0,646.9 M800.6,622.7 800.8,620.7 799.9,618.2 801.4,617.2 M801.3,649.8 800.4,649.0 797.8,648.6 795.4,650.0 793.3,649.2 M799.0,620.8 799.1,623.5 800.0,626.4 802.6,625.7 803.9,626.9 M802.9,581.6 805.4,581.6 807.2,583.1 809.1,581.7 810.0,583.0 811.8,583.0 M799.9,627.0 799.0,627.8 800.0,629.6 800.5,631.4 798.8,631.9 797.4,633.2 M798.6,613.2 796.6,615.4 795.6,615.5 793.5,615.7 791.1,614.7 M797.0,589.7 797.9,589.2 797.1,587.0 797.6,585.3 800.2,585.4 801.2,584.8 M798.0,624.0 799.6,624.1 800.2,625.8 M801.1,596.7 801.7,595.5 803.6,595.3 805.0,596.3 805.0,598.5 M799.8,598.8 798.1,599.2 797.3,600.4 795.2,600.4 M794.9,620.6 794.2,623.3 792.0,624.2" fill="none" stroke="#000" stroke-width="1.2" stroke-linejoin="round"/>
<path d="M310.1,60.0 314.5,60.0 316.3,65.3 318.9,70.5 323.3,71.4 322.4,74.1 319.8,75.8 320.7,81.1 323.3,86.4 324.2,94.3 322.4,96.0 319.8,89.0 317.2,82.8 314.5,77.6 314.2,70.5 311.9,65.3Z M299.3,59.8 303.7,56.2 308.1,55.4 313.4,57.1 315.1,62.4 316.9,67.7 321.3,71.2 323.9,72.1 323.0,74.7 319.5,75.6 320.4,80.8 323.0,87.9 323.9,94.9 322.1,96.3 319.5,89.6 316.0,84.4 313.9,77.3 312.5,70.3 310.4,64.1 308.1,58.9 304.6,59.8 301.9,63.3 299.3,61.5Z M368.4,260.6 372.8,258.0 376.3,259.8 379.8,263.3 385.1,265.0 390.0,266.8 395.6,269.4 400.9,273.8 403.5,278.2 400.9,277.3 395.6,273.8 390.0,271.2 383.3,269.4 378.0,265.9 372.8,262.4 369.3,262.9Z M438.5,377.6 439.7,374.5 442.2,370.8 445.3,367.7 447.1,363.4 449.6,364.0 451.4,365.9 449.6,368.9 447.1,371.4 444.7,374.5 444.1,376.9 441.0,377.9Z M424.1,413.3 425.6,415.1 426.8,417.6 428.7,417.0 428.0,420.0 428.7,425.0 431.1,428.7 431.7,433.6 429.9,434.2 428.0,431.1 426.2,426.2 425.0,420.0Z M526.3,502.2 528.1,503.1 529.8,507.5 532.5,505.7 534.2,501.3 535.1,506.6 532.5,512.7 529.8,519.8 530.7,524.1 533.4,526.8 536.9,525.0 534.2,529.4 535.1,533.8 533.4,538.2 529.8,537.3 528.1,532.9 525.4,531.2 527.6,528.5 527.2,524.1 525.4,518.9 526.3,512.7 528.1,508.3Z M540.2,602.2 542.8,603.9 544.6,611.8 549.9,612.7 554.3,609.2 556.0,603.1 557.8,603.9 556.9,610.1 563.1,611.0 563.6,613.6 557.8,614.5 552.5,616.2 548.1,619.8 542.0,618.0 541.1,611.8Z M612.0,289.5 614.8,285.8 617.5,290.4 620.3,286.8 623.1,290.4 622.1,294.1 627.7,293.2 624.0,297.8 619.4,301.5 617.5,305.2 613.8,308.0 611.1,311.7 607.4,313.5 604.6,308.9 608.3,307.1 612.0,303.4 613.8,298.8 612.9,294.1Z M784.3,728.0 787.0,735.0 791.4,739.4 795.7,743.8 796.6,750.0 794.9,755.2 790.5,754.4 787.0,748.2 784.3,743.8 785.2,736.8Z M769.4,791.3 774.7,789.5 779.1,790.4 779.1,793.0 769.4,793.0Z M123.9,654.7 130.5,652.0 135.8,654.7 136.6,661.3 133.1,666.5 126.5,668.7 121.8,663.9Z M144.5,697.6 150.3,695.5 154.2,700.8 154.2,706.1 148.9,710.0 144.5,714.0 141.0,711.4 142.4,706.1 147.1,703.4Z M42.2,681.0 47.5,681.8 51.4,687.6 47.5,688.9 43.5,685.0Z M59.3,685.0 63.3,692.9 67.2,699.5 73.8,703.4 83.0,704.8 84.4,708.7 76.4,708.7 67.2,706.1 62.0,700.8 58.0,694.2Z" fill="#2c4868" stroke="none"/>
<path d="M779.1,671.8 784.3,670.9 788.7,671.8 787.0,677.0 789.6,682.3 794.0,686.7 793.1,692.8 795.7,699.0 795.7,703.4 793.1,707.8 788.7,709.5 789.6,713.9 790.5,717.5 786.1,720.1 784.3,722.7 785.2,728.0 M784.5,653.7 788.0,655.5 787.1,662.5 788.0,669.5 785.4,674.7" fill="none" stroke="#000" stroke-width="4" stroke-linejoin="round"/>
<path d="M779.1,671.8 784.3,670.9 788.7,671.8 787.0,677.0 789.6,682.3 794.0,686.7 793.1,692.8 795.7,699.0 795.7,703.4 793.1,707.8 788.7,709.5 789.6,713.9 790.5,717.5 786.1,720.1 784.3,722.7 785.2,728.0 M784.5,653.7 788.0,655.5 787.1,662.5 788.0,669.5 785.4,674.7" fill="none" stroke="#004364" stroke-width="2" stroke-linejoin="round"/>
<path d="M181.9,5.8 189.8,15.8 196.4,29.0 200.4,42.2 200.9,60.6 200.4,79.1 197.7,94.9 192.4,105.4 188.5,116.0 184.5,131.8 176.6,145.0 171.4,160.8 163.4,176.6 155.5,189.8 147.6,200.4 145.0,205.6 147.6,214.1 M241.2,6.6 232.0,14.5 228.8,23.7 228.0,39.5 226.7,52.7 222.8,62.0 210.9,68.5 200.9,71.2 M241.2,6.6 247.8,15.8 253.1,25.0 261.0,34.3 263.6,44.8 263.6,52.7 271.5,59.3 287.3,60.6 300.0,55.4 M195.1,214.1 208.3,200.4 224.1,188.5 242.5,180.6 259.7,174.5 M260.0,36.9 264.0,50.1 270.5,59.3 286.4,60.6 299.5,54.0 312.7,56.7 325.9,64.6 339.1,76.4 352.3,85.7 365.4,93.6 378.6,105.4 391.8,116.0 405.0,131.8 M472.2,5.8 472.2,21.1 468.3,36.9 460.4,48.8 444.5,56.7 434.0,63.3 428.7,76.4 422.1,90.9 415.5,102.8 410.3,113.4 407.6,123.9 405.0,131.8 M379.9,109.4 394.4,100.2 412.9,101.5 428.7,106.8 435.3,116.0 437.2,129.2 434.0,142.4 428.7,155.5 418.2,162.1 402.4,166.1 386.5,164.8 373.4,156.9 366.8,145.0 365.4,131.8 370.7,118.6 379.9,109.4 M260.0,174.8 281.1,166.1 302.2,160.8 325.9,156.9 347.0,150.3 365.4,146.3 383.9,141.0 397.1,137.1 405.0,131.8 M405.0,131.8 418.2,134.4 434.0,133.1 449.8,131.8 470.9,135.8 484.1,138.4 497.3,137.1 513.1,137.1 523.6,142.4 536.8,151.6 550.0,159.5 560.0,158.2 M405.0,131.8 405.0,147.6 401.0,163.4 397.1,179.3 397.1,197.7 398.4,214.1 M405.0,131.8 415.5,147.6 428.7,159.5 439.3,171.4 445.9,184.5 455.1,195.1 464.3,205.6 470.9,214.1 M588.0,5.8 587.2,21.1 593.8,36.9 603.0,46.1 604.4,60.6 600.4,76.4 604.4,94.9 596.4,104.1 589.9,110.7 596.4,123.9 607.0,134.4 612.3,147.6 621.5,147.6 M520.0,139.7 535.8,150.3 551.6,158.2 567.5,158.2 583.3,160.8 596.4,159.5 612.3,151.6 622.8,147.6 636.0,150.3 649.2,147.6 659.7,142.4 M659.7,142.4 672.9,134.4 688.7,126.5 704.5,117.3 720.4,109.4 736.2,98.9 752.0,90.9 767.8,83.0 783.6,77.8 796.8,73.8 806.0,71.2 M659.7,142.4 667.6,150.3 672.9,158.2 674.2,168.7 683.4,172.7 686.1,181.9 691.4,188.5 701.9,189.8 715.1,188.5 730.9,185.9 746.7,181.9 762.5,179.3 778.3,175.3 794.2,172.7 806.0,175.3 M715.1,188.5 720.4,197.7 728.3,208.3 732.2,214.1 M596.4,159.5 585.9,171.4 575.4,181.9 564.8,195.1 554.3,208.3 550.3,214.1 M6.6,256.7 34.3,255.4 52.7,254.0 71.2,247.5 89.6,242.2 105.4,235.6 121.3,229.0 137.1,225.0 152.9,223.7 160.8,226.4 M160.8,222.4 172.7,221.6 175.3,226.4 174.0,231.1 162.1,231.6 160.8,226.4 160.8,222.4 M160.8,226.4 152.9,223.7 148.9,215.8 145.5,207.9 146.3,200.0 M175.3,225.0 184.5,219.8 197.7,211.9 210.9,204.0 218.8,200.0 M164.8,231.6 166.1,244.8 168.7,260.6 172.7,279.1 171.4,294.9 171.4,310.7 174.0,326.5 177.9,345.0 181.9,363.4 183.2,379.3 181.9,392.4 176.6,405.6 171.4,414.1 M398.4,200.0 397.6,215.8 397.1,234.3 395.0,252.7 395.8,268.5 397.1,287.0 397.1,305.4 399.7,323.9 402.4,342.4 402.4,356.1 M560.0,205.3 544.7,218.5 528.9,230.3 513.1,235.6 502.5,242.2 495.9,255.4 492.0,268.5 484.1,284.4 473.5,302.8 463.0,318.6 452.4,331.8 439.3,342.4 426.1,352.9 424.0,356.1 M460.4,200.0 470.9,210.5 478.8,223.7 486.7,233.0 502.5,238.2 513.1,235.6 M455.1,364.0 460.4,364.8 478.8,362.1 497.3,359.5 513.1,355.5 528.9,352.9 544.7,351.6 560.0,350.3 M356.0,401.4 347.0,401.7 336.4,408.3 331.2,414.1 M520.0,238.2 530.5,244.8 537.1,255.4 539.8,268.5 543.7,281.7 546.4,292.3 554.3,305.4 559.5,316.0 568.8,326.5 575.4,337.1 582.0,347.6 583.3,351.6 M520.0,238.2 530.5,229.0 543.7,218.5 554.3,207.9 559.5,200.0 M584.6,293.6 578.0,302.8 574.0,313.4 571.4,323.9 570.1,329.2 M583.3,351.6 588.5,342.4 596.4,331.8 609.6,322.6 625.4,316.0 641.3,306.8 657.1,297.5 672.9,288.3 688.7,281.7 704.5,276.4 717.7,269.9 728.3,256.7 738.8,254.0 749.3,247.5 762.5,239.5 778.3,233.0 794.2,227.7 806.0,222.4 M721.7,200.0 730.9,210.5 738.8,217.1 749.3,221.1 755.9,231.6 759.9,242.2 763.8,258.0 767.8,271.2 770.4,281.7 M738.8,254.0 741.4,263.3 752.0,271.2 762.5,279.1 770.4,281.7 781.0,289.6 791.5,298.9 802.1,305.4 806.0,308.1 M583.3,351.6 599.1,352.9 609.6,358.2 625.4,362.1 643.9,364.8 665.0,367.4 686.1,370.0 704.5,371.4 725.6,372.7 746.7,372.7 757.3,370.0 767.8,363.4 781.0,355.5 794.2,347.6 806.0,339.7 M583.3,351.6 572.7,348.9 559.5,350.3 543.7,352.9 530.5,352.9 520.0,355.5 M574.0,342.4 579.3,335.8 587.2,334.4 592.5,337.1 593.8,347.6 592.5,355.5 587.2,360.8 579.3,359.5 575.4,354.2 574.0,342.4 M583.3,351.6 576.7,360.8 568.8,368.7 559.5,381.9 551.6,395.1 546.4,408.3 543.7,414.1 M583.3,351.6 589.9,363.4 596.4,374.0 603.0,387.2 608.3,400.4 614.9,410.9 617.5,414.1 M6.6,461.2 26.4,462.7 47.5,465.4 65.9,469.1 84.4,475.1 97.5,476.4 113.4,473.8 131.8,473.3 143.7,476.4 151.6,480.4 168.7,479.1 184.5,477.8 200.4,475.9 216.2,476.4 237.3,475.1 258.3,473.8 M177.9,400.0 171.4,413.2 164.8,426.4 160.8,439.5 159.5,452.7 155.5,465.9 151.6,479.1 M151.6,480.4 145.0,492.3 137.1,508.1 133.1,523.9 130.5,542.4 130.5,563.4 129.2,584.5 126.5,600.4 126.0,614.1 M258.3,473.8 251.8,487.0 246.5,502.8 237.3,516.0 234.6,526.5 226.7,537.1 218.8,547.6 214.9,560.8 214.9,574.0 210.9,587.2 206.9,600.4 201.7,614.1 M258.4,473.8 260.0,472.5 275.8,467.2 289.0,459.3 302.2,446.1 315.4,433.0 328.5,419.8 339.1,409.2 347.0,404.0 M428.7,455.9 435.3,464.6 439.3,471.2 M439.3,471.2 435.3,484.4 426.1,502.8 415.5,518.6 403.7,537.1 391.8,552.9 378.6,568.7 362.8,581.9 344.4,592.4 325.9,600.4 312.7,605.6 307.5,614.1 M439.3,471.2 449.8,473.3 463.0,471.2 478.8,464.6 494.6,456.7 510.4,447.5 523.6,431.6 534.2,418.5 544.7,407.9 548.7,400.0 M608.3,400.0 614.9,409.2 625.4,418.5 633.4,426.4 636.0,431.6 633.4,436.9 M633.4,436.9 630.7,452.7 629.4,471.2 629.4,489.6 630.7,505.4 634.7,521.3 641.3,534.4 646.5,547.6 649.2,560.8 653.1,576.6 657.1,592.4 661.0,605.6 663.7,614.1 M636.0,429.0 643.9,439.5 654.4,448.8 667.6,455.4 683.4,460.6 704.5,465.9 725.6,468.5 744.1,471.2 759.9,472.5 773.1,479.1 786.3,483.0 798.1,485.7 806.0,493.6 M625.4,418.5 630.7,426.4 632.0,434.3 633.4,436.9 M547.7,400.0 543.7,409.2 533.2,418.5 525.3,429.0 520.0,435.6 M806.0,537.1 802.1,547.6 801.5,558.2 798.1,571.4 791.5,584.5 786.3,595.1 784.9,605.6 786.3,614.1 M6.6,661.3 21.1,657.3 36.9,649.4 52.7,645.5 68.5,643.3 87.0,643.3 105.4,640.7 126.5,639.7 147.6,640.2 158.2,642.8 168.7,649.4 179.3,654.7 192.4,656.0 208.3,652.0 224.1,648.1 239.9,646.8 253.1,645.5 263.6,643.3 M87.0,643.3 92.3,654.7 97.5,663.9 108.1,670.5 121.3,673.1 131.8,674.4 142.4,679.7 152.9,682.4 159.5,685.0 166.1,681.0 172.7,674.4 179.3,666.5 184.5,657.3 187.2,645.5 191.1,632.3 196.4,619.1 201.7,608.5 206.9,598.0 M126.5,598.0 126.5,613.8 127.1,629.6 129.2,640.2 130.5,650.7 134.4,661.3 131.8,671.8 M6.6,617.8 11.9,624.4 13.2,637.5 10.5,650.7 9.2,661.3 M260.0,642.8 275.8,641.0 291.6,637.5 304.8,629.6 307.5,613.8 310.1,607.2 M304.8,629.6 312.7,624.4 328.5,624.4 344.4,628.3 357.5,633.6 368.1,637.5 378.6,637.5 389.2,632.3 397.1,624.4 407.6,620.4 423.4,617.8 444.5,616.5 460.4,620.4 478.8,615.1 497.3,616.5 515.7,615.9 521.0,617.0 M520.0,617.8 535.8,624.4 551.6,632.3 567.5,637.5 585.9,640.2 607.0,640.2 625.4,642.8 643.9,645.5 662.4,649.4 678.2,652.0 691.4,654.7 704.5,660.0 720.4,661.3 738.8,660.0 757.3,658.1 770.4,656.0 783.6,654.7 M658.4,598.0 662.4,608.5 670.3,621.7 680.8,634.9 691.4,646.8 701.9,657.3 709.8,667.9 716.4,682.4 721.7,698.2 728.3,711.4 736.2,721.9 742.8,735.1 746.7,750.9 749.3,766.7 753.3,782.5 754.6,791.8 M784.9,598.0 786.3,613.8 787.6,629.6 787.6,642.8 783.6,646.8 779.7,654.7 781.0,663.9 786.3,666.5 792.8,665.2 796.8,674.4 802.1,685.0 806.0,695.5 M401.6,356.0 402.2,362.2 403.4,368.3 402.8,373.2 405.3,381.2 403.4,386.8 403.4,394.2 405.3,400.3 408.3,405.3 409.0,410.2 411.4,416.3 415.1,422.5 419.4,429.9 421.3,436.0 423.7,442.2 426.2,449.6 428.7,456.0 M356.0,401.6 363.4,399.7 368.3,398.5 374.5,395.4 380.6,391.7 388.0,385.6 396.6,383.1 405.3,381.2 M388.0,385.6 391.7,379.4 394.2,374.5 397.9,370.8 402.2,367.7 403.4,368.3 M405.3,381.2 409.0,375.7 411.4,371.4 413.9,367.1 415.1,362.2 418.8,358.5 423.1,356.0 M410.2,368.3 415.1,367.7 420.0,365.9 425.0,364.6 432.4,362.8 441.0,362.2 449.6,362.8 456.0,363.6" fill="none" stroke="#8a6e04" stroke-width="1" stroke-linejoin="round"/>
<path d="M5.3,105.4 154.7,105.4 156.4,110.7 160.8,114.2 160.3,121.3 157.3,125.7 152.9,130.1 147.6,133.6 144.1,138.8 141.5,142.0 M130.0,105.3 154.6,105.3 156.4,111.0 161.3,113.6 161.3,120.6 159.0,125.0 154.6,129.4 149.3,132.1 144.9,137.3 140.5,144.4 137.9,149.3 187.1,149.3 M209.7,104.6 265.0,105.1 311.6,104.9 312.5,98.4 310.7,92.3 309.8,88.8 325.7,90.5 326.5,91.7 358.2,91.7 400.0,91.0 M390.0,91.4 419.9,90.5 460.3,93.1 504.2,94.6 548.2,94.9 590.0,96.3 M580.0,96.6 636.6,97.0 721.5,96.6 788.2,94.6 806.0,98.6 M636.6,95.0 648.7,88.9 660.8,85.9 676.0,82.9 678.0,76.8 683.1,73.2 692.2,71.1 697.2,68.7 697.2,62.7 701.3,59.6 707.3,55.6 707.7,49.5 717.4,44.5 729.6,38.4 741.7,33.3 751.8,25.3 759.9,18.2 764.9,13.1 757.9,11.1 751.8,10.1 748.8,6.5 M764.9,13.1 761.9,18.2 765.9,22.2 767.0,28.3 774.0,33.3 779.1,37.4 784.1,41.4 792.2,41.4 800.3,38.4 806.0,34.4 M787.2,94.6 783.1,101.1 782.1,109.1 780.1,115.2 782.1,119.2 774.0,117.2 769.0,121.3 763.9,127.3 759.9,135.4 755.8,139.5 747.8,138.4 741.7,137.4 735.6,139.5 730.6,141.1 M763.3,130.0 761.5,134.6 756.9,138.9 751.3,138.3 745.8,135.5 734.7,138.3 729.2,142.9 725.5,149.4 719.0,153.1 716.3,149.4 716.3,144.8 712.6,143.8 708.0,146.6 703.3,150.3 701.5,154.9 696.0,154.0 693.2,157.7 691.3,164.1 687.7,168.8 682.1,167.8 677.5,169.7 670.1,174.3 662.7,178.9 655.4,183.5 648.9,188.1 640.6,186.3 629.5,188.1 620.3,192.7 613.8,198.3 610.1,202.9 609.2,209.3 606.5,214.0 600.0,216.4 M611.6,200.0 610.7,207.0 608.0,212.3 604.5,215.8 597.5,216.7 595.7,214.1 591.4,216.7 589.6,226.4 588.4,239.0 M143.2,238.1 200.0,238.1 M190.0,238.1 299.8,238.1 335.9,237.4 390.0,237.6 420.2,238.0 M420.0,238.1 471.0,238.7 525.4,239.2 620.0,239.2 M600.0,239.8 679.3,238.5 M679.3,238.3 692.3,233.3 703.3,230.6 710.7,226.9 719.9,224.1 729.2,221.3 731.9,219.5 732.9,222.3 740.2,220.4 747.6,220.1 760.5,220.4 784.5,222.3 805.8,223.7 M679.3,238.9 677.5,242.6 672.0,247.2 667.4,251.8 662.7,257.3 660.9,262.9 663.7,267.5 669.2,272.1 M660.9,260.0 660.9,264.6 668.3,270.1 675.7,275.7 683.0,283.1 688.6,284.9 695.0,284.0 696.9,290.4 701.5,296.9 705.2,303.4 706.1,310.7 710.7,316.3 715.3,322.7 718.1,329.2 725.5,334.7 732.9,339.3 738.4,344.0 743.0,349.5 745.8,356.9 750.4,362.4 756.9,365.2 760.5,369.8 765.2,373.5 767.6,377.2 765.2,382.7 767.9,387.3 772.5,390.1 773.5,394.7 778.1,397.5 779.0,402.1 M771.6,390.0 774.4,395.5 779.0,398.3 779.9,402.9 786.4,407.5 792.8,410.3 797.5,414.0 798.4,419.5 801.1,426.0 803.9,431.5 804.8,438.9 805.8,443.5 M299.8,238.1 302.5,243.1 306.9,246.6 307.4,251.0 305.1,270.3 302.5,298.4 299.8,323.0 297.6,342.0 M299.0,330.0 295.4,365.1 291.1,400.3 287.5,435.4 284.0,472.0 M284.9,460.0 282.3,481.1 279.6,509.2 280.5,530.3 281.4,565.4 282.8,602.0 M282.8,580.0 284.0,606.4 284.9,632.7 285.8,649.4 M492.4,239.5 497.3,270.3 502.6,298.4 507.9,326.5 510.5,342.0 M508.4,330.0 513.1,356.4 518.4,388.0 522.8,414.4 525.4,430.2 527.2,435.4 529.0,442.5 531.6,449.5 535.1,455.7 538.1,460.9 539.5,467.1 539.2,472.0 M537.4,460.0 539.5,467.0 537.4,475.8 543.0,479.3 545.7,482.8 540.4,486.4 535.1,490.8 533.4,498.7 533.4,503.9 532.5,512.7 530.7,521.5 532.5,530.3 533.4,538.2 534.2,546.1 531.6,554.9 530.7,565.4 529.8,576.0 532.5,583.0 536.0,590.1 537.4,594.4 539.5,600.6 M420.0,594.4 537.4,594.4 M344.3,594.4 422.0,594.4 M344.3,594.4 342.9,600.2 341.1,605.5 344.7,610.8 348.2,616.0 353.4,619.5 358.7,623.1 359.6,629.2 356.1,634.5 356.1,639.8 358.7,644.1 363.1,645.0 361.4,649.4 357.0,651.2 355.2,654.7 M531.4,560.0 529.7,567.0 529.7,575.8 534.1,582.8 536.7,590.8 538.5,597.8 541.1,602.2 M547.2,620.3 590.3,622.4 634.2,625.0 678.2,627.7 720.0,630.7 M720.0,630.7 745.0,632.5 744.2,631.9 745.1,638.0 746.9,645.0 747.7,650.2 757.4,651.1 758.2,643.2 760.0,634.5 759.1,624.0 757.4,617.0 760.0,611.7 767.0,610.0 770.5,612.6 781.0,615.2 786.2,617.0 795.0,618.7 M690.0,628.7 707.5,630.1 725.0,631.0 744.2,631.9 M44.8,594.3 186.3,594.3 183.7,600.8 181.0,607.9 177.5,615.8 178.4,625.4 181.0,634.2 186.3,641.3 190.7,648.3 192.4,655.3 194.2,662.0 M190.0,647.7 192.6,653.8 195.3,662.6 197.0,667.0 M5.3,415.5 78.2,415.5 M201.8,6.2 202.6,12.3 207.0,19.3 208.4,26.4 205.3,29.9 201.8,32.5 202.1,36.9 206.2,39.5 207.9,45.7 212.3,51.8 213.2,56.2 217.6,59.8 221.1,58.0 222.0,55.4 218.5,54.5 216.7,57.1 220.2,60.6 226.4,58.0 231.6,61.5 232.5,68.5 229.0,73.8 227.2,78.2 230.8,80.8 229.0,83.5 226.4,86.1 228.1,90.5 224.6,95.8 221.1,99.3 216.7,95.8 214.1,92.3 211.4,98.4 209.7,104.6 207.0,107.2 203.5,105.4 200.9,102.8 M226.4,58.0 229.9,51.0 235.1,43.9 240.4,40.1 246.6,39.5 252.7,43.1 259.8,46.6 266.8,49.2 272.1,52.7 277.3,54.1 281.7,51.0 283.5,45.7 280.8,39.5 277.3,35.1 277.3,29.0 280.8,23.7 287.9,22.0 295.8,19.3 303.7,17.6 309.0,16.7 309.8,11.4 307.2,7.9 305.1,6.2 M225.8,60.0 231.1,61.8 231.9,67.9 228.4,74.1 227.5,79.3 231.1,81.1 228.4,84.6 225.8,86.4 227.5,90.8 224.9,95.1 221.4,98.7 217.0,95.1 213.5,92.5 210.8,96.9 210.0,103.1 207.3,107.5 204.7,106.6 204.7,102.2 203.8,98.7 200.3,97.3 197.7,99.5 197.7,103.1 200.3,105.3 202.1,111.0 201.2,118.0 196.8,118.0 195.0,121.5 200.3,124.1 200.3,126.8 195.0,125.9 189.8,126.8 188.9,129.4 193.3,132.1 196.4,136.4 192.4,140.0 189.8,143.5 188.0,147.9 187.1,151.4 190.6,154.0 191.5,157.5 187.1,158.4 183.6,160.2 184.5,163.7 188.0,164.6 184.5,167.2 180.1,169.8 175.7,171.6 171.3,170.7 169.5,174.2 171.3,178.6 175.7,179.5 175.7,183.0 171.3,184.8 169.5,189.2 172.2,191.8 169.5,190.9 166.0,188.3 162.5,190.9 164.3,195.3 159.9,196.2 156.4,198.8 152.8,202.0 M193.3,130.0 196.8,137.0 191.6,140.5 188.0,145.8 186.3,150.2 189.8,152.8 192.4,157.2 188.9,159.9 184.5,160.8 185.4,164.3 181.9,167.8 177.5,170.4 172.2,171.3 169.6,173.9 171.4,178.3 175.7,180.1 174.0,182.7 169.6,186.2 172.2,189.8 171.4,192.4 167.0,189.8 162.6,190.6 159.9,194.1 164.3,199.4 162.6,202.9 158.2,200.3 154.7,201.2 153.8,203.8 158.2,205.6 155.5,209.1 154.7,214.4 159.1,217.0 159.9,220.5 157.3,222.3 159.1,225.8 154.7,226.7 152.0,231.1 151.1,234.6 145.9,234.6 143.2,237.2 144.1,241.6 147.6,244.2 145.9,249.5 141.5,251.3 137.1,252.1 133.6,247.8 130.9,247.8 130.1,251.3 132.7,254.8 130.1,256.5 126.5,255.7 125.7,260.1 130.1,260.9 130.9,265.3 126.5,266.2 123.0,268.8 126.5,272.0 M125.7,260.0 123.0,263.5 124.8,267.9 130.1,268.8 130.9,265.3 126.5,264.4 123.9,267.0 127.4,270.5 125.7,274.9 123.0,280.2 123.9,286.4 122.1,291.6 116.0,293.4 110.7,295.1 114.2,298.7 109.8,301.3 105.4,302.2 102.8,305.7 97.5,306.6 98.4,310.1 104.6,311.0 103.7,313.6 97.5,312.7 94.9,316.2 100.2,318.9 101.1,322.4 96.7,325.0 91.4,326.8 86.1,329.4 89.6,332.1 94.0,329.4 91.4,333.8 87.0,337.3 87.9,341.7 92.3,345.2 91.4,347.9 84.4,347.0 80.8,349.6 83.5,353.1 87.9,354.0 87.0,356.7 80.0,355.8 75.6,354.9 75.2,358.4 80.0,360.2 81.7,363.7 77.3,365.4 74.7,367.2 76.4,371.6 80.8,372.5 86.1,375.1 87.0,379.5 82.6,381.3 77.3,379.5 75.6,376.0 80.0,383.0 81.7,390.1 86.1,390.9 87.9,393.6 85.2,395.3 83.5,391.8 85.2,402.0 M85.2,390.0 87.9,392.6 85.2,395.3 84.4,401.4 80.0,403.2 76.4,405.8 79.1,409.3 82.6,412.0 79.1,415.5 76.4,419.9 77.3,424.3 80.8,424.3 82.6,419.0 86.1,421.6 86.1,427.8 81.7,431.3 79.1,434.8 80.8,439.2 86.1,441.0 91.4,446.2 90.5,450.6 84.4,451.5 80.8,449.8 81.7,453.3 86.1,455.9 83.5,459.4 85.2,463.8 89.6,465.6 94.0,463.8 94.9,468.2 97.5,472.6 100.2,471.7 99.3,476.1 94.9,478.8 92.3,483.1 89.6,485.8 83.5,485.8 79.1,489.3 79.1,493.7 84.4,495.4 89.6,493.7 90.5,490.2 87.0,491.9 87.9,497.2 84.4,499.8 80.0,499.8 82.6,502.5 85.2,505.1 81.7,507.8 77.3,509.5 73.8,514.8 70.3,518.3 65.9,519.2 64.1,523.6 67.7,525.3 71.2,524.4 72.1,527.1 68.5,528.8 63.3,530.6 62.4,532.0 M72.9,520.0 70.3,523.5 66.8,522.6 65.0,527.0 69.4,528.8 66.8,532.3 61.5,536.7 58.0,540.2 54.5,537.6 53.6,542.0 58.9,543.7 56.2,548.1 51.8,553.4 48.3,557.8 50.1,562.2 55.4,560.4 53.6,556.0 51.8,564.8 52.7,570.1 43.9,571.0 45.7,576.2 43.9,581.5 47.5,585.9 49.2,590.3 44.8,594.3" fill="none" stroke="#000" stroke-width="1.1" stroke-linejoin="round"/>
<path d="M416.40,247.51 A159.3,159.3 0 1 1 394.90,247.62" fill="none" stroke="#e6e6e6" stroke-width="1" shape-rendering="geometricPrecision"/>
<path d="M416.40,127.48 A279.2,279.2 0 1 1 394.90,127.54" fill="none" stroke="#e6e6e6" stroke-width="1" shape-rendering="geometricPrecision"/>
<path d="M416.40,7.62 A399.0,399.0 0 1 1 394.90,7.67" fill="none" stroke="#e6e6e6" stroke-width="1" shape-rendering="geometricPrecision"/>
<circle cx="406.5" cy="406.5" r="518.9" fill="none" stroke="#e6e6e6" stroke-width="1" shape-rendering="geometricPrecision"/>
<text x="396" y="10.9" font-family='Liberation Mono, DejaVu Sans Mono, monospace' font-size="11" fill="#ffff90" stroke="#ffff90" stroke-width="0.35" textLength="19.6" lengthAdjust="spacingAndGlyphs" text-rendering="geometricPrecision">313</text><text x="396" y="131" font-family='Liberation Mono, DejaVu Sans Mono, monospace' font-size="11" fill="#ffff90" stroke="#ffff90" stroke-width="0.35" textLength="19.6" lengthAdjust="spacingAndGlyphs" text-rendering="geometricPrecision">219</text><text x="396.4" y="251.1" font-family='Liberation Mono, DejaVu Sans Mono, monospace' font-size="11" fill="#ffff90" stroke="#ffff90" stroke-width="0.35" textLength="19.5" lengthAdjust="spacingAndGlyphs" text-rendering="geometricPrecision">125</text><text x="399.8" y="371.2" font-family='Liberation Mono, DejaVu Sans Mono, monospace' font-size="11" fill="#ffff90" stroke="#ffff90" stroke-width="0.35" textLength="12.6" lengthAdjust="spacingAndGlyphs" text-rendering="geometricPrecision">31</text>
<circle cx="406.5" cy="406.5" r="39.5" fill="none" stroke="#ff0000" stroke-width="1"/>
<path d="M445,401.5h1 M443,393.5h1 M437,381.5h1 M432,376.5h1 M428,374.5h1 M419,369.5h1 M393,369.5h1 M384,373.5h1 M379,377.5h1 M376,381.5h1 M373,384.5h1 M369,393.5h1 M367,401.5h1" stroke="#ffffff" stroke-width="1"/>
<path d="M502.5 28.5 H509.5" stroke="#f0a000" stroke-width="1" shape-rendering="crispEdges"/>
</svg></div>
<div id="legend"></div><div id="copy"></div>
<div class="panel" style="top:8px;height:318px"></div>
<div class="panel" style="top:333px;height:113px"></div>
<div class="panel" style="top:453px;height:349px"></div>
<div class="btn" style="left:819px;top:16px;width:58px;height:18px;background:#5e0000"></div>
<div class="btn" style="left:883px;top:16px;width:58px;height:18px;background:#333"></div>
<div class="btn" style="left:994px;top:16px;width:128px;height:18px;background:#333"></div>
<div class="btn" style="left:821px;top:64px;width:82px;height:16px;background:#606060;border-color:#f4f4f4 #e0e0e0 #c8c8c8 #f4f4f4;box-shadow:none"></div>
<div class="btn" style="left:931px;top:64px;width:82px;height:16px;background:#606060;border-color:#f4f4f4 #e0e0e0 #c8c8c8 #f4f4f4;box-shadow:none"></div>
<div class="btn" style="left:1041px;top:64px;width:82px;height:16px;background:#606060;border-color:#f4f4f4 #e0e0e0 #c8c8c8 #f4f4f4;box-shadow:none"></div>
<div class="hr" style="left:821px;top:217px;width:303px"></div>
<div class="bar" style="left:925px;top:227px"><i style="width:7px;background:#ff0000"></i></div>
<div class="bar" style="left:1028px;top:227px"><i style="width:14px;background:#90ccff"></i></div>
<div class="bar" style="left:925px;top:281px"><i style="width:18px;background:#f060a8"></i></div>
<div class="bar" style="left:1028px;top:281px"><i style="width:11px;background:#00f000"></i></div>
<div class="hr" style="left:1016px;top:231px;width:7px;height:2px;background:#c8c8c8"></div>
<div class="hr" style="left:1016px;top:285px;width:7px;height:2px;background:#c8c8c8"></div>
<div class="hr" style="left:821px;top:358px;width:302px"></div>
<svg id="ov" width="1138" height="812" viewBox="0 0 1138 812" shape-rendering="crispEdges">
<g shape-rendering="crispEdges">
<path d="M822.5 774 V777.5 H1088.5 V542.5 H1084" fill="none" stroke="#d0d0d0" stroke-width="1"/>
<path d="M866.5 774 V777.5" stroke="#d0d0d0" stroke-width="1"/>
<path d="M911.5 774 V777.5" stroke="#d0d0d0" stroke-width="1"/>
<path d="M955.5 774 V777.5" stroke="#d0d0d0" stroke-width="1"/>
<path d="M1000.5 774 V777.5" stroke="#d0d0d0" stroke-width="1"/>
<path d="M1044.5 774 V777.5" stroke="#d0d0d0" stroke-width="1"/>
<path d="M1084 542.5 H1088.5" stroke="#d0d0d0" stroke-width="1"/>
<path d="M1086 581.5 H1091" stroke="#d0d0d0" stroke-width="1"/>
<path d="M1084 620.5 H1088.5" stroke="#d0d0d0" stroke-width="1"/>
<path d="M1086 660.5 H1091" stroke="#d0d0d0" stroke-width="1"/>
<path d="M1084 699.5 H1088.5" stroke="#d0d0d0" stroke-width="1"/>
<path d="M1086 738.5 H1091" stroke="#d0d0d0" stroke-width="1"/>
<path d="M933.5 777 L935.5 769.5 H937.5 L939.5 777" fill="none" stroke="#fff" stroke-width="1"/>
</g>
<g shape-rendering="geometricPrecision">
<circle cx="60.5" cy="780.5" r="4" fill="none" stroke="#00e8f8" stroke-width="1"/><path d="M58 780.5 H63" stroke="#00e8f8" stroke-width="1"/>
<path d="M82 780.5 H89" stroke="#00e8f8" stroke-width="1"/>
<circle cx="110.5" cy="780.5" r="4" fill="none" stroke="#00e8f8" stroke-width="1"/><path d="M108 780.5 H113 M110.5 778.0 V783.0" stroke="#00e8f8" stroke-width="1"/>
<path d="M132 780.5 H139 M135.5 777.0 V784.0" stroke="#00e8f8" stroke-width="1"/>
<circle cx="60.5" cy="793.5" r="4" fill="none" stroke="#f8f000" stroke-width="1"/><path d="M58 793.5 H63" stroke="#f8f000" stroke-width="1"/>
<path d="M82 793.5 H89" stroke="#f8f000" stroke-width="1"/>
<circle cx="110.5" cy="793.5" r="4" fill="none" stroke="#f8f000" stroke-width="1"/><path d="M108 793.5 H113 M110.5 791.0 V796.0" stroke="#f8f000" stroke-width="1"/>
<path d="M132 793.5 H139 M135.5 790.0 V797.0" stroke="#f8f000" stroke-width="1"/>
</g>
<g>
<text class="sf" x="824.6" y="29.4" font-size="13" font-weight="700" fill="#d4d0c8" textLength="48.2" lengthAdjust="spacingAndGlyphs">STRIKE</text>
<text class="sf" x="890.7" y="29.4" font-size="13" font-weight="700" fill="#c8c8c8" textLength="42.7" lengthAdjust="spacingAndGlyphs">NOISE</text>
<text class="ss" x="998.6" y="29.4" font-size="13" font-weight="700" fill="#ffffff" textLength="52.8" lengthAdjust="spacingAndGlyphs">Bng 14°</text>
<text class="ss" x="1075.6" y="29.4" font-size="13" font-weight="700" fill="#00e400" textLength="41.8" lengthAdjust="spacingAndGlyphs">305mi</text>
<text class="ss" x="829.4" y="76.0" font-size="12" font-weight="400" fill="#ffffff" textLength="65.5" lengthAdjust="spacingAndGlyphs">Strikes/min</text>
<text class="ss" x="943.1" y="76.0" font-size="12" font-weight="400" fill="#ffffff" textLength="57.8" lengthAdjust="spacingAndGlyphs">Close/min</text>
<text class="ss" x="1050.6" y="76.0" font-size="12" font-weight="400" fill="#ffffff" textLength="62.0" lengthAdjust="spacingAndGlyphs">Noises/min</text>
<text class="ss" x="884.4" y="111.3" font-size="27" font-weight="700" fill="#ffffff" textLength="17.9" lengthAdjust="spacingAndGlyphs">0</text>
<text class="ss" x="994.5" y="111.3" font-size="27" font-weight="700" fill="#ffffff" textLength="17.9" lengthAdjust="spacingAndGlyphs">0</text>
<text class="ss" x="1104.0" y="111.3" font-size="27" font-weight="700" fill="#b4b4b4" textLength="17.9" lengthAdjust="spacingAndGlyphs">0</text>
<text class="ss" x="826.6" y="143.1" font-size="13" font-weight="400" fill="#ffffff" textLength="76.2" lengthAdjust="spacingAndGlyphs">Total Strikes</text>
<text class="ss" x="944.0" y="143.1" font-size="13" font-weight="400" fill="#ffffff" textLength="68.5" lengthAdjust="spacingAndGlyphs">Total Close</text>
<text class="ss" x="1047.5" y="143.1" font-size="13" font-weight="400" fill="#c8c8c8" textLength="75.0" lengthAdjust="spacingAndGlyphs">Total Noises</text>
<text class="ss" x="902.8" y="161.0" font-size="13" font-weight="400" fill="#ffffff" text-anchor="end">14</text>
<text class="ss" x="1012.5" y="161.0" font-size="13" font-weight="400" fill="#ffffff" text-anchor="end">0</text>
<text class="ss" x="1122.5" y="161.0" font-size="13" font-weight="400" fill="#ffffff" text-anchor="end">50</text>
<text class="ss" x="821.4" y="214.8" font-size="13" font-weight="400" fill="#c8c8c8" textLength="164.0" lengthAdjust="spacingAndGlyphs">Lightning type distribution</text>
<text class="ss" x="821.2" y="237.1" font-size="13" font-weight="700" fill="#ffffff" textLength="84.4" lengthAdjust="spacingAndGlyphs">Cloud-ground</text>
<text class="ss" x="913.0" y="237.1" font-size="13" font-weight="400" fill="#c8c8c8" textLength="8.3" lengthAdjust="spacingAndGlyphs">+</text>
<text class="ss" x="980.0" y="237.1" font-size="13" font-weight="700" fill="#ffffff" textLength="28.6" lengthAdjust="spacingAndGlyphs">14%</text>
<text class="ss" x="1082.7" y="237.1" font-size="13" font-weight="700" fill="#ffffff" textLength="29.0" lengthAdjust="spacingAndGlyphs">29%</text>
<text class="ss" x="821.2" y="260.6" font-size="13" font-weight="700" fill="#c8c8c8" textLength="37.8" lengthAdjust="spacingAndGlyphs">Count</text>
<text class="ss" x="925.8" y="260.6" font-size="13" font-weight="700" fill="#ffffff" textLength="7.2" lengthAdjust="spacingAndGlyphs">2</text>
<text class="ss" x="1028.2" y="260.6" font-size="13" font-weight="700" fill="#ffffff" textLength="7.8" lengthAdjust="spacingAndGlyphs">4</text>
<text class="ss" x="821.2" y="290.9" font-size="13" font-weight="700" fill="#ffffff" textLength="63.3" lengthAdjust="spacingAndGlyphs">Intracloud</text>
<text class="ss" x="913.0" y="290.9" font-size="13" font-weight="400" fill="#c8c8c8" textLength="8.3" lengthAdjust="spacingAndGlyphs">+</text>
<text class="ss" x="980.0" y="290.9" font-size="13" font-weight="700" fill="#ffffff" textLength="28.6" lengthAdjust="spacingAndGlyphs">36%</text>
<text class="ss" x="1082.7" y="290.9" font-size="13" font-weight="700" fill="#ffffff" textLength="29.0" lengthAdjust="spacingAndGlyphs">21%</text>
<text class="ss" x="821.2" y="314.3" font-size="13" font-weight="700" fill="#c8c8c8" textLength="37.8" lengthAdjust="spacingAndGlyphs">Count</text>
<text class="ss" x="925.8" y="314.3" font-size="13" font-weight="700" fill="#ffffff" textLength="7.2" lengthAdjust="spacingAndGlyphs">5</text>
<text class="ss" x="1028.2" y="314.3" font-size="13" font-weight="700" fill="#ffffff" textLength="7.8" lengthAdjust="spacingAndGlyphs">3</text>
<text class="ss" x="822.0" y="352.6" font-size="16" font-weight="700" fill="#00e800" textLength="190.0" lengthAdjust="spacingAndGlyphs">2/2/2026 9:44:56 AM</text>
<text class="ss" x="821.5" y="387.8" font-size="13" font-weight="400" fill="#fff" textLength="48.3" lengthAdjust="spacingAndGlyphs">Squelch</text>
<text class="ss" x="909.8" y="387.8" font-size="13" font-weight="400" fill="#fff" textLength="6.6" lengthAdjust="spacingAndGlyphs">0</text>
<text class="ss" x="981.4" y="387.8" font-size="13" font-weight="400" fill="#fff" textLength="43.4" lengthAdjust="spacingAndGlyphs">Upload</text>
<text class="ss" x="1061.4" y="387.8" font-size="13" font-weight="400" fill="#c8c8c8" textLength="53.4" lengthAdjust="spacingAndGlyphs">Disabled</text>
<text class="ss" x="821.5" y="407.6" font-size="13" font-weight="400" fill="#fff" textLength="72.2" lengthAdjust="spacingAndGlyphs">Persistence</text>
<text class="ss" x="909.8" y="407.6" font-size="13" font-weight="400" fill="#fff" textLength="40.9" lengthAdjust="spacingAndGlyphs">90 min</text>
<text class="ss" x="981.4" y="407.6" font-size="13" font-weight="400" fill="#fff" textLength="50.5" lengthAdjust="spacingAndGlyphs">Capture</text>
<text class="ss" x="1061.4" y="407.6" font-size="13" font-weight="400" fill="#00e400" textLength="35.8" lengthAdjust="spacingAndGlyphs">Active</text>
<text class="ss" x="821.5" y="427.8" font-size="13" font-weight="400" fill="#fff" textLength="39.3" lengthAdjust="spacingAndGlyphs">Range</text>
<text class="ss" x="909.8" y="427.8" font-size="13" font-weight="400" fill="#fff" textLength="40.9" lengthAdjust="spacingAndGlyphs">313 mi</text>
<text class="ss" x="981.4" y="427.8" font-size="13" font-weight="400" fill="#fff" textLength="52.3" lengthAdjust="spacingAndGlyphs">Receiver</text>
<text class="ss" x="1061.4" y="427.8" font-size="13" font-weight="400" fill="#00e400" textLength="50.0" lengthAdjust="spacingAndGlyphs">Enabled</text>
<text class="ss" x="821.5" y="474.9" font-size="13" font-weight="400" fill="#c8c8c8" textLength="43.3" lengthAdjust="spacingAndGlyphs">Uptime</text>
<text class="ss" x="909.8" y="474.9" font-size="13" font-weight="400" fill="#fff" textLength="43.6" lengthAdjust="spacingAndGlyphs">501:30</text>
<text class="ss" x="981.4" y="474.9" font-size="13" font-weight="400" fill="#c8c8c8" textLength="61.0" lengthAdjust="spacingAndGlyphs">Peak time</text>
<text class="ss" x="1061.4" y="474.9" font-size="13" font-weight="400" fill="#c8c8c8" textLength="23.6" lengthAdjust="spacingAndGlyphs">Plot</text>
<text class="ss" x="821.5" y="497.7" font-size="13" font-weight="400" fill="#c8c8c8" textLength="60.2" lengthAdjust="spacingAndGlyphs">Peak rate</text>
<text class="ss" x="909.8" y="497.7" font-size="13" font-weight="400" fill="#fff" textLength="33.9" lengthAdjust="spacingAndGlyphs">1/min</text>
<text class="ss" x="981.4" y="497.7" font-size="13" font-weight="400" fill="#fff" textLength="50.4" lengthAdjust="spacingAndGlyphs">9:11 AM</text>
<text class="ss" x="1061.4" y="497.7" font-size="13" font-weight="400" fill="#fff" textLength="35.4" lengthAdjust="spacingAndGlyphs">Strike</text>
<text class="ss" x="822.7" y="527.6" font-size="13" font-weight="400" fill="#c8c8c8" textLength="75.9" lengthAdjust="spacingAndGlyphs">Trend graph</text>
<text class="ss" x="908.6" y="527.6" font-size="13" font-weight="400" fill="#fff" textLength="41.1" lengthAdjust="spacingAndGlyphs">60 min</text>
<text class="ss" x="1092.2" y="546.6" font-size="12" font-weight="400" fill="#c8ccd0" textLength="12.8" lengthAdjust="spacingAndGlyphs">30</text>
<text class="ss" x="1092.2" y="625.0" font-size="12" font-weight="400" fill="#c8ccd0" textLength="12.8" lengthAdjust="spacingAndGlyphs">20</text>
<text class="ss" x="1092.2" y="703.7" font-size="12" font-weight="400" fill="#c8ccd0" textLength="12.8" lengthAdjust="spacingAndGlyphs">10</text>
<text class="ss" x="820.1" y="792.8" font-size="12" font-weight="400" fill="#c8ccd0" textLength="13.3" lengthAdjust="spacingAndGlyphs">60</text>
<text class="ss" x="864.5" y="792.8" font-size="12" font-weight="400" fill="#c8ccd0" textLength="13.3" lengthAdjust="spacingAndGlyphs">50</text>
<text class="ss" x="908.9" y="792.8" font-size="12" font-weight="400" fill="#c8ccd0" textLength="13.3" lengthAdjust="spacingAndGlyphs">40</text>
<text class="ss" x="953.2" y="792.8" font-size="12" font-weight="400" fill="#c8ccd0" textLength="13.3" lengthAdjust="spacingAndGlyphs">30</text>
<text class="ss" x="997.6" y="792.8" font-size="12" font-weight="400" fill="#c8ccd0" textLength="13.3" lengthAdjust="spacingAndGlyphs">20</text>
<text class="ss" x="1042.0" y="792.8" font-size="12" font-weight="400" fill="#c8ccd0" textLength="13.3" lengthAdjust="spacingAndGlyphs">10</text>
<text class="ss" x="1087.5" y="792.8" font-size="12" font-weight="400" fill="#c8ccd0" textLength="5.7" lengthAdjust="spacingAndGlyphs">0</text>
<text class="ss" x="1100.7" y="792.8" font-size="12" font-weight="400" fill="#c8ccd0" textLength="17.1" lengthAdjust="spacingAndGlyphs">min</text>
<text class="ss" x="13.1" y="770.9" font-size="9" font-weight="400" fill="#c8c8c8" textLength="35.4" lengthAdjust="spacingAndGlyphs">Symbols</text>
<text class="ss" x="53.1" y="770.9" font-size="9" font-weight="400" fill="#c8c8c8" textLength="16.8" lengthAdjust="spacingAndGlyphs">-CG</text>
<text class="ss" x="78.0" y="770.9" font-size="9" font-weight="400" fill="#c8c8c8" textLength="14.0" lengthAdjust="spacingAndGlyphs">-IC</text>
<text class="ss" x="99.2" y="770.9" font-size="9" font-weight="400" fill="#c8c8c8" textLength="19.6" lengthAdjust="spacingAndGlyphs">+CG</text>
<text class="ss" x="124.3" y="770.9" font-size="9" font-weight="400" fill="#c8c8c8" textLength="16.7" lengthAdjust="spacingAndGlyphs">+IC</text>
<text class="ss" x="153.3" y="770.9" font-size="9" font-weight="400" fill="#c8c8c8" textLength="89.9" lengthAdjust="spacingAndGlyphs">Strike age color codes</text>
<text class="ss" x="13.1" y="783.7" font-size="9" font-weight="400" fill="#c8c8c8" textLength="27.9" lengthAdjust="spacingAndGlyphs">Recent</text>
<text class="ss" x="13.1" y="796.6" font-size="9" font-weight="400" fill="#c8c8c8" textLength="14.4" lengthAdjust="spacingAndGlyphs">Old</text>
<text class="ss" x="153.6" y="783.7" font-size="9" font-weight="400" fill="#ffc800" textLength="15.4" lengthAdjust="spacingAndGlyphs">15+</text>
<text class="ss" x="188.4" y="783.7" font-size="9" font-weight="400" fill="#ff9c00" textLength="15.6" lengthAdjust="spacingAndGlyphs">30+</text>
<text class="ss" x="223.2" y="783.7" font-size="9" font-weight="400" fill="#f08800" textLength="16.0" lengthAdjust="spacingAndGlyphs">45+</text>
<text class="ss" x="153.6" y="796.6" font-size="9" font-weight="400" fill="#e06c00" textLength="15.4" lengthAdjust="spacingAndGlyphs">60+</text>
<text class="ss" x="188.4" y="796.6" font-size="9" font-weight="400" fill="#e05000" textLength="15.6" lengthAdjust="spacingAndGlyphs">75+</text>
<text class="ss" x="223.2" y="796.6" font-size="9" font-weight="400" fill="#f03000" textLength="16.0" lengthAdjust="spacingAndGlyphs">90+</text>
<text class="ss" x="688.9" y="802.0" font-size="10" font-weight="400" fill="#ffffff" textLength="113.3" lengthAdjust="spacingAndGlyphs">©2005 Astrogenic Systems</text>
</g>
</svg>
</body></html>
